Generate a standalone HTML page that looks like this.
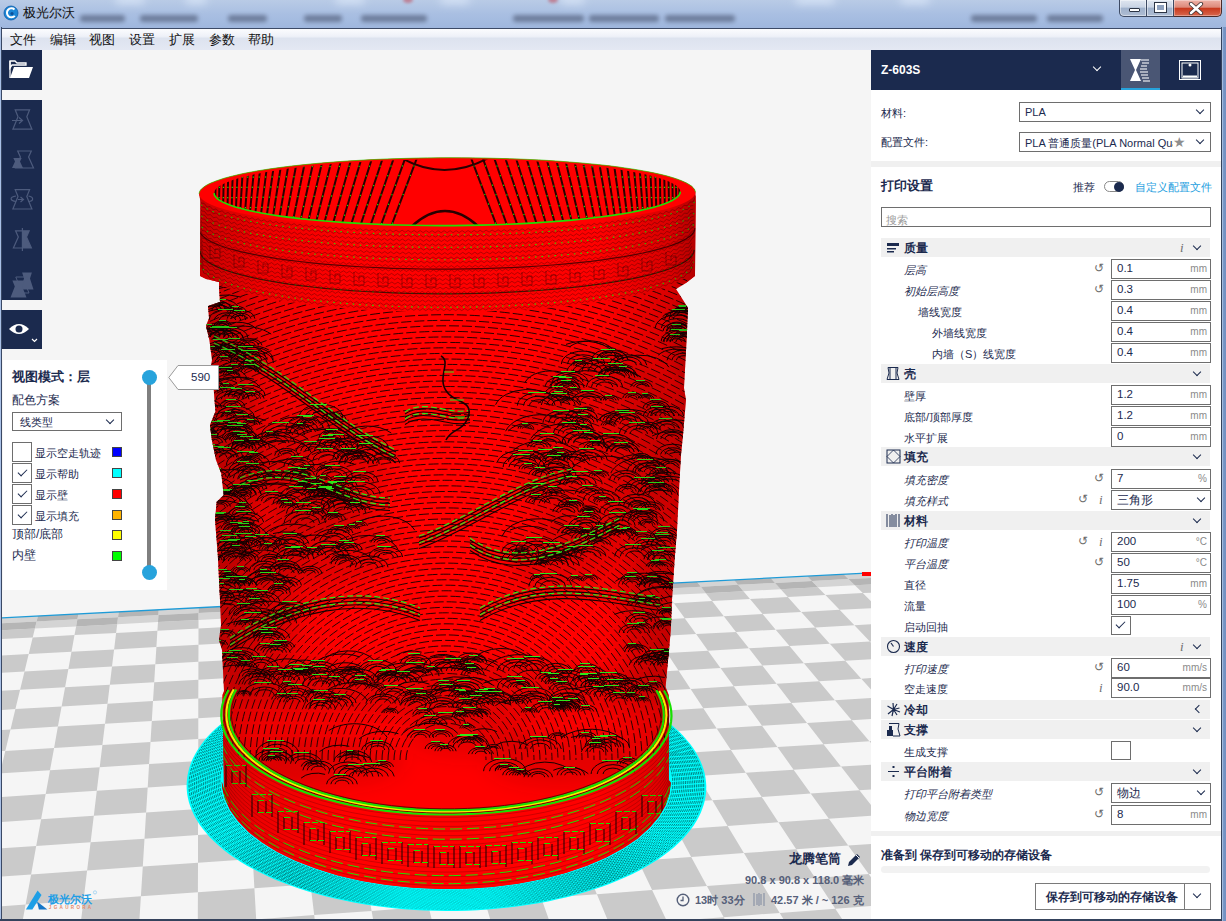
<!DOCTYPE html>
<html><head><meta charset="utf-8">
<style>
*{margin:0;padding:0;box-sizing:border-box}
html,body{width:1226px;height:921px;overflow:hidden;background:#7d9ac6;font-family:"Liberation Sans",sans-serif;color:#1b2a4e}
.abs{position:absolute}
#title{left:0;top:0;width:1226px;height:28px;background:linear-gradient(180deg,#b9cbe6 0%,#a9bfe2 50%,#9fb7de 100%);overflow:hidden}
.blob{position:absolute;background:#404a64;filter:blur(2.2px);opacity:.55;border-radius:3px}
.lblob{position:absolute;background:#e8f2ff;filter:blur(4px);opacity:.6;border-radius:6px}
#ttext{left:23px;top:4px;font-size:13px;color:#111;letter-spacing:0px}
#menubar{left:2px;top:28px;width:1219px;height:22px;background:linear-gradient(180deg,#fbfcfe 0%,#eef1f8 35%,#dde3ef 45%,#e4e8f3 100%);border-top:1px solid #3c4a66}
.mi{position:absolute;top:3px;font-size:12.5px;color:#111}
#view{left:2px;top:50px;width:869px;height:869px;background:#f5f5f5;overflow:hidden}
#svg{position:absolute;left:0;top:0}
.tb{position:absolute;left:2px;width:40px;background:#1b2a4e}
#panel{left:3px;top:360px;width:164px;height:230px;background:#fff}
#side{left:871px;top:50px;width:350px;height:869px;background:#fff}
#frameR{left:1221px;top:27px;width:1px;height:894px;background:#34425c}
#frameR2{left:1222px;top:27px;width:4px;height:894px;background:linear-gradient(90deg,#b9cdea,#7594c4 40%,#7391c2)}
#frameB{left:0;top:919px;width:1222px;height:2px;background:#34425c}
#frameL{left:0;top:27px;width:1px;height:894px;background:#a9c0e6}
#frameL2{left:1px;top:27px;width:1px;height:894px;background:#3a4864}
.hdr{position:absolute;left:10px;width:329px;height:19px;background:#f0f0f0}
.lbl{position:absolute;font-size:11px;color:#1b2a4e;white-space:nowrap}
.it{font-style:italic}
.inp{position:absolute;left:240px;width:100px;height:20px;border:1px solid #6e6e6e;background:#fff;font-size:11.5px;color:#1b2a4e;padding:2px 0 0 5px}
.unit{position:absolute;right:3px;top:3px;font-size:10px;color:#8a8a8a}
.rst{position:absolute;left:222px;font-size:12px;color:#6d6d6d}
.chev{position:absolute;width:7px;height:7px;border-right:1.6px solid #1b2a4e;border-bottom:1.6px solid #1b2a4e;transform:rotate(45deg)}
.cb{position:absolute;width:20px;height:20px;border:1px solid #6e6e6e;background:#fff}
.sw{position:absolute;left:109px;width:10px;height:10px;border:1px solid #444}
</style></head><body>
<div id="title" class="abs">
  <div class="lblob" style="left:115px;top:-5px;width:30px;height:9px"></div>
  <div class="lblob" style="left:185px;top:-5px;width:22px;height:9px"></div>
  <div class="lblob" style="left:335px;top:-5px;width:30px;height:9px"></div>
  <div class="lblob" style="left:440px;top:-5px;width:30px;height:9px"></div>
  <div class="lblob" style="left:560px;top:-5px;width:25px;height:9px"></div>
  <div class="lblob" style="left:795px;top:-5px;width:40px;height:9px"></div>
  <div class="lblob" style="left:900px;top:-5px;width:30px;height:9px"></div>
  <div class="abs" style="left:548px;top:-3px;width:10px;height:6px;border-radius:50%;background:#c05060;filter:blur(1.5px);opacity:.6"></div>
  <div class="abs" style="left:403px;top:-3px;width:10px;height:6px;border-radius:50%;background:#c05060;filter:blur(1.5px);opacity:.6"></div>
  <div class="blob" style="left:80px;top:15px;width:45px;height:7px"></div>
  <div class="blob" style="left:140px;top:15px;width:58px;height:7px"></div>
  <div class="blob" style="left:228px;top:15px;width:39px;height:7px"></div>
  <div class="blob" style="left:304px;top:15px;width:38px;height:7px"></div>
  <div class="blob" style="left:361px;top:15px;width:66px;height:7px"></div>
  <div class="blob" style="left:513px;top:15px;width:71px;height:7px"></div>
  <div class="blob" style="left:589px;top:15px;width:70px;height:7px"></div>
  <div class="blob" style="left:665px;top:15px;width:70px;height:7px"></div>
  <div class="blob" style="left:971px;top:15px;width:66px;height:7px"></div>
  <div class="blob" style="left:1047px;top:15px;width:56px;height:7px"></div>
  <svg class="abs" style="left:3px;top:5px" width="16" height="16"><circle cx="8" cy="8" r="7" fill="#1b86d6"/><circle cx="8" cy="8" r="7" fill="none" stroke="#0c5aa8" stroke-width=".8"/><path d="M11.5,4.5 A4.5,4.5 0 1 0 11.8,10.8" fill="none" stroke="#fff" stroke-width="2"/><circle cx="9" cy="8.5" r="1.6" fill="#0c4f98"/></svg>
  <div id="ttext" class="abs">极光尔沃</div>
  <div class="abs" style="left:1119px;top:0;width:28px;height:17px;border:1px solid #3d4a63;border-top:none;border-radius:0 0 0 5px;background:linear-gradient(180deg,#dfe6f0 0%,#c9d4e4 45%,#9fb1cb 50%,#aebdd3 100%);box-shadow:inset 0 0 0 1px rgba(255,255,255,.45)"><div class="abs" style="left:9px;top:8px;width:11px;height:4px;background:#fff;border:1px solid #2c3444;border-radius:1px"></div></div>
  <div class="abs" style="left:1147px;top:0;width:27px;height:17px;border:1px solid #3d4a63;border-top:none;border-left:none;background:linear-gradient(180deg,#dfe6f0 0%,#c9d4e4 45%,#9fb1cb 50%,#aebdd3 100%);box-shadow:inset 0 0 0 1px rgba(255,255,255,.45)"><div class="abs" style="left:8px;top:3px;width:11px;height:9px;border:2px solid #fff;outline:1px solid #2c3444;background:#8fa2bf"></div></div>
  <div class="abs" style="left:1174px;top:0;width:48px;height:17px;border:1px solid #4a2a28;border-top:none;border-left:none;border-radius:0 0 5px 0;background:linear-gradient(180deg,#eeb3a8 0%,#dd8a7a 45%,#c8391d 52%,#d8684e 100%);box-shadow:inset 0 0 0 1px rgba(255,255,255,.35)">
    <svg class="abs" style="left:14px;top:2px" width="16" height="13"><path d="M3,2 L13,11 M13,2 L3,11" stroke="#3a3030" stroke-width="4.2" stroke-linecap="round"/><path d="M3,2 L13,11 M13,2 L3,11" stroke="#fff" stroke-width="2.6" stroke-linecap="round"/></svg></div>
</div>
<div id="frameL" class="abs"></div><div id="frameL2" class="abs"></div>
<div id="menubar" class="abs">
  <div class="mi" style="left:8px">文件</div>
  <div class="mi" style="left:48px">编辑</div>
  <div class="mi" style="left:87px">视图</div>
  <div class="mi" style="left:127px">设置</div>
  <div class="mi" style="left:167px">扩展</div>
  <div class="mi" style="left:207px">参数</div>
  <div class="mi" style="left:246px">帮助</div>
</div>
<div id="view" class="abs">
<svg id="svg" width="869" height="869" viewBox="2 50 869 869">
<polygon points="-43.8,620.3 915.6,570.5 1336.8,939.2 -204.1,1064.7" fill="#f5f5f5"/>
<path d="M-51.6,641.9 L-9.3,639.6 L-14.4,656.4 L-57.7,658.7ZM-64.1,676.4 L-19.6,673.9 L-25.2,692.4 L-70.8,695.0ZM-77.8,714.5 L-31.0,711.8 L-37.2,732.3 L-85.2,735.1ZM-93.1,756.9 L-43.7,753.8 L-50.6,776.6 L-101.4,779.8ZM-110.1,804.1 L-57.8,800.8 L-65.5,826.3 L-119.4,829.9ZM-129.3,857.2 L-73.7,853.4 L-82.4,882.3 L-139.8,886.3ZM-150.9,917.3 L-91.6,913.0 L-101.5,945.8 L-162.9,950.4ZM-175.7,985.8 L-112.1,980.9 L-123.4,1018.6 L-189.4,1023.8ZM-6.6,630.7 L34.9,628.5 L32.7,637.4 L-9.3,639.6ZM-14.4,656.4 L28.7,654.0 L24.5,671.5 L-19.6,673.9ZM-25.2,692.4 L20.1,689.8 L15.4,709.1 L-31.0,711.8ZM-37.2,732.3 L10.5,729.4 L5.3,750.9 L-43.7,753.8ZM-50.6,776.6 L-0.1,773.5 L-5.9,797.4 L-57.8,800.8ZM-65.5,826.3 L-12.0,822.8 L-18.5,849.7 L-73.7,853.4ZM-82.4,882.3 L-25.4,878.3 L-32.8,908.8 L-91.6,913.0ZM-101.5,945.8 L-40.6,941.3 L-49.0,976.1 L-112.1,980.9ZM-123.4,1018.6 L-58.1,1013.5 L-67.7,1053.6 L-135.6,1059.1ZM32.7,637.4 L74.5,635.1 L71.5,651.7 L28.7,654.0ZM24.5,671.5 L68.4,669.0 L65.1,687.3 L20.1,689.8ZM15.4,709.1 L61.6,706.4 L57.9,726.6 L10.5,729.4ZM5.3,750.9 L54.1,747.9 L50.0,770.3 L-0.1,773.5ZM-5.9,797.4 L45.7,794.1 L41.1,819.3 L-12.0,822.8ZM-18.5,849.7 L36.2,846.0 L31.1,874.4 L-25.4,878.3ZM-32.8,908.8 L25.6,904.6 L19.7,936.9 L-40.6,941.3ZM-49.0,976.1 L13.4,971.4 L6.7,1008.4 L-58.1,1013.5ZM76.1,626.4 L117.2,624.2 L116.1,632.9 L74.5,635.1ZM71.5,651.7 L114.1,649.4 L112.0,666.6 L68.4,669.0ZM65.1,687.3 L109.8,684.7 L107.5,703.8 L61.6,706.4ZM57.9,726.6 L105.0,723.8 L102.4,744.9 L54.1,747.9ZM50.0,770.3 L99.7,767.2 L96.8,790.8 L45.7,794.1ZM41.1,819.3 L93.8,815.8 L90.6,842.3 L36.2,846.0ZM31.1,874.4 L87.1,870.5 L83.5,900.4 L25.6,904.6ZM19.7,936.9 L79.6,932.4 L75.4,966.6 L13.4,971.4ZM6.7,1008.4 L70.9,1003.3 L66.1,1042.7 L-0.5,1048.1ZM116.1,632.9 L157.4,630.7 L156.4,647.1 L114.1,649.4ZM112.0,666.6 L155.3,664.2 L154.2,682.2 L109.8,684.7ZM107.5,703.8 L153.0,701.1 L151.8,721.0 L105.0,723.8ZM102.4,744.9 L150.5,742.0 L149.1,764.1 L99.7,767.2ZM96.8,790.8 L147.7,787.6 L146.1,812.4 L93.8,815.8ZM90.6,842.3 L144.5,838.7 L142.8,866.6 L87.1,870.5ZM83.5,900.4 L140.9,896.3 L138.9,928.1 L79.6,932.4ZM75.4,966.6 L136.8,962.0 L134.6,998.3 L70.9,1003.3ZM158.0,622.0 L198.5,619.9 L198.5,628.5 L157.4,630.7ZM156.4,647.1 L198.5,644.8 L198.4,661.8 L155.3,664.2ZM154.2,682.2 L198.4,679.7 L198.3,698.5 L153.0,701.1ZM151.8,721.0 L198.3,718.2 L198.3,739.1 L150.5,742.0ZM149.1,764.1 L198.2,761.1 L198.1,784.3 L147.7,787.6ZM146.1,812.4 L198.1,808.9 L198.0,835.0 L144.5,838.7ZM142.8,866.6 L198.0,862.7 L197.9,892.2 L140.9,896.3ZM138.9,928.1 L197.8,923.7 L197.8,957.3 L136.8,962.0ZM134.6,998.3 L197.7,993.3 L197.6,1032.0 L132.2,1037.3ZM198.5,628.5 L239.4,626.3 L240.3,642.5 L198.5,644.8ZM198.4,661.8 L241.3,659.4 L242.3,677.2 L198.4,679.7ZM198.3,698.5 L243.4,695.8 L244.5,715.5 L198.3,718.2ZM198.3,739.1 L245.7,736.2 L246.9,758.0 L198.2,761.1ZM198.1,784.3 L248.3,781.1 L249.7,805.5 L198.1,808.9ZM198.0,835.0 L251.2,831.4 L252.8,858.9 L198.0,862.7ZM197.9,892.2 L254.4,888.2 L256.2,919.4 L197.8,923.7ZM197.8,957.3 L258.2,952.7 L260.2,988.4 L197.7,993.3ZM238.9,617.8 L279.0,615.7 L280.0,624.2 L239.4,626.3ZM240.3,642.5 L281.9,640.2 L283.8,657.0 L241.3,659.4ZM242.3,677.2 L285.9,674.7 L288.1,693.2 L243.4,695.8ZM244.5,715.5 L290.4,712.8 L292.8,733.3 L245.7,736.2ZM246.9,758.0 L295.4,755.0 L298.0,777.9 L248.3,781.1ZM249.7,805.5 L300.9,802.2 L303.9,827.9 L251.2,831.4ZM252.8,858.9 L307.1,855.1 L310.5,884.2 L254.4,888.2ZM256.2,919.4 L314.2,915.1 L318.0,948.1 L258.2,952.7ZM260.2,988.4 L322.2,983.5 L326.7,1021.5 L262.4,1026.7ZM280.0,624.2 L320.4,622.0 L323.2,638.0 L281.9,640.2ZM283.8,657.0 L326.2,654.7 L329.3,672.2 L285.9,674.7ZM288.1,693.2 L332.5,690.6 L336.0,710.0 L290.4,712.8ZM292.8,733.3 L339.6,730.5 L343.4,752.0 L295.4,755.0ZM298.0,777.9 L347.5,774.7 L351.7,798.8 L300.9,802.2ZM303.9,827.9 L356.3,824.3 L361.1,851.4 L307.1,855.1ZM310.5,884.2 L366.2,880.2 L371.6,910.9 L314.2,915.1ZM318.0,948.1 L377.4,943.6 L383.7,978.7 L322.2,983.5ZM318.9,613.6 L358.5,611.5 L360.5,619.9 L320.4,622.0ZM323.2,638.0 L364.3,635.7 L368.2,652.3 L326.2,654.7ZM329.3,672.2 L372.4,669.8 L376.7,688.1 L332.5,690.6ZM336.0,710.0 L381.3,707.3 L386.1,727.6 L339.6,730.5ZM343.4,752.0 L391.2,749.0 L396.6,771.6 L347.5,774.7ZM351.7,798.8 L402.2,795.5 L408.2,820.8 L356.3,824.3ZM361.1,851.4 L414.6,847.7 L421.4,876.2 L366.2,880.2ZM371.6,910.9 L428.6,906.6 L436.3,939.1 L377.4,943.6ZM383.7,978.7 L444.6,973.9 L453.4,1011.1 L390.3,1016.3ZM360.5,619.9 L400.5,617.7 L405.2,633.5 L364.3,635.7ZM368.2,652.3 L410.1,650.0 L415.2,667.3 L372.4,669.8ZM376.7,688.1 L420.6,685.5 L426.3,704.7 L381.3,707.3ZM386.1,727.6 L432.3,724.8 L438.6,746.0 L391.2,749.0ZM396.6,771.6 L445.3,768.5 L452.4,792.2 L402.2,795.5ZM408.2,820.8 L459.8,817.3 L467.8,844.0 L414.6,847.7ZM421.4,876.2 L476.2,872.3 L485.2,902.5 L428.6,906.6ZM436.3,939.1 L494.8,934.7 L505.0,969.1 L444.6,973.9ZM398.0,609.4 L437.2,607.3 L440.2,615.6 L400.5,617.7ZM405.2,633.5 L445.8,631.3 L451.7,647.7 L410.1,650.0ZM415.2,667.3 L457.8,664.9 L464.3,683.0 L420.6,685.5ZM426.3,704.7 L471.1,702.0 L478.2,722.0 L432.3,724.8ZM438.6,746.0 L485.8,743.1 L493.7,765.4 L445.3,768.5ZM452.4,792.2 L502.1,788.9 L511.1,813.8 L459.8,817.3ZM467.8,844.0 L520.5,840.3 L530.6,868.4 L476.2,872.3ZM485.2,902.5 L541.3,898.3 L552.7,930.3 L494.8,934.7ZM505.0,969.1 L564.9,964.4 L578.0,1001.0 L516.0,1006.0ZM440.2,615.6 L479.7,613.5 L486.2,629.1 L445.8,631.3ZM451.7,647.7 L493.0,645.4 L500.1,662.5 L457.8,664.9ZM464.3,683.0 L507.6,680.5 L515.5,699.3 L471.1,702.0ZM478.2,722.0 L523.8,719.2 L532.6,740.2 L485.8,743.1ZM493.7,765.4 L541.8,762.3 L551.6,785.6 L502.1,788.9ZM511.1,813.8 L561.9,810.4 L572.9,836.6 L520.5,840.3ZM530.6,868.4 L584.5,864.5 L596.9,894.2 L541.3,898.3ZM552.7,930.3 L610.1,925.9 L624.3,959.7 L564.9,964.4ZM476.2,605.3 L515.0,603.2 L518.9,611.4 L479.7,613.5ZM486.2,629.1 L526.3,626.9 L534.1,643.1 L493.0,645.4ZM500.1,662.5 L542.2,660.1 L550.7,677.9 L507.6,680.5ZM515.5,699.3 L559.7,696.7 L569.1,716.4 L523.8,719.2ZM532.6,740.2 L579.1,737.2 L589.6,759.2 L541.8,762.3ZM551.6,785.6 L600.6,782.4 L612.4,807.0 L561.9,810.4ZM572.9,836.6 L624.8,833.0 L638.1,860.7 L584.5,864.5ZM596.9,894.2 L652.1,890.1 L667.1,921.5 L610.1,925.9ZM624.3,959.7 L683.2,955.1 L700.3,991.0 L639.4,996.0ZM518.9,611.4 L558.0,609.3 L566.3,624.7 L526.3,626.9ZM534.1,643.1 L574.9,640.8 L584.0,657.7 L542.2,660.1ZM550.7,677.9 L593.6,675.5 L603.6,694.1 L559.7,696.7ZM569.1,716.4 L614.1,713.7 L625.3,734.4 L579.1,737.2ZM589.6,759.2 L637.0,756.2 L649.4,779.2 L600.6,782.4ZM612.4,807.0 L662.5,803.6 L676.4,829.4 L624.8,833.0ZM638.1,860.7 L691.2,856.9 L706.9,886.1 L652.1,890.1ZM667.1,921.5 L723.7,917.2 L741.6,950.5 L683.2,955.1ZM553.6,601.2 L592.0,599.2 L596.8,607.3 L558.0,609.3ZM566.3,624.7 L606.0,622.6 L615.6,638.6 L574.9,640.8ZM584.0,657.7 L625.6,655.4 L636.1,673.0 L593.6,675.5ZM603.6,694.1 L647.2,691.5 L658.9,711.0 L614.1,713.7ZM625.3,734.4 L671.1,731.5 L684.1,753.1 L637.0,756.2ZM649.4,779.2 L697.8,776.0 L712.3,800.2 L662.5,803.6ZM676.4,829.4 L727.6,825.9 L743.9,853.1 L691.2,856.9ZM706.9,886.1 L761.2,882.1 L779.7,912.9 L723.7,917.2ZM741.6,950.5 L799.5,945.9 L820.6,981.2 L760.7,986.1ZM596.8,607.3 L635.5,605.2 L645.5,620.4 L606.0,622.6ZM615.6,638.6 L655.9,636.3 L666.9,653.0 L625.6,655.4ZM636.1,673.0 L678.5,670.5 L690.6,688.9 L647.2,691.5ZM658.9,711.0 L703.3,708.3 L716.7,728.6 L671.1,731.5ZM684.1,753.1 L730.9,750.1 L745.8,772.8 L697.8,776.0ZM712.3,800.2 L761.7,796.9 L778.4,822.3 L727.6,825.9ZM743.9,853.1 L796.2,849.3 L815.2,878.1 L761.2,882.1ZM779.7,912.9 L835.3,908.7 L856.9,941.4 L799.5,945.9ZM630.1,597.1 L668.1,595.1 L673.9,603.2 L635.5,605.2ZM645.5,620.4 L684.7,618.3 L696.1,634.1 L655.9,636.3ZM666.9,653.0 L708.0,650.7 L720.5,668.1 L678.5,670.5ZM690.6,688.9 L733.7,686.3 L747.5,705.6 L703.3,708.3ZM716.7,728.6 L762.0,725.8 L777.4,747.1 L730.9,750.1ZM745.8,772.8 L793.6,769.7 L810.7,793.5 L761.7,796.9ZM778.4,822.3 L828.9,818.8 L848.2,845.6 L796.2,849.3ZM815.2,878.1 L868.7,874.1 L890.5,904.5 L835.3,908.7ZM856.9,941.4 L913.8,936.9 L938.7,971.6 L879.9,976.4ZM673.9,603.2 L712.1,601.1 L723.8,616.2 L684.7,618.3ZM696.1,634.1 L736.0,631.9 L748.9,648.3 L708.0,650.7ZM720.5,668.1 L762.3,665.6 L776.5,683.8 L733.7,686.3ZM747.5,705.6 L791.3,702.9 L807.0,723.0 L762.0,725.8ZM777.4,747.1 L823.5,744.2 L841.0,766.6 L793.6,769.7ZM810.7,793.5 L859.4,790.2 L879.0,815.3 L828.9,818.8ZM848.2,845.6 L899.7,841.9 L921.7,870.2 L868.7,874.1ZM890.5,904.5 L945.2,900.3 L970.3,932.5 L913.8,936.9ZM705.8,593.2 L743.4,591.2 L750.0,599.1 L712.1,601.1ZM723.8,616.2 L762.6,614.0 L775.7,629.7 L736.0,631.9ZM748.9,648.3 L789.5,646.0 L803.9,663.2 L762.3,665.6ZM776.5,683.8 L819.0,681.3 L834.9,700.2 L791.3,702.9ZM807.0,723.0 L851.7,720.2 L869.4,741.2 L823.5,744.2ZM841.0,766.6 L888.1,763.5 L907.8,787.0 L859.4,790.2ZM879.0,815.3 L928.7,811.9 L950.9,838.3 L899.7,841.9ZM921.7,870.2 L974.4,866.3 L999.5,896.2 L945.2,900.3ZM970.3,932.5 L1026.3,928.1 L1054.9,962.2 L997.1,966.9ZM750.0,599.1 L787.8,597.1 L801.2,611.9 L762.6,614.0ZM775.7,629.7 L815.2,627.5 L829.8,643.7 L789.5,646.0ZM803.9,663.2 L845.2,660.8 L861.3,678.7 L819.0,681.3ZM834.9,700.2 L878.3,697.6 L896.1,717.4 L851.7,720.2ZM869.4,741.2 L914.9,738.3 L934.8,760.4 L888.1,763.5ZM907.8,787.0 L955.8,783.7 L978.0,808.4 L928.7,811.9ZM950.9,838.3 L1001.6,834.6 L1026.7,862.5 L974.4,866.3ZM999.5,896.2 L1053.4,892.1 L1081.8,923.7 L1026.3,928.1ZM780.7,589.2 L817.9,587.2 L825.4,595.1 L787.8,597.1ZM801.2,611.9 L839.6,609.8 L854.4,625.3 L815.2,627.5ZM829.8,643.7 L869.9,641.5 L886.2,658.4 L845.2,660.8ZM861.3,678.7 L903.3,676.2 L921.3,694.9 L878.3,697.6ZM896.1,717.4 L940.2,714.6 L960.2,735.4 L914.9,738.3ZM934.8,760.4 L981.2,757.3 L1003.5,780.5 L955.8,783.7ZM978.0,808.4 L1027.0,805.0 L1052.0,831.0 L1001.6,834.6ZM1026.7,862.5 L1078.6,858.6 L1106.8,888.0 L1053.4,892.1ZM1081.8,923.7 L1136.9,919.4 L1169.1,952.9 L1112.2,957.5ZM825.4,595.1 L862.8,593.1 L877.7,607.8 L839.6,609.8ZM854.4,625.3 L893.4,623.1 L909.8,639.2 L869.9,641.5ZM886.2,658.4 L927.0,656.0 L945.1,673.7 L903.3,676.2ZM921.3,694.9 L964.1,692.3 L984.1,711.9 L940.2,714.6ZM960.2,735.4 L1005.1,732.5 L1027.4,754.3 L981.2,757.3ZM1003.5,780.5 L1050.8,777.3 L1075.7,801.6 L1027.0,805.0ZM1052.0,831.0 L1102.0,827.4 L1130.0,854.8 L1078.6,858.6ZM1106.8,888.0 L1159.8,884.0 L1191.5,915.1 L1136.9,919.4ZM854.8,585.3 L891.5,583.4 L899.9,591.1 L862.8,593.1ZM877.7,607.8 L915.7,605.7 L932.2,621.0 L893.4,623.1ZM909.8,639.2 L949.5,636.9 L967.6,653.7 L927.0,656.0ZM945.1,673.7 L986.6,671.3 L1006.6,689.7 L964.1,692.3ZM984.1,711.9 L1027.6,709.2 L1049.8,729.7 L1005.1,732.5ZM1027.4,754.3 L1073.2,751.3 L1097.9,774.1 L1050.8,777.3ZM1075.7,801.6 L1124.0,798.2 L1151.7,823.9 L1102.0,827.4ZM1130.0,854.8 L1181.1,851.0 L1212.4,880.0 L1159.8,884.0ZM1191.5,915.1 L1245.7,910.8 L1281.4,943.7 L1225.5,948.3ZM899.9,591.1 L936.9,589.1 L953.4,603.6 L915.7,605.7ZM932.2,621.0 L970.8,618.8 L988.9,634.7 L949.5,636.9ZM967.6,653.7 L1007.9,651.3 L1027.9,668.8 L986.6,671.3ZM1006.6,689.7 L1048.9,687.2 L1070.9,706.5 L1027.6,709.2ZM1049.8,729.7 L1094.2,726.8 L1118.7,748.3 L1073.2,751.3ZM1097.9,774.1 L1144.6,770.9 L1171.9,794.9 L1124.0,798.2ZM1151.7,823.9 L1201.0,820.3 L1231.8,847.3 L1181.1,851.0ZM1212.4,880.0 L1264.6,876.0 L1299.5,906.6 L1245.7,910.8Z" fill="#cacaca"/>
<path d="M-45.8,625.8 L-4.5,623.6 L-6.6,630.7 L-48.4,632.9ZM-2.9,618.2 L37.9,616.1 L36.6,621.5 L-4.5,623.6ZM36.6,621.5 L77.4,619.3 L76.1,626.4 L34.9,628.5ZM78.4,614.0 L118.7,611.9 L118.0,617.2 L77.4,619.3ZM118.0,617.2 L158.4,615.1 L158.0,622.0 L117.2,624.2ZM158.7,609.8 L198.6,607.8 L198.5,613.0 L158.4,615.1ZM198.5,613.0 L238.5,610.9 L238.9,617.8 L198.5,619.9ZM238.2,605.7 L277.6,603.7 L278.2,608.9 L238.5,610.9ZM278.2,608.9 L317.7,606.8 L318.9,613.6 L279.0,615.7ZM316.8,601.6 L355.7,599.6 L356.9,604.7 L317.7,606.8ZM356.9,604.7 L396.0,602.7 L398.0,609.4 L358.5,611.5ZM394.5,597.6 L433.0,595.6 L434.8,600.7 L396.0,602.7ZM434.8,600.7 L473.5,598.7 L476.2,605.3 L437.2,607.3ZM471.4,593.6 L509.5,591.6 L511.9,596.6 L473.5,598.7ZM511.9,596.6 L550.1,594.6 L553.6,601.2 L515.0,603.2ZM547.4,589.7 L585.1,587.7 L588.1,592.7 L550.1,594.6ZM588.1,592.7 L625.9,590.7 L630.1,597.1 L592.0,599.2ZM622.6,585.7 L659.9,583.8 L663.5,588.7 L625.9,590.7ZM663.5,588.7 L700.9,586.8 L705.8,593.2 L668.1,595.1ZM697.1,581.9 L734.0,580.0 L738.0,584.8 L700.9,586.8ZM738.0,584.8 L775.0,582.9 L780.7,589.2 L743.4,591.2ZM770.7,578.1 L807.2,576.2 L811.8,581.0 L775.0,582.9ZM811.8,581.0 L848.4,579.1 L854.8,585.3 L817.9,587.2ZM843.6,574.3 L879.7,572.4 L884.8,577.2 L848.4,579.1ZM884.8,577.2 L921.0,575.3 L928.1,581.4 L891.5,583.4Z" fill="#d4d4d4"/>
<path d="M-43.8,620.3 L-2.9,618.2 L-4.5,623.6 L-45.8,625.8ZM-4.5,623.6 L36.6,621.5 L34.9,628.5 L-6.6,630.7ZM37.9,616.1 L78.4,614.0 L77.4,619.3 L36.6,621.5ZM77.4,619.3 L118.0,617.2 L117.2,624.2 L76.1,626.4ZM118.7,611.9 L158.7,609.8 L158.4,615.1 L118.0,617.2ZM158.4,615.1 L198.5,613.0 L198.5,619.9 L158.0,622.0ZM198.6,607.8 L238.2,605.7 L238.5,610.9 L198.5,613.0ZM238.5,610.9 L278.2,608.9 L279.0,615.7 L238.9,617.8ZM277.6,603.7 L316.8,601.6 L317.7,606.8 L278.2,608.9ZM317.7,606.8 L356.9,604.7 L358.5,611.5 L318.9,613.6ZM355.7,599.6 L394.5,597.6 L396.0,602.7 L356.9,604.7ZM396.0,602.7 L434.8,600.7 L437.2,607.3 L398.0,609.4ZM433.0,595.6 L471.4,593.6 L473.5,598.7 L434.8,600.7ZM473.5,598.7 L511.9,596.6 L515.0,603.2 L476.2,605.3ZM509.5,591.6 L547.4,589.7 L550.1,594.6 L511.9,596.6ZM550.1,594.6 L588.1,592.7 L592.0,599.2 L553.6,601.2ZM585.1,587.7 L622.6,585.7 L625.9,590.7 L588.1,592.7ZM625.9,590.7 L663.5,588.7 L668.1,595.1 L630.1,597.1ZM659.9,583.8 L697.1,581.9 L700.9,586.8 L663.5,588.7ZM700.9,586.8 L738.0,584.8 L743.4,591.2 L705.8,593.2ZM734.0,580.0 L770.7,578.1 L775.0,582.9 L738.0,584.8ZM775.0,582.9 L811.8,581.0 L817.9,587.2 L780.7,589.2ZM807.2,576.2 L843.6,574.3 L848.4,579.1 L811.8,581.0ZM848.4,579.1 L884.8,577.2 L891.5,583.4 L854.8,585.3ZM879.7,572.4 L915.6,570.5 L921.0,575.3 L884.8,577.2Z" fill="#b5b5b5"/>
<line x1="-43.8" y1="620.3" x2="915.6" y2="570.5" stroke="#1e9bd7" stroke-width="1.3"/>
<path d="M695.7,752.1 L698.0,756.2 L700.1,760.3 L701.9,764.5 L703.4,768.7 L704.6,773.0 L705.4,777.3 L706.0,781.7 L706.3,786.1 L706.2,790.5 L705.8,794.9 L705.0,799.4 L704.0,803.8 L702.5,808.3 L700.8,812.7 L698.7,817.1 L696.2,821.5 L693.4,825.9 L690.2,830.3 L686.7,834.6 L682.8,838.9 L678.6,843.1 L674.1,847.2 L669.1,851.3 L663.9,855.3 L658.3,859.2 L652.3,863.1 L646.0,866.8 L639.4,870.4 L632.5,873.9 L625.3,877.3 L617.8,880.6 L610.0,883.7 L601.9,886.7 L593.5,889.6 L584.9,892.3 L576.0,894.8 L566.9,897.2 L557.6,899.3 L548.1,901.4 L538.5,903.2 L528.6,904.8 L518.6,906.3 L508.5,907.6 L498.3,908.6 L487.9,909.5 L477.5,910.2 L467.0,910.7 L456.5,910.9 L446.0,911.0 L435.5,910.8 L425.0,910.5 L414.5,909.9 L404.1,909.2 L393.8,908.2 L383.6,907.1 L373.5,905.7 L363.5,904.2 L353.7,902.5 L344.1,900.6 L334.6,898.5 L325.3,896.3 L316.3,893.8 L307.5,891.2 L298.9,888.5 L290.6,885.6 L282.5,882.6 L274.7,879.4 L267.2,876.1 L260.1,872.6 L253.2,869.1 L246.6,865.4 L240.4,861.7 L234.5,857.8 L228.9,853.9 L223.7,849.9 L218.8,845.8 L214.2,841.6 L210.0,837.4 L206.2,833.1 L202.7,828.8 L199.5,824.4 L196.7,820.1 L194.3,815.7 L192.2,811.2 L190.4,806.8 L189.0,802.4 L187.9,797.9 L187.1,793.5 L186.7,789.1 L186.6,784.7 L186.9,780.4 L187.4,776.0 L188.3,771.7 L189.4,767.5 L190.9,763.3 L192.6,759.1 L194.7,755.0 L197.0,750.9 L199.6,746.9 L202.4,743.0 L205.5,739.1 L208.9,735.3 L212.5,731.6 L216.3,728.0 L220.4,724.4 L224.7,720.9 L229.2,717.5 L233.9,714.2 L238.8,711.0 L243.9,707.9 L249.2,704.8 L254.7,701.9 L260.3,699.0 L266.1,696.3 L272.1,693.6 L278.2,691.1 L284.5,688.6 L290.9,686.3 L297.4,684.0 L304.1,681.9 L310.8,679.9 L317.7,677.9 L324.7,676.1 L331.8,674.4 L339.0,672.8 L346.2,671.3 L353.5,669.9 L361.0,668.6 L368.4,667.5 L376.0,666.4 L383.6,665.5 L391.2,664.6 L398.9,663.9 L406.6,663.3 L414.4,662.8 L422.1,662.4 L429.9,662.2 L437.7,662.0 L445.6,662.0 L453.4,662.0 L461.2,662.2 L469.0,662.5 L476.8,662.9 L484.5,663.4 L492.3,664.1 L500.0,664.8 L507.6,665.7 L515.2,666.6 L522.8,667.7 L530.3,668.9 L537.8,670.2 L545.1,671.6 L552.4,673.1 L559.6,674.8 L566.8,676.5 L573.8,678.3 L580.7,680.3 L587.5,682.4 L594.2,684.5 L600.8,686.8 L607.2,689.2 L613.6,691.6 L619.7,694.2 L625.7,696.9 L631.6,699.7 L637.3,702.6 L642.8,705.5 L648.2,708.6 L653.3,711.8 L658.3,715.0 L663.1,718.4 L667.6,721.8 L672.0,725.3 L676.1,728.9 L680.0,732.6 L683.6,736.3 L687.0,740.2 L690.2,744.1 L693.1,748.0Z" fill="#00ffff"/>
<defs><linearGradient id="bg1" gradientUnits="userSpaceOnUse" x1="186" y1="0" x2="706" y2="0"><stop offset="0" stop-color="#fff"/><stop offset="0.2" stop-color="#fff"/><stop offset="0.42" stop-color="#555"/><stop offset="0.58" stop-color="#555"/><stop offset="0.8" stop-color="#fff"/><stop offset="1" stop-color="#fff"/></linearGradient><mask id="bm"><rect x="150" y="650" width="600" height="300" fill="url(#bg1)"/></mask></defs>
<path d="M664.7,754.1 L667.5,759.4 L669.7,764.9 L671.3,770.5 L672.4,776.2 L672.8,781.9 L672.6,787.6 L671.7,793.4 L670.2,799.1 L668.0,804.9 L665.1,810.6 L661.6,816.3 L657.4,821.9 L652.5,827.5 L647.0,832.9 L640.7,838.2 L633.9,843.3 L626.3,848.3 L618.2,853.1 L609.4,857.7 L600.1,862.0 L590.2,866.1 L579.8,869.9 L568.8,873.5 L557.4,876.7 L545.6,879.6 L533.5,882.2 L520.9,884.5 L508.1,886.4 L495.1,887.9 L481.8,889.1 L468.4,889.9 L455.0,890.3 L441.5,890.3 L428.0,889.9 L414.6,889.2 L401.3,888.0 L388.2,886.5 L375.3,884.7 L362.7,882.4 L350.5,879.9 L338.6,877.0 L327.1,873.8 L316.0,870.2 L305.5,866.4 L295.5,862.4 L286.0,858.1 L277.1,853.5 L268.7,848.8 L261.0,843.8 L254.0,838.7 L247.6,833.4 L241.8,828.0 L236.7,822.5 L232.3,816.9 L228.6,811.3 L225.5,805.6 L223.1,799.8 L221.3,794.1 L220.2,788.3 L219.8,782.6 L220.0,776.9 L220.8,771.3 L222.2,765.7 L224.2,760.2 L226.7,754.8 L229.8,749.5 L233.5,744.4 L237.6,739.3 L242.3,734.4 L247.4,729.6 L253.0,725.0 L259.0,720.6 L265.4,716.3 L272.3,712.2 L279.5,708.3 L287.0,704.6 L294.9,701.1 L303.0,697.8 L311.5,694.7 L320.2,691.7 L329.2,689.0 L338.4,686.5 L347.8,684.3 L357.4,682.2 L367.2,680.4 L377.1,678.8 L387.2,677.4 L397.3,676.2 L407.6,675.3 L417.9,674.6 L428.2,674.1 L438.6,673.8 L449.0,673.8 L459.5,674.0 L469.8,674.5 L480.2,675.1 L490.5,676.0 L500.7,677.1 L510.8,678.5 L520.8,680.1 L530.7,681.9 L540.3,683.9 L549.9,686.1 L559.2,688.6 L568.3,691.2 L577.2,694.1 L585.8,697.2 L594.1,700.5 L602.2,704.0 L609.9,707.7 L617.3,711.6 L624.3,715.6 L630.9,719.9 L637.1,724.3 L642.9,728.9 L648.2,733.7 L653.1,738.6 L657.5,743.6 L661.4,748.8ZM666.4,753.9 L669.2,759.4 L671.5,764.9 L673.1,770.5 L674.2,776.2 L674.6,782.0 L674.4,787.8 L673.5,793.6 L672.0,799.4 L669.8,805.2 L666.9,811.0 L663.4,816.7 L659.2,822.4 L654.3,828.0 L648.7,833.4 L642.4,838.8 L635.5,844.0 L627.9,849.0 L619.7,853.8 L610.9,858.4 L601.4,862.8 L591.5,867.0 L580.9,870.8 L569.9,874.4 L558.4,877.7 L546.5,880.6 L534.2,883.3 L521.6,885.5 L508.7,887.5 L495.5,889.0 L482.2,890.2 L468.7,891.0 L455.1,891.4 L441.4,891.4 L427.8,891.0 L414.3,890.3 L400.9,889.1 L387.7,887.6 L374.7,885.7 L362.0,883.5 L349.6,880.9 L337.6,877.9 L326.0,874.7 L314.9,871.1 L304.3,867.3 L294.1,863.2 L284.6,858.8 L275.6,854.2 L267.2,849.4 L259.5,844.5 L252.3,839.3 L245.9,834.0 L240.1,828.5 L235.0,823.0 L230.5,817.3 L226.8,811.6 L223.7,805.9 L221.3,800.1 L219.5,794.3 L218.4,788.5 L218.0,782.7 L218.2,777.0 L219.0,771.3 L220.4,765.7 L222.4,760.2 L225.0,754.7 L228.2,749.4 L231.9,744.2 L236.1,739.1 L240.8,734.2 L245.9,729.4 L251.6,724.7 L257.6,720.3 L264.1,716.0 L271.0,711.8 L278.2,707.9 L285.8,704.2 L293.8,700.6 L302.0,697.3 L310.5,694.1 L319.3,691.2 L328.4,688.5 L337.7,686.0 L347.1,683.7 L356.8,681.6 L366.7,679.8 L376.6,678.1 L386.7,676.8 L397.0,675.6 L407.3,674.6 L417.7,673.9 L428.1,673.4 L438.6,673.2 L449.1,673.2 L459.6,673.4 L470.0,673.8 L480.4,674.5 L490.8,675.4 L501.1,676.5 L511.3,677.9 L521.3,679.4 L531.2,681.2 L541.0,683.3 L550.6,685.5 L560.0,688.0 L569.2,690.7 L578.1,693.6 L586.8,696.7 L595.2,700.0 L603.3,703.5 L611.1,707.2 L618.5,711.2 L625.6,715.3 L632.3,719.5 L638.5,724.0 L644.4,728.6 L649.8,733.4 L654.7,738.3 L659.1,743.4 L663.0,748.6ZM668.1,753.8 L670.9,759.3 L673.2,764.9 L674.9,770.6 L676.0,776.3 L676.4,782.1 L676.2,787.9 L675.4,793.8 L673.8,799.6 L671.6,805.5 L668.8,811.3 L665.2,817.1 L660.9,822.8 L656.0,828.5 L650.4,834.0 L644.1,839.4 L637.1,844.6 L629.5,849.7 L621.2,854.6 L612.3,859.2 L602.8,863.6 L592.7,867.8 L582.1,871.7 L571.0,875.3 L559.4,878.7 L547.4,881.6 L535.0,884.3 L522.3,886.6 L509.2,888.5 L496.0,890.1 L482.5,891.3 L468.9,892.1 L455.1,892.5 L441.4,892.5 L427.7,892.1 L414.0,891.3 L400.5,890.2 L387.2,888.7 L374.1,886.8 L361.3,884.5 L348.8,881.9 L336.7,878.9 L325.0,875.6 L313.8,872.0 L303.0,868.2 L292.8,864.0 L283.2,859.6 L274.1,855.0 L265.7,850.1 L257.9,845.1 L250.7,839.9 L244.2,834.5 L238.4,829.0 L233.2,823.4 L228.8,817.7 L225.0,812.0 L221.9,806.2 L219.5,800.3 L217.7,794.5 L216.6,788.7 L216.2,782.8 L216.4,777.0 L217.2,771.3 L218.7,765.7 L220.7,760.1 L223.3,754.6 L226.5,749.2 L230.2,744.0 L234.5,738.9 L239.2,733.9 L244.4,729.1 L250.1,724.4 L256.3,719.9 L262.8,715.6 L269.7,711.4 L277.0,707.5 L284.7,703.7 L292.7,700.1 L301.0,696.8 L309.6,693.6 L318.5,690.7 L327.6,687.9 L336.9,685.4 L346.5,683.1 L356.2,681.0 L366.1,679.2 L376.2,677.5 L386.3,676.1 L396.6,674.9 L407.0,674.0 L417.5,673.3 L428.0,672.8 L438.5,672.5 L449.1,672.5 L459.7,672.7 L470.2,673.2 L480.7,673.8 L491.1,674.7 L501.5,675.9 L511.7,677.2 L521.8,678.8 L531.8,680.6 L541.7,682.7 L551.3,684.9 L560.8,687.4 L570.1,690.1 L579.1,693.1 L587.8,696.2 L596.3,699.5 L604.4,703.1 L612.3,706.8 L619.8,710.7 L626.9,714.9 L633.6,719.2 L640.0,723.7 L645.8,728.3 L651.3,733.1 L656.3,738.1 L660.7,743.2 L664.7,748.5ZM669.8,753.7 L672.7,759.2 L675.0,764.9 L676.7,770.6 L677.8,776.4 L678.2,782.2 L678.0,788.1 L677.2,794.0 L675.7,799.9 L673.5,805.8 L670.6,811.7 L667.0,817.5 L662.7,823.3 L657.8,829.0 L652.1,834.5 L645.7,840.0 L638.7,845.3 L631.0,850.4 L622.7,855.3 L613.7,860.0 L604.2,864.5 L594.0,868.7 L583.3,872.6 L572.1,876.3 L560.4,879.6 L548.3,882.6 L535.8,885.3 L523.0,887.6 L509.8,889.6 L496.4,891.2 L482.8,892.4 L469.1,893.2 L455.2,893.6 L441.4,893.6 L427.5,893.2 L413.7,892.4 L400.1,891.3 L386.7,889.7 L373.4,887.8 L360.5,885.5 L347.9,882.9 L335.7,879.9 L323.9,876.6 L312.6,873.0 L301.8,869.0 L291.5,864.9 L281.8,860.4 L272.7,855.7 L264.2,850.8 L256.3,845.8 L249.1,840.5 L242.5,835.1 L236.7,829.5 L231.5,823.9 L227.0,818.2 L223.2,812.3 L220.1,806.5 L217.6,800.6 L215.9,794.7 L214.8,788.8 L214.4,782.9 L214.6,777.1 L215.5,771.3 L216.9,765.6 L219.0,760.0 L221.6,754.5 L224.9,749.1 L228.6,743.8 L232.9,738.7 L237.7,733.6 L243.0,728.8 L248.7,724.1 L254.9,719.6 L261.5,715.2 L268.5,711.0 L275.8,707.0 L283.5,703.2 L291.6,699.7 L300.0,696.3 L308.6,693.1 L317.6,690.1 L326.7,687.4 L336.2,684.8 L345.8,682.5 L355.6,680.4 L365.6,678.5 L375.7,676.9 L385.9,675.5 L396.3,674.3 L406.8,673.4 L417.3,672.6 L427.9,672.1 L438.5,671.9 L449.1,671.9 L459.7,672.1 L470.4,672.5 L480.9,673.2 L491.4,674.1 L501.8,675.2 L512.2,676.6 L522.4,678.2 L532.4,680.0 L542.3,682.1 L552.1,684.4 L561.6,686.9 L570.9,689.6 L580.0,692.5 L588.8,695.7 L597.3,699.0 L605.6,702.6 L613.5,706.4 L621.0,710.3 L628.2,714.5 L635.0,718.8 L641.4,723.3 L647.3,728.0 L652.8,732.9 L657.8,737.9 L662.3,743.0 L666.3,748.3ZM671.5,753.6 L674.4,759.2 L676.7,764.8 L678.5,770.6 L679.6,776.4 L680.0,782.3 L679.9,788.2 L679.0,794.2 L677.5,800.2 L675.3,806.1 L672.4,812.0 L668.8,817.9 L664.5,823.7 L659.5,829.5 L653.8,835.1 L647.4,840.6 L640.3,845.9 L632.6,851.1 L624.2,856.0 L615.2,860.8 L605.5,865.3 L595.3,869.6 L584.5,873.5 L573.2,877.2 L561.4,880.6 L549.2,883.6 L536.6,886.3 L523.6,888.7 L510.4,890.7 L496.9,892.3 L483.1,893.5 L469.3,894.3 L455.3,894.7 L441.3,894.7 L427.4,894.3 L413.5,893.5 L399.7,892.4 L386.1,890.8 L372.8,888.9 L359.8,886.5 L347.1,883.9 L334.8,880.9 L322.9,877.5 L311.4,873.9 L300.5,869.9 L290.2,865.7 L280.4,861.2 L271.2,856.5 L262.6,851.5 L254.7,846.4 L247.4,841.1 L240.8,835.6 L234.9,830.1 L229.7,824.4 L225.2,818.6 L221.4,812.7 L218.3,806.8 L215.8,800.9 L214.1,794.9 L213.0,789.0 L212.6,783.1 L212.8,777.2 L213.7,771.4 L215.2,765.6 L217.3,760.0 L220.0,754.4 L223.2,749.0 L227.0,743.6 L231.3,738.4 L236.2,733.4 L241.5,728.5 L247.3,723.8 L253.5,719.2 L260.1,714.8 L267.2,710.6 L274.6,706.6 L282.4,702.8 L290.5,699.2 L299.0,695.8 L307.7,692.6 L316.7,689.6 L325.9,686.8 L335.4,684.2 L345.1,681.9 L355.0,679.8 L365.0,677.9 L375.2,676.3 L385.5,674.9 L396.0,673.7 L406.5,672.7 L417.1,672.0 L427.7,671.5 L438.4,671.2 L449.1,671.2 L459.8,671.4 L470.5,671.9 L481.2,672.5 L491.7,673.5 L502.2,674.6 L512.6,676.0 L522.9,677.6 L533.0,679.4 L543.0,681.5 L552.8,683.8 L562.4,686.3 L571.8,689.0 L580.9,692.0 L589.8,695.2 L598.4,698.5 L606.7,702.1 L614.7,705.9 L622.3,709.9 L629.5,714.1 L636.4,718.5 L642.8,723.0 L648.8,727.7 L654.3,732.6 L659.4,737.7 L664.0,742.8 L668.0,748.2ZM673.2,753.5 L676.1,759.1 L678.5,764.8 L680.2,770.6 L681.4,776.5 L681.9,782.4 L681.7,788.4 L680.9,794.4 L679.3,800.4 L677.1,806.4 L674.2,812.4 L670.6,818.3 L666.3,824.2 L661.3,830.0 L655.5,835.6 L649.1,841.2 L642.0,846.6 L634.2,851.8 L625.7,856.8 L616.6,861.6 L606.9,866.1 L596.6,870.4 L585.7,874.4 L574.3,878.2 L562.4,881.6 L550.1,884.7 L537.4,887.4 L524.3,889.7 L510.9,891.7 L497.3,893.4 L483.5,894.6 L469.5,895.4 L455.4,895.8 L441.3,895.8 L427.2,895.4 L413.2,894.6 L399.3,893.5 L385.6,891.9 L372.2,889.9 L359.0,887.6 L346.2,884.9 L333.8,881.8 L321.8,878.5 L310.3,874.8 L299.3,870.8 L288.8,866.5 L279.0,862.0 L269.7,857.2 L261.1,852.2 L253.1,847.1 L245.8,841.7 L239.2,836.2 L233.2,830.6 L228.0,824.8 L223.4,819.0 L219.6,813.1 L216.4,807.1 L214.0,801.1 L212.2,795.1 L211.2,789.1 L210.8,783.2 L211.0,777.3 L211.9,771.4 L213.4,765.6 L215.5,759.9 L218.3,754.3 L221.6,748.8 L225.4,743.5 L229.8,738.2 L234.6,733.1 L240.0,728.2 L245.8,723.4 L252.1,718.9 L258.8,714.4 L265.9,710.2 L273.4,706.2 L281.3,702.3 L289.4,698.7 L297.9,695.3 L306.7,692.0 L315.8,689.0 L325.1,686.2 L334.6,683.7 L344.4,681.3 L354.3,679.2 L364.5,677.3 L374.7,675.7 L385.1,674.2 L395.6,673.0 L406.2,672.1 L416.9,671.3 L427.6,670.8 L438.4,670.6 L449.2,670.6 L459.9,670.8 L470.7,671.2 L481.4,671.9 L492.0,672.8 L502.6,674.0 L513.1,675.4 L523.4,677.0 L533.6,678.8 L543.7,680.9 L553.5,683.2 L563.2,685.7 L572.7,688.5 L581.9,691.5 L590.8,694.7 L599.5,698.1 L607.8,701.7 L615.8,705.5 L623.5,709.5 L630.8,713.7 L637.7,718.1 L644.2,722.7 L650.3,727.4 L655.9,732.4 L661.0,737.4 L665.6,742.7 L669.6,748.0ZM674.9,753.4 L677.8,759.0 L680.2,764.8 L682.0,770.6 L683.2,776.6 L683.7,782.5 L683.5,788.6 L682.7,794.6 L681.2,800.7 L679.0,806.7 L676.1,812.7 L672.4,818.7 L668.1,824.6 L663.0,830.5 L657.2,836.2 L650.8,841.8 L643.6,847.2 L635.7,852.5 L627.2,857.5 L618.0,862.4 L608.2,867.0 L597.9,871.3 L586.9,875.4 L575.4,879.1 L563.5,882.6 L551.0,885.7 L538.2,888.4 L525.0,890.8 L511.5,892.8 L497.8,894.4 L483.8,895.7 L469.7,896.5 L455.5,896.9 L441.2,896.9 L427.0,896.5 L412.9,895.7 L398.9,894.5 L385.1,893.0 L371.5,891.0 L358.3,888.6 L345.3,885.9 L332.8,882.8 L320.7,879.4 L309.1,875.7 L298.1,871.7 L287.5,867.3 L277.6,862.8 L268.2,858.0 L259.5,852.9 L251.5,847.7 L244.1,842.3 L237.5,836.8 L231.5,831.1 L226.2,825.3 L221.6,819.4 L217.8,813.4 L214.6,807.4 L212.2,801.4 L210.4,795.3 L209.4,789.3 L209.0,783.3 L209.2,777.3 L210.1,771.4 L211.7,765.6 L213.8,759.8 L216.6,754.2 L219.9,748.7 L223.8,743.3 L228.2,738.0 L233.1,732.9 L238.5,727.9 L244.4,723.1 L250.7,718.5 L257.5,714.1 L264.7,709.8 L272.2,705.7 L280.1,701.9 L288.4,698.2 L296.9,694.8 L305.8,691.5 L314.9,688.5 L324.3,685.7 L333.9,683.1 L343.7,680.7 L353.7,678.6 L363.9,676.7 L374.2,675.0 L384.7,673.6 L395.3,672.4 L406.0,671.4 L416.7,670.7 L427.5,670.2 L438.3,669.9 L449.2,669.9 L460.0,670.1 L470.9,670.6 L481.6,671.3 L492.4,672.2 L503.0,673.3 L513.5,674.7 L523.9,676.4 L534.2,678.2 L544.3,680.3 L554.3,682.6 L564.0,685.2 L573.5,688.0 L582.8,690.9 L591.8,694.2 L600.5,697.6 L608.9,701.2 L617.0,705.1 L624.8,709.1 L632.1,713.3 L639.1,717.8 L645.6,722.4 L651.7,727.1 L657.4,732.1 L662.5,737.2 L667.2,742.5 L671.3,747.9ZM676.5,753.3 L679.6,759.0 L682.0,764.8 L683.8,770.7 L685.0,776.6 L685.5,782.6 L685.4,788.7 L684.5,794.8 L683.0,800.9 L680.8,807.0 L677.9,813.1 L674.2,819.1 L669.9,825.1 L664.8,831.0 L659.0,836.7 L652.4,842.4 L645.2,847.9 L637.3,853.2 L628.7,858.3 L619.5,863.2 L609.6,867.8 L599.1,872.2 L588.1,876.3 L576.5,880.1 L564.5,883.5 L551.9,886.7 L539.0,889.5 L525.7,891.9 L512.1,893.9 L498.2,895.5 L484.1,896.8 L469.9,897.6 L455.6,898.0 L441.2,898.1 L426.9,897.7 L412.6,896.9 L398.5,895.6 L384.6,894.0 L370.9,892.0 L357.5,889.7 L344.5,886.9 L331.9,883.8 L319.7,880.4 L308.0,876.6 L296.8,872.5 L286.2,868.2 L276.2,863.6 L266.8,858.7 L258.0,853.6 L249.9,848.4 L242.5,842.9 L235.8,837.3 L229.8,831.6 L224.4,825.7 L219.9,819.8 L216.0,813.8 L212.8,807.7 L210.4,801.6 L208.6,795.5 L207.5,789.5 L207.1,783.4 L207.4,777.4 L208.4,771.4 L209.9,765.6 L212.1,759.8 L214.9,754.1 L218.2,748.5 L222.2,743.1 L226.6,737.8 L231.6,732.6 L237.0,727.6 L243.0,722.8 L249.4,718.2 L256.2,713.7 L263.4,709.4 L271.0,705.3 L279.0,701.4 L287.3,697.7 L295.9,694.3 L304.8,691.0 L314.0,687.9 L323.5,685.1 L333.1,682.5 L343.0,680.2 L353.1,678.0 L363.4,676.1 L373.8,674.4 L384.3,673.0 L395.0,671.8 L405.7,670.8 L416.5,670.0 L427.4,669.5 L438.3,669.3 L449.2,669.3 L460.1,669.5 L471.0,669.9 L481.9,670.6 L492.7,671.5 L503.4,672.7 L514.0,674.1 L524.5,675.8 L534.8,677.6 L545.0,679.7 L555.0,682.1 L564.8,684.6 L574.4,687.4 L583.7,690.4 L592.8,693.6 L601.6,697.1 L610.1,700.8 L618.2,704.6 L626.0,708.7 L633.4,712.9 L640.5,717.4 L647.1,722.0 L653.2,726.9 L658.9,731.8 L664.1,737.0 L668.8,742.3 L672.9,747.7ZM678.2,753.2 L681.3,758.9 L683.8,764.7 L685.6,770.7 L686.8,776.7 L687.3,782.7 L687.2,788.9 L686.4,795.0 L684.9,801.2 L682.6,807.3 L679.7,813.5 L676.0,819.5 L671.6,825.6 L666.5,831.5 L660.7,837.3 L654.1,843.0 L646.9,848.5 L638.9,853.9 L630.2,859.0 L620.9,863.9 L611.0,868.6 L600.4,873.0 L589.3,877.2 L577.6,881.0 L565.5,884.5 L552.8,887.7 L539.8,890.5 L526.4,892.9 L512.6,895.0 L498.7,896.6 L484.5,897.9 L470.1,898.7 L455.7,899.2 L441.2,899.2 L426.7,898.8 L412.3,898.0 L398.1,896.7 L384.0,895.1 L370.2,893.1 L356.8,890.7 L343.6,887.9 L330.9,884.8 L318.6,881.3 L306.8,877.5 L295.6,873.4 L284.9,869.0 L274.8,864.4 L265.3,859.5 L256.5,854.3 L248.3,849.0 L240.8,843.5 L234.1,837.9 L228.0,832.1 L222.7,826.2 L218.1,820.2 L214.2,814.1 L211.0,808.0 L208.5,801.9 L206.8,795.8 L205.7,789.6 L205.3,783.5 L205.6,777.5 L206.6,771.5 L208.2,765.6 L210.4,759.7 L213.2,754.0 L216.6,748.4 L220.5,742.9 L225.0,737.6 L230.1,732.4 L235.6,727.4 L241.6,722.5 L248.0,717.8 L254.9,713.3 L262.1,709.0 L269.8,704.9 L277.8,701.0 L286.2,697.3 L294.9,693.8 L303.9,690.5 L313.1,687.4 L322.6,684.6 L332.4,682.0 L342.3,679.6 L352.5,677.4 L362.8,675.5 L373.3,673.8 L383.9,672.3 L394.6,671.1 L405.4,670.1 L416.3,669.4 L427.3,668.9 L438.2,668.6 L449.2,668.6 L460.2,668.8 L471.2,669.3 L482.1,670.0 L493.0,670.9 L503.7,672.1 L514.4,673.5 L525.0,675.1 L535.4,677.0 L545.7,679.1 L555.7,681.5 L565.6,684.1 L575.3,686.9 L584.7,689.9 L593.8,693.1 L602.7,696.6 L611.2,700.3 L619.4,704.2 L627.3,708.3 L634.7,712.6 L641.8,717.0 L648.5,721.7 L654.7,726.6 L660.4,731.6 L665.7,736.8 L670.4,742.1 L674.6,747.6ZM679.9,753.1 L683.0,758.8 L685.5,764.7 L687.4,770.7 L688.6,776.7 L689.2,782.9 L689.0,789.0 L688.2,795.2 L686.7,801.4 L684.5,807.6 L681.5,813.8 L677.9,819.9 L673.4,826.0 L668.3,832.0 L662.4,837.9 L655.8,843.6 L648.5,849.2 L640.5,854.6 L631.8,859.8 L622.4,864.7 L612.4,869.5 L601.7,873.9 L590.5,878.1 L578.8,882.0 L566.5,885.5 L553.7,888.7 L540.6,891.5 L527.1,894.0 L513.2,896.1 L499.1,897.7 L484.8,899.0 L470.3,899.9 L455.7,900.3 L441.1,900.3 L426.5,899.9 L412.0,899.1 L397.7,897.8 L383.5,896.2 L369.6,894.2 L356.0,891.7 L342.8,888.9 L329.9,885.8 L317.5,882.3 L305.7,878.4 L294.3,874.3 L283.5,869.9 L273.3,865.2 L263.8,860.2 L254.9,855.0 L246.7,849.7 L239.2,844.1 L232.4,838.4 L226.3,832.6 L220.9,826.6 L216.3,820.6 L212.4,814.5 L209.2,808.3 L206.7,802.2 L205.0,796.0 L203.9,789.8 L203.5,783.6 L203.8,777.5 L204.8,771.5 L206.4,765.5 L208.7,759.7 L211.5,753.9 L214.9,748.2 L218.9,742.7 L223.5,737.4 L228.5,732.1 L234.1,727.1 L240.1,722.2 L246.6,717.5 L253.6,712.9 L260.9,708.6 L268.6,704.4 L276.7,700.5 L285.1,696.8 L293.9,693.3 L302.9,690.0 L312.2,686.9 L321.8,684.0 L331.6,681.4 L341.7,679.0 L351.9,676.8 L362.3,674.9 L372.8,673.2 L383.5,671.7 L394.3,670.5 L405.2,669.5 L416.1,668.8 L427.1,668.3 L438.2,668.0 L449.3,668.0 L460.3,668.2 L471.3,668.6 L482.3,669.3 L493.3,670.3 L504.1,671.5 L514.9,672.9 L525.5,674.5 L536.0,676.4 L546.3,678.6 L556.5,680.9 L566.4,683.5 L576.1,686.3 L585.6,689.4 L594.8,692.6 L603.7,696.1 L612.3,699.8 L620.6,703.7 L628.5,707.9 L636.0,712.2 L643.2,716.7 L649.9,721.4 L656.2,726.3 L661.9,731.3 L667.2,736.5 L672.0,741.9 L676.3,747.4ZM681.6,753.0 L684.7,758.8 L687.3,764.7 L689.2,770.7 L690.4,776.8 L691.0,783.0 L690.9,789.2 L690.1,795.4 L688.6,801.7 L686.3,807.9 L683.4,814.2 L679.7,820.3 L675.2,826.5 L670.1,832.5 L664.1,838.4 L657.5,844.2 L650.1,849.8 L642.0,855.3 L633.3,860.5 L623.8,865.5 L613.7,870.3 L603.0,874.8 L591.7,879.0 L579.9,882.9 L567.5,886.5 L554.7,889.7 L541.4,892.6 L527.8,895.1 L513.8,897.1 L499.6,898.8 L485.1,900.1 L470.5,901.0 L455.8,901.4 L441.1,901.4 L426.4,901.0 L411.8,900.2 L397.3,898.9 L383.0,897.3 L369.0,895.2 L355.2,892.8 L341.9,889.9 L328.9,886.8 L316.5,883.2 L304.5,879.3 L293.0,875.2 L282.2,870.7 L271.9,866.0 L262.3,861.0 L253.4,855.8 L245.1,850.3 L237.5,844.7 L230.7,839.0 L224.6,833.1 L219.2,827.1 L214.5,821.0 L210.6,814.9 L207.4,808.7 L204.9,802.4 L203.1,796.2 L202.1,790.0 L201.7,783.8 L202.1,777.6 L203.0,771.5 L204.7,765.5 L206.9,759.6 L209.8,753.8 L213.3,748.1 L217.3,742.6 L221.9,737.1 L227.0,731.9 L232.6,726.8 L238.7,721.9 L245.3,717.1 L252.2,712.5 L259.6,708.2 L267.4,704.0 L275.6,700.0 L284.0,696.3 L292.9,692.8 L302.0,689.4 L311.4,686.3 L321.0,683.5 L330.9,680.8 L341.0,678.4 L351.3,676.2 L361.7,674.3 L372.3,672.6 L383.1,671.1 L394.0,669.9 L404.9,668.9 L415.9,668.1 L427.0,667.6 L438.1,667.3 L449.3,667.3 L460.4,667.5 L471.5,668.0 L482.6,668.7 L493.6,669.6 L504.5,670.8 L515.3,672.3 L526.0,673.9 L536.6,675.8 L547.0,678.0 L557.2,680.3 L567.2,682.9 L577.0,685.8 L586.5,688.8 L595.8,692.1 L604.8,695.6 L613.4,699.4 L621.8,703.3 L629.8,707.5 L637.4,711.8 L644.5,716.3 L651.3,721.1 L657.6,726.0 L663.5,731.1 L668.8,736.3 L673.6,741.7 L677.9,747.3ZM683.3,752.9 L686.5,758.7 L689.0,764.7 L690.9,770.7 L692.2,776.9 L692.8,783.1 L692.7,789.3 L691.9,795.6 L690.4,801.9 L688.2,808.2 L685.2,814.5 L681.5,820.8 L677.0,826.9 L671.8,833.0 L665.9,839.0 L659.2,844.8 L651.8,850.5 L643.6,856.0 L634.8,861.3 L625.3,866.3 L615.1,871.1 L604.3,875.7 L592.9,879.9 L581.0,883.9 L568.5,887.5 L555.6,890.7 L542.2,893.6 L528.4,896.1 L514.4,898.2 L500.0,899.9 L485.4,901.2 L470.7,902.1 L455.9,902.5 L441.0,902.6 L426.2,902.2 L411.5,901.3 L396.9,900.1 L382.5,898.4 L368.3,896.3 L354.5,893.8 L341.0,891.0 L328.0,887.7 L315.4,884.2 L303.3,880.3 L291.8,876.0 L280.8,871.5 L270.5,866.8 L260.8,861.7 L251.8,856.5 L243.5,851.0 L235.9,845.4 L229.0,839.6 L222.8,833.6 L217.4,827.6 L212.7,821.4 L208.8,815.2 L205.5,809.0 L203.1,802.7 L201.3,796.4 L200.3,790.1 L199.9,783.9 L200.3,777.7 L201.3,771.5 L202.9,765.5 L205.2,759.5 L208.1,753.7 L211.6,748.0 L215.7,742.4 L220.3,736.9 L225.5,731.6 L231.2,726.5 L237.3,721.5 L243.9,716.8 L250.9,712.2 L258.4,707.8 L266.2,703.6 L274.4,699.6 L283.0,695.8 L291.8,692.3 L301.0,688.9 L310.5,685.8 L320.2,682.9 L330.1,680.3 L340.3,677.8 L350.7,675.6 L361.2,673.7 L371.9,672.0 L382.7,670.5 L393.6,669.2 L404.7,668.2 L415.7,667.5 L426.9,667.0 L438.1,666.7 L449.3,666.7 L460.5,666.9 L471.7,667.4 L482.8,668.1 L493.9,669.0 L504.9,670.2 L515.8,671.6 L526.5,673.3 L537.2,675.2 L547.6,677.4 L557.9,679.8 L568.0,682.4 L577.8,685.2 L587.5,688.3 L596.8,691.6 L605.8,695.2 L614.6,698.9 L623.0,702.9 L631.0,707.0 L638.7,711.4 L645.9,716.0 L652.7,720.7 L659.1,725.7 L665.0,730.8 L670.4,736.1 L675.2,741.5 L679.6,747.1ZM685.0,752.7 L688.2,758.6 L690.8,764.6 L692.7,770.7 L694.0,776.9 L694.6,783.2 L694.5,789.5 L693.8,795.8 L692.2,802.2 L690.0,808.5 L687.0,814.9 L683.3,821.2 L678.8,827.4 L673.6,833.5 L667.6,839.5 L660.9,845.4 L653.4,851.1 L645.2,856.7 L636.3,862.0 L626.7,867.1 L616.5,872.0 L605.6,876.6 L594.1,880.9 L582.1,884.8 L569.5,888.5 L556.5,891.8 L543.0,894.7 L529.1,897.2 L514.9,899.3 L500.5,901.1 L485.8,902.4 L470.9,903.2 L456.0,903.7 L441.0,903.7 L426.1,903.3 L411.2,902.4 L396.5,901.2 L381.9,899.5 L367.7,897.4 L353.7,894.9 L340.2,892.0 L327.0,888.7 L314.3,885.1 L302.1,881.2 L290.5,876.9 L279.5,872.4 L269.1,867.6 L259.3,862.5 L250.3,857.2 L241.9,851.7 L234.2,846.0 L227.3,840.1 L221.1,834.1 L215.6,828.0 L210.9,821.8 L206.9,815.6 L203.7,809.3 L201.2,802.9 L199.5,796.6 L198.4,790.3 L198.1,784.0 L198.5,777.7 L199.5,771.6 L201.2,765.5 L203.5,759.5 L206.5,753.6 L210.0,747.8 L214.1,742.2 L218.8,736.7 L224.0,731.4 L229.7,726.2 L235.9,721.2 L242.5,716.4 L249.6,711.8 L257.1,707.4 L265.0,703.2 L273.3,699.1 L281.9,695.3 L290.8,691.8 L300.1,688.4 L309.6,685.3 L319.4,682.4 L329.4,679.7 L339.6,677.2 L350.0,675.0 L360.6,673.1 L371.4,671.3 L382.3,669.9 L393.3,668.6 L404.4,667.6 L415.6,666.8 L426.8,666.3 L438.0,666.1 L449.3,666.0 L460.6,666.3 L471.8,666.7 L483.1,667.4 L494.2,668.4 L505.3,669.6 L516.2,671.0 L527.1,672.7 L537.8,674.6 L548.3,676.8 L558.6,679.2 L568.8,681.8 L578.7,684.7 L588.4,687.8 L597.8,691.1 L606.9,694.7 L615.7,698.5 L624.1,702.4 L632.2,706.6 L640.0,711.0 L647.3,715.6 L654.1,720.4 L660.6,725.4 L666.5,730.6 L671.9,735.9 L676.8,741.4 L681.2,747.0ZM686.7,752.6 L689.9,758.6 L692.5,764.6 L694.5,770.8 L695.8,777.0 L696.4,783.3 L696.4,789.7 L695.6,796.0 L694.1,802.5 L691.9,808.9 L688.9,815.2 L685.1,821.6 L680.6,827.8 L675.4,834.0 L669.3,840.1 L662.6,846.0 L655.1,851.8 L646.8,857.4 L637.8,862.8 L628.2,867.9 L617.9,872.8 L606.9,877.4 L595.4,881.8 L583.2,885.8 L570.6,889.5 L557.4,892.8 L543.8,895.7 L529.8,898.3 L515.5,900.4 L500.9,902.2 L486.1,903.5 L471.1,904.4 L456.1,904.8 L441.0,904.8 L425.9,904.4 L410.9,903.6 L396.0,902.3 L381.4,900.6 L367.0,898.4 L353.0,895.9 L339.3,893.0 L326.0,889.7 L313.2,886.1 L301.0,882.1 L289.3,877.8 L278.2,873.2 L267.7,868.4 L257.8,863.2 L248.7,857.9 L240.3,852.3 L232.6,846.6 L225.6,840.7 L219.3,834.6 L213.8,828.5 L209.1,822.2 L205.1,815.9 L201.9,809.6 L199.4,803.2 L197.6,796.8 L196.6,790.4 L196.3,784.1 L196.7,777.8 L197.7,771.6 L199.4,765.5 L201.8,759.4 L204.8,753.5 L208.3,747.7 L212.5,742.0 L217.2,736.5 L222.5,731.1 L228.2,725.9 L234.5,720.9 L241.2,716.1 L248.3,711.4 L255.9,707.0 L263.8,702.7 L272.2,698.7 L280.8,694.9 L289.8,691.3 L299.1,687.9 L308.7,684.7 L318.6,681.8 L328.6,679.1 L338.9,676.7 L349.4,674.4 L360.1,672.5 L370.9,670.7 L381.9,669.2 L393.0,668.0 L404.1,667.0 L415.4,666.2 L426.7,665.7 L438.0,665.4 L449.3,665.4 L460.7,665.6 L472.0,666.1 L483.3,666.8 L494.5,667.8 L505.6,669.0 L516.7,670.4 L527.6,672.1 L538.3,674.0 L548.9,676.2 L559.4,678.6 L569.6,681.3 L579.6,684.2 L589.3,687.3 L598.8,690.6 L607.9,694.2 L616.8,698.0 L625.3,702.0 L633.5,706.2 L641.3,710.6 L648.6,715.3 L655.5,720.1 L662.0,725.1 L668.0,730.3 L673.5,735.7 L678.5,741.2 L682.9,746.8ZM688.4,752.5 L691.6,758.5 L694.3,764.6 L696.3,770.8 L697.6,777.1 L698.3,783.4 L698.2,789.8 L697.4,796.3 L695.9,802.7 L693.7,809.2 L690.7,815.6 L686.9,822.0 L682.4,828.3 L677.1,834.5 L671.1,840.6 L664.3,846.6 L656.7,852.4 L648.4,858.1 L639.4,863.5 L629.7,868.7 L619.3,873.7 L608.2,878.3 L596.6,882.7 L584.3,886.7 L571.6,890.5 L558.3,893.8 L544.6,896.8 L530.5,899.3 L516.1,901.5 L501.4,903.3 L486.5,904.6 L471.4,905.5 L456.2,906.0 L440.9,906.0 L425.7,905.5 L410.6,904.7 L395.6,903.4 L380.9,901.7 L366.4,899.5 L352.2,897.0 L338.4,894.0 L325.0,890.7 L312.2,887.0 L299.8,883.0 L288.0,878.7 L276.8,874.1 L266.3,869.2 L256.4,864.0 L247.2,858.6 L238.7,853.0 L230.9,847.2 L223.9,841.2 L217.6,835.1 L212.1,828.9 L207.3,822.7 L203.3,816.3 L200.1,809.9 L197.6,803.5 L195.8,797.0 L194.8,790.6 L194.5,784.2 L194.9,777.9 L195.9,771.6 L197.7,765.4 L200.1,759.4 L203.1,753.4 L206.7,747.5 L210.9,741.8 L215.6,736.3 L220.9,730.9 L226.7,725.6 L233.0,720.6 L239.8,715.7 L247.0,711.0 L254.6,706.6 L262.6,702.3 L271.0,698.2 L279.8,694.4 L288.8,690.8 L298.2,687.4 L307.8,684.2 L317.8,681.3 L327.9,678.6 L338.3,676.1 L348.8,673.9 L359.6,671.9 L370.5,670.1 L381.5,668.6 L392.6,667.4 L403.9,666.3 L415.2,665.6 L426.5,665.0 L437.9,664.8 L449.4,664.8 L460.8,665.0 L472.2,665.4 L483.5,666.2 L494.8,667.1 L506.0,668.3 L517.1,669.8 L528.1,671.5 L538.9,673.4 L549.6,675.6 L560.1,678.1 L570.4,680.7 L580.4,683.6 L590.2,686.8 L599.8,690.1 L609.0,693.7 L617.9,697.5 L626.5,701.6 L634.7,705.8 L642.6,710.3 L650.0,714.9 L657.0,719.8 L663.5,724.8 L669.5,730.0 L675.1,735.4 L680.1,741.0 L684.5,746.7ZM690.1,752.4 L693.4,758.4 L696.0,764.6 L698.1,770.8 L699.4,777.1 L700.1,783.5 L700.1,790.0 L699.3,796.5 L697.8,803.0 L695.5,809.5 L692.5,815.9 L688.8,822.4 L684.2,828.8 L678.9,835.0 L672.8,841.2 L666.0,847.2 L658.3,853.1 L650.0,858.8 L640.9,864.3 L631.1,869.5 L620.7,874.5 L609.5,879.2 L597.8,883.6 L585.5,887.7 L572.6,891.5 L559.2,894.8 L545.4,897.8 L531.2,900.4 L516.7,902.6 L501.8,904.4 L486.8,905.7 L471.6,906.6 L456.2,907.1 L440.9,907.1 L425.6,906.7 L410.3,905.8 L395.2,904.5 L380.3,902.8 L365.7,900.6 L351.4,898.0 L337.5,895.1 L324.1,891.7 L311.1,888.0 L298.6,884.0 L286.7,879.6 L275.5,874.9 L264.8,870.0 L254.9,864.7 L245.6,859.3 L237.0,853.6 L229.2,847.8 L222.2,841.8 L215.8,835.7 L210.3,829.4 L205.5,823.1 L201.5,816.7 L198.2,810.2 L195.7,803.7 L194.0,797.2 L193.0,790.8 L192.7,784.3 L193.1,778.0 L194.2,771.6 L195.9,765.4 L198.4,759.3 L201.4,753.3 L205.0,747.4 L209.3,741.7 L214.1,736.1 L219.4,730.6 L225.3,725.4 L231.6,720.3 L238.4,715.4 L245.7,710.7 L253.4,706.2 L261.4,701.9 L269.9,697.8 L278.7,693.9 L287.8,690.3 L297.3,686.9 L307.0,683.7 L316.9,680.7 L327.2,678.0 L337.6,675.5 L348.2,673.3 L359.0,671.3 L370.0,669.5 L381.1,668.0 L392.3,666.7 L403.6,665.7 L415.0,664.9 L426.4,664.4 L437.9,664.1 L449.4,664.1 L460.9,664.3 L472.3,664.8 L483.8,665.5 L495.1,666.5 L506.4,667.7 L517.6,669.2 L528.6,670.9 L539.5,672.9 L550.3,675.1 L560.8,677.5 L571.2,680.2 L581.3,683.1 L591.2,686.2 L600.8,689.6 L610.1,693.2 L619.0,697.1 L627.7,701.1 L636.0,705.4 L643.9,709.9 L651.3,714.6 L658.4,719.5 L664.9,724.5 L671.0,729.8 L676.6,735.2 L681.7,740.8 L686.2,746.5ZM691.8,752.3 L695.1,758.4 L697.8,764.5 L699.9,770.8 L701.2,777.2 L701.9,783.6 L701.9,790.1 L701.1,796.7 L699.6,803.2 L697.4,809.8 L694.4,816.3 L690.6,822.8 L686.0,829.2 L680.7,835.5 L674.6,841.8 L667.7,847.8 L660.0,853.8 L651.6,859.5 L642.4,865.0 L632.6,870.3 L622.0,875.4 L610.8,880.1 L599.0,884.6 L586.6,888.7 L573.6,892.4 L560.2,895.9 L546.2,898.9 L531.9,901.5 L517.3,903.7 L502.3,905.5 L487.1,906.9 L471.8,907.8 L456.3,908.2 L440.8,908.3 L425.4,907.8 L410.0,906.9 L394.8,905.6 L379.8,903.9 L365.1,901.7 L350.7,899.1 L336.6,896.1 L323.1,892.7 L310.0,889.0 L297.4,884.9 L285.5,880.5 L274.1,875.8 L263.4,870.8 L253.4,865.5 L244.0,860.0 L235.4,854.3 L227.6,848.4 L220.4,842.4 L214.1,836.2 L208.5,829.9 L203.7,823.5 L199.7,817.0 L196.4,810.5 L193.9,804.0 L192.2,797.5 L191.1,790.9 L190.9,784.5 L191.3,778.0 L192.4,771.7 L194.2,765.4 L196.6,759.2 L199.7,753.2 L203.4,747.3 L207.7,741.5 L212.5,735.8 L217.9,730.4 L223.8,725.1 L230.2,720.0 L237.1,715.0 L244.4,710.3 L252.1,705.8 L260.3,701.4 L268.8,697.3 L277.6,693.4 L286.8,689.8 L296.3,686.3 L306.1,683.1 L316.1,680.2 L326.4,677.4 L336.9,674.9 L347.6,672.7 L358.5,670.7 L369.5,668.9 L380.7,667.4 L392.0,666.1 L403.3,665.1 L414.8,664.3 L426.3,663.8 L437.9,663.5 L449.4,663.5 L461.0,663.7 L472.5,664.2 L484.0,664.9 L495.4,665.9 L506.8,667.1 L518.0,668.6 L529.1,670.3 L540.1,672.3 L550.9,674.5 L561.5,676.9 L571.9,679.6 L582.1,682.6 L592.1,685.7 L601.7,689.1 L611.1,692.8 L620.2,696.6 L628.9,700.7 L637.2,705.0 L645.1,709.5 L652.7,714.2 L659.8,719.1 L666.4,724.2 L672.6,729.5 L678.2,735.0 L683.3,740.6 L687.8,746.4ZM693.4,752.2 L696.8,758.3 L699.6,764.5 L701.6,770.8 L703.0,777.3 L703.7,783.7 L703.7,790.3 L703.0,796.9 L701.5,803.5 L699.2,810.1 L696.2,816.7 L692.4,823.2 L687.8,829.7 L682.5,836.1 L676.3,842.3 L669.4,848.5 L661.7,854.4 L653.2,860.2 L644.0,865.8 L634.1,871.1 L623.4,876.2 L612.2,881.0 L600.2,885.5 L587.7,889.6 L574.7,893.5 L561.1,896.9 L547.1,899.9 L532.6,902.6 L517.8,904.8 L502.8,906.6 L487.5,908.0 L472.0,908.9 L456.4,909.4 L440.8,909.4 L425.2,909.0 L409.7,908.1 L394.4,906.7 L379.3,905.0 L364.4,902.8 L349.9,900.1 L335.8,897.1 L322.1,893.7 L308.9,889.9 L296.3,885.8 L284.2,881.4 L272.8,876.6 L262.0,871.6 L251.9,866.3 L242.5,860.7 L233.8,855.0 L225.9,849.0 L218.7,842.9 L212.3,836.7 L206.7,830.3 L201.9,823.9 L197.9,817.4 L194.6,810.8 L192.1,804.2 L190.3,797.7 L189.3,791.1 L189.0,784.6 L189.5,778.1 L190.6,771.7 L192.4,765.4 L194.9,759.2 L198.0,753.1 L201.8,747.1 L206.1,741.3 L211.0,735.6 L216.4,730.1 L222.3,724.8 L228.8,719.6 L235.7,714.7 L243.1,709.9 L250.9,705.4 L259.1,701.0 L267.6,696.9 L276.6,693.0 L285.8,689.3 L295.4,685.8 L305.2,682.6 L315.3,679.6 L325.7,676.9 L336.2,674.4 L347.0,672.1 L358.0,670.1 L369.1,668.3 L380.3,666.8 L391.6,665.5 L403.1,664.4 L414.6,663.7 L426.2,663.1 L437.8,662.9 L449.4,662.8 L461.1,663.1 L472.7,663.5 L484.2,664.3 L495.7,665.3 L507.1,666.5 L518.4,668.0 L529.6,669.7 L540.7,671.7 L551.6,673.9 L562.2,676.4 L572.7,679.1 L583.0,682.0 L593.0,685.2 L602.7,688.6 L612.2,692.3 L621.3,696.2 L630.0,700.3 L638.4,704.6 L646.4,709.1 L654.0,713.9 L661.2,718.8 L667.9,723.9 L674.1,729.3 L679.7,734.8 L684.9,740.4 L689.5,746.2Z" fill="none" stroke="#002020" stroke-width="0.7" stroke-opacity="0.8" stroke-dasharray="3 1.2" mask="url(#bm)"/>
<defs><filter id="soft" x="-50%" y="-50%" width="200%" height="200%"><feGaussianBlur stdDeviation="10"/></filter></defs>
<defs><clipPath id="objclip"><path d="M199.1,193.8 L200.5,190.1 L204.5,186.5 L210.9,183.0 L219.7,179.7 L230.6,176.5 L243.4,173.5 L258.0,170.8 L274.1,168.3 L291.7,166.0 L310.4,164.0 L330.2,162.3 L350.8,160.8 L372.2,159.6 L394.1,158.7 L416.3,158.1 L438.8,157.8 L461.3,157.8 L483.8,158.0 L506.0,158.6 L527.8,159.4 L549.0,160.5 L569.5,162.0 L589.1,163.7 L607.6,165.6 L624.8,167.9 L640.6,170.4 L654.8,173.1 L667.2,176.0 L677.5,179.2 L685.7,182.6 L691.5,186.1 L694.7,189.7 L695.4,192.2 L695.7,202.0 L695.0,276.0 L686.0,283.0 L676.0,289.0 L683.0,300.0 L688.0,308.0 L686.6,340.0 L684.0,388.0 L686.0,400.0 L683.0,435.0 L681.0,455.0 L679.4,483.0 L677.0,531.0 L674.6,560.0 L672.0,600.0 L670.8,630.6 L665.6,687.0 L668.8,695.0 L668.8,780.0 L670.8,782.7 L669.4,794.1 L665.5,805.5 L659.0,816.8 L649.7,827.8 L637.8,838.4 L623.3,848.3 L606.3,857.5 L587.1,865.8 L565.8,873.0 L542.7,879.0 L518.1,883.7 L492.4,886.9 L466.0,888.7 L439.3,889.0 L412.7,887.8 L386.6,885.1 L361.5,880.9 L337.7,875.4 L315.5,868.6 L295.3,860.8 L277.3,851.9 L261.6,842.3 L248.4,831.9 L237.9,821.1 L230.0,809.9 L224.8,798.6 L222.1,787.2 L221.8,781.5 L224.0,790.0 L222.4,695.0 L224.0,691.0 L222.0,650.0 L219.0,640.0 L221.0,625.0 L220.0,600.0 L217.8,555.0 L215.0,520.0 L216.6,502.0 L223.7,495.0 L221.3,473.7 L216.0,460.0 L211.8,440.0 L210.0,425.0 L215.4,411.6 L213.0,380.0 L210.0,372.0 L212.0,360.0 L209.4,340.0 L206.0,326.0 L209.0,318.0 L208.0,306.0 L220.0,302.0 L219.0,289.0 L219.0,282.0 L206.0,279.0 L200.0,276.0 L200.4,201.0Z"/></clipPath></defs>
<path d="M199.1,193.8 L200.5,190.1 L204.5,186.5 L210.9,183.0 L219.7,179.7 L230.6,176.5 L243.4,173.5 L258.0,170.8 L274.1,168.3 L291.7,166.0 L310.4,164.0 L330.2,162.3 L350.8,160.8 L372.2,159.6 L394.1,158.7 L416.3,158.1 L438.8,157.8 L461.3,157.8 L483.8,158.0 L506.0,158.6 L527.8,159.4 L549.0,160.5 L569.5,162.0 L589.1,163.7 L607.6,165.6 L624.8,167.9 L640.6,170.4 L654.8,173.1 L667.2,176.0 L677.5,179.2 L685.7,182.6 L691.5,186.1 L694.7,189.7 L695.4,192.2 L695.7,202.0 L695.0,276.0 L686.0,283.0 L676.0,289.0 L683.0,300.0 L688.0,308.0 L686.6,340.0 L684.0,388.0 L686.0,400.0 L683.0,435.0 L681.0,455.0 L679.4,483.0 L677.0,531.0 L674.6,560.0 L672.0,600.0 L670.8,630.6 L665.6,687.0 L668.8,695.0 L668.8,780.0 L670.8,782.7 L669.4,794.1 L665.5,805.5 L659.0,816.8 L649.7,827.8 L637.8,838.4 L623.3,848.3 L606.3,857.5 L587.1,865.8 L565.8,873.0 L542.7,879.0 L518.1,883.7 L492.4,886.9 L466.0,888.7 L439.3,889.0 L412.7,887.8 L386.6,885.1 L361.5,880.9 L337.7,875.4 L315.5,868.6 L295.3,860.8 L277.3,851.9 L261.6,842.3 L248.4,831.9 L237.9,821.1 L230.0,809.9 L224.8,798.6 L222.1,787.2 L221.8,781.5 L224.0,790.0 L222.4,695.0 L224.0,691.0 L222.0,650.0 L219.0,640.0 L221.0,625.0 L220.0,600.0 L217.8,555.0 L215.0,520.0 L216.6,502.0 L223.7,495.0 L221.3,473.7 L216.0,460.0 L211.8,440.0 L210.0,425.0 L215.4,411.6 L213.0,380.0 L210.0,372.0 L212.0,360.0 L209.4,340.0 L206.0,326.0 L209.0,318.0 L208.0,306.0 L220.0,302.0 L219.0,289.0 L219.0,282.0 L206.0,279.0 L200.0,276.0 L200.4,201.0Z" fill="#ff0000"/>
<g clip-path="url(#objclip)"><path d="M406.0,760.0 A40.0,36.8 0 0 1 486.0,760.0M400.0,760.0 A46.0,42.3 0 0 1 492.0,760.0M394.0,760.0 A52.0,47.8 0 0 1 498.0,760.0M388.0,760.0 A58.0,53.4 0 0 1 504.0,760.0M382.0,760.0 A64.0,58.9 0 0 1 510.0,760.0M376.0,760.0 A70.0,64.4 0 0 1 516.0,760.0M370.0,760.0 A76.0,69.9 0 0 1 522.0,760.0M364.0,760.0 A82.0,75.4 0 0 1 528.0,760.0M358.0,760.0 A88.0,81.0 0 0 1 534.0,760.0M352.0,760.0 A94.0,86.5 0 0 1 540.0,760.0M346.0,760.0 A100.0,92.0 0 0 1 546.0,760.0M340.0,760.0 A106.0,97.5 0 0 1 552.0,760.0M334.0,760.0 A112.0,103.0 0 0 1 558.0,760.0M328.0,760.0 A118.0,108.6 0 0 1 564.0,760.0M322.0,760.0 A124.0,114.1 0 0 1 570.0,760.0M316.0,760.0 A130.0,119.6 0 0 1 576.0,760.0M310.0,760.0 A136.0,125.1 0 0 1 582.0,760.0M304.0,760.0 A142.0,130.6 0 0 1 588.0,760.0M298.0,760.0 A148.0,136.2 0 0 1 594.0,760.0M292.0,760.0 A154.0,141.7 0 0 1 600.0,760.0M286.0,760.0 A160.0,147.2 0 0 1 606.0,760.0M280.0,760.0 A166.0,152.7 0 0 1 612.0,760.0M274.0,760.0 A172.0,158.2 0 0 1 618.0,760.0M268.0,760.0 A178.0,163.8 0 0 1 624.0,760.0M262.0,760.0 A184.0,169.3 0 0 1 630.0,760.0M256.0,760.0 A190.0,174.8 0 0 1 636.0,760.0M250.0,760.0 A196.0,180.3 0 0 1 642.0,760.0M244.0,760.0 A202.0,185.8 0 0 1 648.0,760.0M238.0,760.0 A208.0,191.4 0 0 1 654.0,760.0M232.0,760.0 A214.0,196.9 0 0 1 660.0,760.0M226.0,760.0 A220.0,202.4 0 0 1 666.0,760.0M220.0,760.0 A226.0,207.9 0 0 1 672.0,760.0M214.0,760.0 A232.0,213.4 0 0 1 678.0,760.0M208.0,760.0 A238.0,219.0 0 0 1 684.0,760.0M202.0,760.0 A244.0,224.5 0 0 1 690.0,760.0M196.0,760.0 A250.0,230.0 0 0 1 696.0,760.0M190.0,760.0 A256.0,235.5 0 0 1 702.0,760.0M184.0,760.0 A262.0,241.0 0 0 1 708.0,760.0M178.0,760.0 A268.0,246.6 0 0 1 714.0,760.0M172.0,760.0 A274.0,252.1 0 0 1 720.0,760.0M166.0,760.0 A280.0,257.6 0 0 1 726.0,760.0M160.0,760.0 A286.0,263.1 0 0 1 732.0,760.0M154.0,760.0 A292.0,268.6 0 0 1 738.0,760.0M148.0,760.0 A298.0,274.2 0 0 1 744.0,760.0M142.0,760.0 A304.0,279.7 0 0 1 750.0,760.0M136.0,760.0 A310.0,285.2 0 0 1 756.0,760.0M130.0,760.0 A316.0,290.7 0 0 1 762.0,760.0M124.0,760.0 A322.0,296.2 0 0 1 768.0,760.0M118.0,760.0 A328.0,301.8 0 0 1 774.0,760.0M112.0,760.0 A334.0,307.3 0 0 1 780.0,760.0M106.0,760.0 A340.0,312.8 0 0 1 786.0,760.0M100.0,760.0 A346.0,318.3 0 0 1 792.0,760.0M94.0,760.0 A352.0,323.8 0 0 1 798.0,760.0M88.0,760.0 A358.0,329.4 0 0 1 804.0,760.0M82.0,760.0 A364.0,334.9 0 0 1 810.0,760.0M76.0,760.0 A370.0,340.4 0 0 1 816.0,760.0M70.0,760.0 A376.0,345.9 0 0 1 822.0,760.0M64.0,760.0 A382.0,351.4 0 0 1 828.0,760.0M58.0,760.0 A388.0,357.0 0 0 1 834.0,760.0M52.0,760.0 A394.0,362.5 0 0 1 840.0,760.0M46.0,760.0 A400.0,368.0 0 0 1 846.0,760.0M40.0,760.0 A406.0,373.5 0 0 1 852.0,760.0M34.0,760.0 A412.0,379.0 0 0 1 858.0,760.0M28.0,760.0 A418.0,384.6 0 0 1 864.0,760.0M22.0,760.0 A424.0,390.1 0 0 1 870.0,760.0M16.0,760.0 A430.0,395.6 0 0 1 876.0,760.0M10.0,760.0 A436.0,401.1 0 0 1 882.0,760.0M4.0,760.0 A442.0,406.6 0 0 1 888.0,760.0M-2.0,760.0 A448.0,412.2 0 0 1 894.0,760.0M-8.0,760.0 A454.0,417.7 0 0 1 900.0,760.0M-14.0,760.0 A460.0,423.2 0 0 1 906.0,760.0M-20.0,760.0 A466.0,428.7 0 0 1 912.0,760.0M-26.0,760.0 A472.0,434.2 0 0 1 918.0,760.0M-32.0,760.0 A478.0,439.8 0 0 1 924.0,760.0M-38.0,760.0 A484.0,445.3 0 0 1 930.0,760.0M-44.0,760.0 A490.0,450.8 0 0 1 936.0,760.0M-50.0,760.0 A496.0,456.3 0 0 1 942.0,760.0M-56.0,760.0 A502.0,461.8 0 0 1 948.0,760.0M-62.0,760.0 A508.0,467.4 0 0 1 954.0,760.0M-68.0,760.0 A514.0,472.9 0 0 1 960.0,760.0M-74.0,760.0 A520.0,478.4 0 0 1 966.0,760.0M-80.0,760.0 A526.0,483.9 0 0 1 972.0,760.0M-86.0,760.0 A532.0,489.4 0 0 1 978.0,760.0M-92.0,760.0 A538.0,495.0 0 0 1 984.0,760.0M-98.0,760.0 A544.0,500.5 0 0 1 990.0,760.0M-104.0,760.0 A550.0,506.0 0 0 1 996.0,760.0M-110.0,760.0 A556.0,511.5 0 0 1 1002.0,760.0M-116.0,760.0 A562.0,517.0 0 0 1 1008.0,760.0M-122.0,760.0 A568.0,522.6 0 0 1 1014.0,760.0M-128.0,760.0 A574.0,528.1 0 0 1 1020.0,760.0" fill="none" stroke="#200000" stroke-width="1" stroke-opacity="0.95" stroke-dasharray="10 3"/><g fill="#500000" fill-opacity="0.15" filter="url(#soft)"><ellipse cx="232" cy="430" rx="27" ry="131"/><ellipse cx="320" cy="470" rx="68" ry="58"/><ellipse cx="250" cy="610" rx="47" ry="84"/><ellipse cx="600" cy="450" rx="84" ry="100"/><ellipse cx="655" cy="610" rx="29" ry="84"/><ellipse cx="450" cy="690" rx="226" ry="29"/><ellipse cx="330" cy="545" rx="63" ry="42"/><ellipse cx="560" cy="560" rx="52" ry="32"/><ellipse cx="214" cy="330" rx="10" ry="29"/><ellipse cx="682" cy="345" rx="10" ry="37"/><ellipse cx="330" cy="760" rx="74" ry="26"/><ellipse cx="560" cy="760" rx="74" ry="26"/><ellipse cx="470" cy="735" rx="63" ry="21"/></g><path d="M228.7,493.8A16.0,9.6 0 0 1 260.7,493.8M233.2,493.8A11.5,6.9 0 0 1 256.2,493.8M237.5,493.8A7.2,4.3 0 0 1 251.9,493.8M238.9,526.5A8.1,4.8 0 0 1 255.0,526.5M241.2,526.5A5.8,3.5 0 0 1 252.8,526.5M243.4,526.5A3.6,2.2 0 0 1 250.6,526.5M238.9,398.6A12.5,7.5 0 0 1 264.0,398.6M242.4,398.6A9.0,5.4 0 0 1 260.5,398.6M245.8,398.6A5.6,3.4 0 0 1 257.1,398.6M215.8,374.0A9.1,5.4 0 0 1 234.0,374.0M218.4,374.0A6.5,3.9 0 0 1 231.4,374.0M220.8,374.0A4.1,2.4 0 0 1 229.0,374.0M203.8,351.5A19.3,11.6 0 0 1 242.3,351.5M209.2,351.5A13.9,8.3 0 0 1 236.9,351.5M214.4,351.5A8.7,5.2 0 0 1 231.7,351.5M228.4,423.2A15.3,9.2 0 0 1 259.0,423.2M232.7,423.2A11.0,6.6 0 0 1 254.7,423.2M236.8,423.2A6.9,4.1 0 0 1 250.6,423.2M209.4,506.6A10.5,6.3 0 0 1 230.4,506.6M212.3,506.6A7.6,4.5 0 0 1 227.5,506.6M215.2,506.6A4.7,2.8 0 0 1 224.7,506.6M224.3,396.8A14.0,8.4 0 0 1 252.3,396.8M228.2,396.8A10.1,6.1 0 0 1 248.4,396.8M232.0,396.8A6.3,3.8 0 0 1 244.6,396.8M239.9,489.0A13.4,8.1 0 0 1 266.8,489.0M243.6,489.0A9.7,5.8 0 0 1 263.0,489.0M247.3,489.0A6.1,3.6 0 0 1 259.4,489.0M206.1,380.2A20.5,12.3 0 0 1 247.1,380.2M211.8,380.2A14.8,8.9 0 0 1 241.4,380.2M217.4,380.2A9.2,5.5 0 0 1 235.8,380.2M231.2,441.6A12.2,7.3 0 0 1 255.6,441.6M234.6,441.6A8.8,5.3 0 0 1 252.2,441.6M237.9,441.6A5.5,3.3 0 0 1 248.9,441.6M238.0,371.9A12.1,7.3 0 0 1 262.1,371.9M241.3,371.9A8.7,5.2 0 0 1 258.7,371.9M244.6,371.9A5.4,3.3 0 0 1 255.5,371.9M232.0,535.3A13.9,8.3 0 0 1 259.8,535.3M235.9,535.3A10.0,6.0 0 0 1 255.9,535.3M239.7,535.3A6.3,3.8 0 0 1 252.2,535.3M216.8,437.8A19.7,11.8 0 0 1 256.2,437.8M222.3,437.8A14.2,8.5 0 0 1 250.7,437.8M227.7,437.8A8.9,5.3 0 0 1 245.4,437.8M218.4,495.7A8.3,5.0 0 0 1 235.1,495.7M220.7,495.7A6.0,3.6 0 0 1 232.7,495.7M223.0,495.7A3.8,2.3 0 0 1 230.5,495.7M241.5,447.6A14.0,8.4 0 0 1 269.5,447.6M245.5,447.6A10.1,6.0 0 0 1 265.6,447.6M249.2,447.6A6.3,3.8 0 0 1 261.8,447.6M223.3,374.8A7.9,4.8 0 0 1 239.2,374.8M225.5,374.8A5.7,3.4 0 0 1 236.9,374.8M227.7,374.8A3.6,2.1 0 0 1 234.8,374.8M216.3,417.5A19.1,11.4 0 0 1 254.5,417.5M221.6,417.5A13.7,8.2 0 0 1 249.1,417.5M226.8,417.5A8.6,5.2 0 0 1 244.0,417.5M223.5,439.2A11.4,6.8 0 0 1 246.3,439.2M226.7,439.2A8.2,4.9 0 0 1 243.1,439.2M229.8,439.2A5.1,3.1 0 0 1 240.0,439.2M197.8,434.9A10.3,6.2 0 0 1 218.3,434.9M200.6,434.9A7.4,4.4 0 0 1 215.4,434.9M203.4,434.9A4.6,2.8 0 0 1 212.6,434.9M209.6,553.5A21.1,12.7 0 0 1 251.8,553.5M215.5,553.5A15.2,9.1 0 0 1 245.9,553.5M221.2,553.5A9.5,5.7 0 0 1 240.2,553.5M200.4,457.4A18.2,10.9 0 0 1 236.8,457.4M205.5,457.4A13.1,7.9 0 0 1 231.7,457.4M210.4,457.4A8.2,4.9 0 0 1 226.8,457.4M236.4,462.7A10.7,6.4 0 0 1 257.7,462.7M239.4,462.7A7.7,4.6 0 0 1 254.8,462.7M242.3,462.7A4.8,2.9 0 0 1 251.9,462.7M214.1,337.8A16.9,10.2 0 0 1 247.9,337.8M218.8,337.8A12.2,7.3 0 0 1 243.2,337.8M223.4,337.8A7.6,4.6 0 0 1 238.6,337.8M227.6,311.9A9.2,5.5 0 0 1 246.1,311.9M230.2,311.9A6.7,4.0 0 0 1 243.5,311.9M232.7,311.9A4.2,2.5 0 0 1 241.0,311.9M223.9,495.3A18.8,11.3 0 0 1 261.5,495.3M229.2,495.3A13.5,8.1 0 0 1 256.3,495.3M234.3,495.3A8.5,5.1 0 0 1 251.2,495.3M219.9,406.5A12.4,7.4 0 0 1 244.7,406.5M223.4,406.5A8.9,5.4 0 0 1 241.2,406.5M226.7,406.5A5.6,3.3 0 0 1 237.9,406.5M231.2,429.6A10.7,6.4 0 0 1 252.5,429.6M234.2,429.6A7.7,4.6 0 0 1 249.5,429.6M237.1,429.6A4.8,2.9 0 0 1 246.7,429.6M238.0,473.5A16.5,9.9 0 0 1 271.0,473.5M242.6,473.5A11.9,7.1 0 0 1 266.4,473.5M247.1,473.5A7.4,4.5 0 0 1 261.9,473.5M208.5,430.4A16.2,9.7 0 0 1 240.9,430.4M213.1,430.4A11.6,7.0 0 0 1 236.3,430.4M217.4,430.4A7.3,4.4 0 0 1 232.0,430.4M225.2,440.2A15.3,9.2 0 0 1 255.9,440.2M229.5,440.2A11.0,6.6 0 0 1 251.6,440.2M233.7,440.2A6.9,4.1 0 0 1 247.5,440.2M210.3,519.4A12.3,7.4 0 0 1 234.8,519.4M213.7,519.4A8.8,5.3 0 0 1 231.4,519.4M217.0,519.4A5.5,3.3 0 0 1 228.1,519.4M204.8,502.1A20.7,12.4 0 0 1 246.2,502.1M210.6,502.1A14.9,8.9 0 0 1 240.4,502.1M216.2,502.1A9.3,5.6 0 0 1 234.8,502.1M227.2,478.3A21.5,12.9 0 0 1 270.1,478.3M233.3,478.3A15.4,9.3 0 0 1 264.1,478.3M239.0,478.3A9.7,5.8 0 0 1 258.3,478.3M210.8,399.3A19.1,11.5 0 0 1 249.0,399.3M216.2,399.3A13.7,8.2 0 0 1 243.7,399.3M221.3,399.3A8.6,5.2 0 0 1 238.5,399.3M235.2,497.0A7.7,4.6 0 0 1 250.7,497.0M237.4,497.0A5.6,3.3 0 0 1 248.5,497.0M239.5,497.0A3.5,2.1 0 0 1 246.4,497.0M209.0,320.0A18.4,11.0 0 0 1 245.8,320.0M214.2,320.0A13.3,8.0 0 0 1 240.7,320.0M219.2,320.0A8.3,5.0 0 0 1 235.7,320.0M226.1,369.5A9.1,5.4 0 0 1 244.3,369.5M228.7,369.5A6.5,3.9 0 0 1 241.7,369.5M231.1,369.5A4.1,2.4 0 0 1 239.3,369.5M202.0,430.9A16.1,9.7 0 0 1 234.2,430.9M206.5,430.9A11.6,6.9 0 0 1 229.7,430.9M210.9,430.9A7.2,4.3 0 0 1 225.3,430.9M221.0,528.4A12.4,7.4 0 0 1 245.7,528.4M224.4,528.4A8.9,5.3 0 0 1 242.2,528.4M227.8,528.4A5.6,3.3 0 0 1 238.9,528.4M212.9,538.1A13.2,7.9 0 0 1 239.4,538.1M216.6,538.1A9.5,5.7 0 0 1 235.7,538.1M220.2,538.1A6.0,3.6 0 0 1 232.1,538.1M212.5,350.2A10.9,6.5 0 0 1 234.2,350.2M215.5,350.2A7.8,4.7 0 0 1 231.2,350.2M218.4,350.2A4.9,2.9 0 0 1 228.2,350.2M229.0,470.4A15.2,9.1 0 0 1 259.4,470.4M233.2,470.4A11.0,6.6 0 0 1 255.2,470.4M237.3,470.4A6.9,4.1 0 0 1 251.1,470.4M226.3,522.4A18.8,11.3 0 0 1 263.8,522.4M231.6,522.4A13.5,8.1 0 0 1 258.6,522.4M236.6,522.4A8.4,5.1 0 0 1 253.5,522.4M239.0,367.1A11.5,6.9 0 0 1 261.9,367.1M242.2,367.1A8.3,5.0 0 0 1 258.7,367.1M245.3,367.1A5.2,3.1 0 0 1 255.6,367.1M207.2,521.4A12.8,7.7 0 0 1 232.7,521.4M210.7,521.4A9.2,5.5 0 0 1 229.1,521.4M214.2,521.4A5.7,3.4 0 0 1 225.7,521.4M229.2,357.2A18.2,10.9 0 0 1 265.6,357.2M234.3,357.2A13.1,7.8 0 0 1 260.5,357.2M239.2,357.2A8.2,4.9 0 0 1 255.6,357.2M220.1,348.1A15.5,9.3 0 0 1 251.1,348.1M224.4,348.1A11.2,6.7 0 0 1 246.7,348.1M228.6,348.1A7.0,4.2 0 0 1 242.5,348.1M192.3,391.7A17.6,10.5 0 0 1 227.5,391.7M197.3,391.7A12.7,7.6 0 0 1 222.6,391.7M202.0,391.7A7.9,4.7 0 0 1 217.8,391.7M199.0,432.9A8.6,5.2 0 0 1 216.2,432.9M201.4,432.9A6.2,3.7 0 0 1 213.8,432.9M203.7,432.9A3.9,2.3 0 0 1 211.5,432.9M210.3,457.3A16.3,9.8 0 0 1 242.9,457.3M214.9,457.3A11.7,7.0 0 0 1 238.3,457.3M219.3,457.3A7.3,4.4 0 0 1 233.9,457.3M201.3,480.2A9.1,5.4 0 0 1 219.5,480.2M203.9,480.2A6.5,3.9 0 0 1 216.9,480.2M206.3,480.2A4.1,2.4 0 0 1 214.5,480.2M201.3,476.9A14.5,8.7 0 0 1 230.3,476.9M205.4,476.9A10.4,6.3 0 0 1 226.2,476.9M209.3,476.9A6.5,3.9 0 0 1 222.3,476.9M198.4,421.2A9.6,5.7 0 0 1 217.5,421.2M201.0,421.2A6.9,4.1 0 0 1 214.8,421.2M203.6,421.2A4.3,2.6 0 0 1 212.2,421.2M226.4,464.9A21.6,13.0 0 0 1 269.7,464.9M232.5,464.9A15.6,9.3 0 0 1 263.6,464.9M238.3,464.9A9.7,5.8 0 0 1 257.8,464.9M242.2,424.8A8.8,5.3 0 0 1 259.8,424.8M244.7,424.8A6.3,3.8 0 0 1 257.3,424.8M247.0,424.8A4.0,2.4 0 0 1 255.0,424.8M222.7,531.9A15.1,9.1 0 0 1 252.9,531.9M226.9,531.9A10.9,6.5 0 0 1 248.7,531.9M231.0,531.9A6.8,4.1 0 0 1 244.6,531.9M212.7,546.3A18.5,11.1 0 0 1 249.7,546.3M217.9,546.3A13.3,8.0 0 0 1 244.5,546.3M222.9,546.3A8.3,5.0 0 0 1 239.5,546.3M191.9,490.1A21.6,12.9 0 0 1 235.1,490.1M198.0,490.1A15.5,9.3 0 0 1 229.0,490.1M203.8,490.1A9.7,5.8 0 0 1 223.2,490.1M225.8,493.3A14.6,8.8 0 0 1 255.1,493.3M229.9,493.3A10.5,6.3 0 0 1 251.0,493.3M233.9,493.3A6.6,3.9 0 0 1 247.0,493.3M230.7,449.3A12.8,7.7 0 0 1 256.3,449.3M234.3,449.3A9.2,5.5 0 0 1 252.7,449.3M237.7,449.3A5.8,3.5 0 0 1 249.3,449.3M220.9,416.4A7.7,4.6 0 0 1 236.3,416.4M223.0,416.4A5.5,3.3 0 0 1 234.1,416.4M225.1,416.4A3.5,2.1 0 0 1 232.0,416.4M237.1,345.4A12.5,7.5 0 0 1 262.0,345.4M240.6,345.4A9.0,5.4 0 0 1 258.6,345.4M244.0,345.4A5.6,3.4 0 0 1 255.2,345.4M228.8,395.7A18.2,10.9 0 0 1 265.2,395.7M233.9,395.7A13.1,7.9 0 0 1 260.1,395.7M238.8,395.7A8.2,4.9 0 0 1 255.1,395.7M234.9,507.9A8.3,5.0 0 0 1 251.5,507.9M237.3,507.9A6.0,3.6 0 0 1 249.2,507.9M239.5,507.9A3.7,2.2 0 0 1 247.0,507.9M227.3,318.6A13.7,8.2 0 0 1 254.8,318.6M231.2,318.6A9.9,5.9 0 0 1 250.9,318.6M234.9,318.6A6.2,3.7 0 0 1 247.2,318.6M230.3,362.9A21.5,12.9 0 0 1 273.4,362.9M236.4,362.9A15.5,9.3 0 0 1 267.3,362.9M242.2,362.9A9.7,5.8 0 0 1 261.5,362.9M214.9,362.3A9.7,5.8 0 0 1 234.4,362.3M217.6,362.3A7.0,4.2 0 0 1 231.7,362.3M220.3,362.3A4.4,2.6 0 0 1 229.0,362.3M211.9,359.9A17.4,10.4 0 0 1 246.7,359.9M216.8,359.9A12.5,7.5 0 0 1 241.8,359.9M221.5,359.9A7.8,4.7 0 0 1 237.1,359.9M198.2,468.7A9.5,5.7 0 0 1 217.2,468.7M200.9,468.7A6.8,4.1 0 0 1 214.6,468.7M203.5,468.7A4.3,2.6 0 0 1 212.0,468.7M231.2,532.1A14.3,8.6 0 0 1 259.9,532.1M235.2,532.1A10.3,6.2 0 0 1 255.8,532.1M239.1,532.1A6.4,3.9 0 0 1 252.0,532.1M228.9,513.9A13.0,7.8 0 0 1 254.8,513.9M232.5,513.9A9.3,5.6 0 0 1 251.2,513.9M236.0,513.9A5.8,3.5 0 0 1 247.7,513.9M232.2,445.8A15.7,9.4 0 0 1 263.7,445.8M236.6,445.8A11.3,6.8 0 0 1 259.3,445.8M240.8,445.8A7.1,4.3 0 0 1 255.0,445.8M231.0,359.9A21.0,12.6 0 0 1 273.1,359.9M236.9,359.9A15.2,9.1 0 0 1 267.2,359.9M242.6,359.9A9.5,5.7 0 0 1 261.6,359.9M200.4,442.7A13.0,7.8 0 0 1 226.3,442.7M204.0,442.7A9.3,5.6 0 0 1 222.7,442.7M207.5,442.7A5.8,3.5 0 0 1 219.2,442.7M243.8,458.9A10.7,6.4 0 0 1 265.1,458.9M246.8,458.9A7.7,4.6 0 0 1 262.1,458.9M249.6,458.9A4.8,2.9 0 0 1 259.3,458.9M196.9,452.1A13.5,8.1 0 0 1 224.0,452.1M200.7,452.1A9.7,5.8 0 0 1 220.2,452.1M204.4,452.1A6.1,3.7 0 0 1 216.6,452.1M219.1,387.7A7.2,4.3 0 0 1 233.5,387.7M221.1,387.7A5.2,3.1 0 0 1 231.5,387.7M223.1,387.7A3.2,1.9 0 0 1 229.5,387.7M195.0,407.9A13.2,7.9 0 0 1 221.5,407.9M198.7,407.9A9.5,5.7 0 0 1 217.8,407.9M202.3,407.9A6.0,3.6 0 0 1 214.2,407.9M220.3,432.3A16.0,9.6 0 0 1 252.2,432.3M224.8,432.3A11.5,6.9 0 0 1 247.8,432.3M229.1,432.3A7.2,4.3 0 0 1 243.5,432.3M227.9,448.3A12.6,7.6 0 0 1 253.1,448.3M231.4,448.3A9.1,5.5 0 0 1 249.6,448.3M234.8,448.3A5.7,3.4 0 0 1 246.2,448.3M197.0,384.1A12.5,7.5 0 0 1 221.9,384.1M200.5,384.1A9.0,5.4 0 0 1 218.4,384.1M203.8,384.1A5.6,3.4 0 0 1 215.1,384.1M207.9,419.4A26.5,15.9 0 0 1 248.3,415.3M231.9,443.7A31.7,19.0 0 0 1 280.8,453.9M193.7,503.4A27.7,16.6 0 0 1 245.1,504.4M215.6,289.2A36.1,21.6 0 0 1 247.3,289.2M226.4,422.9A27.1,16.2 0 0 1 262.3,423.8M196.9,411.8A19.6,11.7 0 0 1 216.6,410.0M205.0,525.0A33.0,19.8 0 0 1 251.5,520.1M221.6,367.4A18.7,11.2 0 0 1 244.8,361.7M199.3,379.9A39.4,23.7 0 0 1 258.8,370.4M194.4,389.9A26.3,15.8 0 0 1 236.9,382.7M210.5,428.8A38.0,22.8 0 0 1 265.6,420.5M200.9,315.9A24.5,14.7 0 0 1 242.7,316.6M217.0,330.6A21.9,13.2 0 0 1 256.8,329.4M196.8,303.7A35.2,21.1 0 0 1 241.1,297.1M229.2,349.6A30.7,18.4 0 0 1 268.8,349.9M203.5,495.5A28.6,17.2 0 0 1 248.4,503.8M230.0,352.1A26.2,15.7 0 0 1 258.6,354.5M213.4,382.8A27.9,16.8 0 0 1 259.8,386.8M218.0,382.1A31.6,18.9 0 0 1 253.9,379.2M205.4,340.7A39.2,23.5 0 0 1 271.2,334.1M199.0,507.4A31.4,18.8 0 0 1 241.8,504.8M186.5,414.3A37.6,22.6 0 0 1 243.2,412.5M197.3,481.4A39.0,23.4 0 0 1 267.6,484.4M201.7,348.8A21.6,13.0 0 0 1 230.0,354.7M185.1,374.1A33.9,20.3 0 0 1 239.9,374.8M206.8,435.8A32.9,19.7 0 0 1 263.6,441.6M211.9,521.4A39.7,23.8 0 0 1 268.1,536.1M323.9,488.8A10.4,6.3 0 0 1 344.7,488.8M326.8,488.8A7.5,4.5 0 0 1 341.8,488.8M329.6,488.8A4.7,2.8 0 0 1 339.0,488.8M331.6,484.2A7.3,4.4 0 0 1 346.2,484.2M333.6,484.2A5.2,3.1 0 0 1 344.1,484.2M335.6,484.2A3.3,2.0 0 0 1 342.2,484.2M273.1,503.3A13.8,8.3 0 0 1 300.8,503.3M277.0,503.3A9.9,6.0 0 0 1 296.9,503.3M280.7,503.3A6.2,3.7 0 0 1 293.2,503.3M318.9,438.1A15.0,9.0 0 0 1 348.9,438.1M323.1,438.1A10.8,6.5 0 0 1 344.7,438.1M327.1,438.1A6.8,4.1 0 0 1 340.7,438.1M301.6,495.3A11.6,7.0 0 0 1 324.8,495.3M304.8,495.3A8.4,5.0 0 0 1 321.6,495.3M308.0,495.3A5.2,3.1 0 0 1 318.5,495.3M274.7,455.6A11.9,7.1 0 0 1 298.5,455.6M278.0,455.6A8.6,5.1 0 0 1 295.2,455.6M281.2,455.6A5.4,3.2 0 0 1 291.9,455.6M316.8,470.3A7.9,4.7 0 0 1 332.6,470.3M319.0,470.3A5.7,3.4 0 0 1 330.4,470.3M321.2,470.3A3.5,2.1 0 0 1 328.2,470.3M261.6,435.0A21.4,12.8 0 0 1 304.4,435.0M267.6,435.0A15.4,9.2 0 0 1 298.4,435.0M273.4,435.0A9.6,5.8 0 0 1 292.6,435.0M333.3,456.9A14.8,8.9 0 0 1 362.8,456.9M337.4,456.9A10.6,6.4 0 0 1 358.7,456.9M341.4,456.9A6.7,4.0 0 0 1 354.7,456.9M315.3,443.8A14.2,8.5 0 0 1 343.6,443.8M319.3,443.8A10.2,6.1 0 0 1 339.7,443.8M323.1,443.8A6.4,3.8 0 0 1 335.8,443.8M284.2,522.9A20.6,12.3 0 0 1 325.4,522.9M290.0,522.9A14.8,8.9 0 0 1 319.6,522.9M295.6,522.9A9.3,5.6 0 0 1 314.1,522.9M322.1,419.1A12.0,7.2 0 0 1 346.0,419.1M325.4,419.1A8.6,5.2 0 0 1 342.7,419.1M328.6,419.1A5.4,3.2 0 0 1 339.4,419.1M280.5,477.0A15.0,9.0 0 0 1 310.4,477.0M284.7,477.0A10.8,6.5 0 0 1 306.2,477.0M288.7,477.0A6.7,4.0 0 0 1 302.2,477.0M293.7,427.8A7.6,4.6 0 0 1 308.9,427.8M295.8,427.8A5.5,3.3 0 0 1 306.8,427.8M297.9,427.8A3.4,2.1 0 0 1 304.7,427.8M345.3,448.7A21.6,13.0 0 0 1 388.5,448.7M351.3,448.7A15.6,9.3 0 0 1 382.5,448.7M357.2,448.7A9.7,5.8 0 0 1 376.6,448.7M308.6,450.9A20.4,12.3 0 0 1 349.4,450.9M314.3,450.9A14.7,8.8 0 0 1 343.7,450.9M319.8,450.9A9.2,5.5 0 0 1 338.2,450.9M329.9,448.2A16.4,9.8 0 0 1 362.7,448.2M334.5,448.2A11.8,7.1 0 0 1 358.1,448.2M338.9,448.2A7.4,4.4 0 0 1 353.7,448.2M286.1,428.0A21.6,12.9 0 0 1 329.3,428.0M292.2,428.0A15.5,9.3 0 0 1 323.2,428.0M298.0,428.0A9.7,5.8 0 0 1 317.4,428.0M337.4,494.4A21.3,12.8 0 0 1 380.0,494.4M343.3,494.4A15.4,9.2 0 0 1 374.0,494.4M349.1,494.4A9.6,5.8 0 0 1 368.3,494.4M298.5,486.8A13.7,8.2 0 0 1 325.9,486.8M302.3,486.8A9.9,5.9 0 0 1 322.1,486.8M306.0,486.8A6.2,3.7 0 0 1 318.4,486.8M258.8,478.6A11.1,6.7 0 0 1 281.0,478.6M261.9,478.6A8.0,4.8 0 0 1 277.8,478.6M264.9,478.6A5.0,3.0 0 0 1 274.9,478.6M302.7,487.5A12.2,7.3 0 0 1 327.2,487.5M306.1,487.5A8.8,5.3 0 0 1 323.7,487.5M309.4,487.5A5.5,3.3 0 0 1 320.4,487.5M317.6,494.4A20.9,12.5 0 0 1 359.4,494.4M323.4,494.4A15.0,9.0 0 0 1 353.5,494.4M329.1,494.4A9.4,5.6 0 0 1 347.9,494.4M307.3,460.2A20.3,12.2 0 0 1 348.0,460.2M313.0,460.2A14.6,8.8 0 0 1 342.3,460.2M318.5,460.2A9.1,5.5 0 0 1 336.8,460.2M321.8,512.9A21.8,13.1 0 0 1 365.5,512.9M327.9,512.9A15.7,9.4 0 0 1 359.4,512.9M333.8,512.9A9.8,5.9 0 0 1 353.5,512.9M299.1,417.4A21.8,13.1 0 0 1 342.7,417.4M305.2,417.4A15.7,9.4 0 0 1 336.6,417.4M311.1,417.4A9.8,5.9 0 0 1 330.7,417.4M343.9,510.0A12.9,7.8 0 0 1 369.8,510.0M347.5,510.0A9.3,5.6 0 0 1 366.1,510.0M351.0,510.0A5.8,3.5 0 0 1 362.7,510.0M300.6,469.9A7.3,4.4 0 0 1 315.1,469.9M302.6,469.9A5.2,3.1 0 0 1 313.1,469.9M304.6,469.9A3.3,2.0 0 0 1 311.1,469.9M252.3,443.0A21.4,12.8 0 0 1 295.0,443.0M258.3,443.0A15.4,9.2 0 0 1 289.0,443.0M264.0,443.0A9.6,5.8 0 0 1 283.2,443.0M350.3,454.1A18.0,10.8 0 0 1 386.4,454.1M355.4,454.1A13.0,7.8 0 0 1 381.3,454.1M360.2,454.1A8.1,4.9 0 0 1 376.4,454.1M315.7,476.7A18.4,11.0 0 0 1 352.5,476.7M320.9,476.7A13.2,7.9 0 0 1 347.4,476.7M325.8,476.7A8.3,5.0 0 0 1 342.4,476.7M323.9,433.7A7.1,4.3 0 0 1 338.1,433.7M325.8,433.7A5.1,3.1 0 0 1 336.1,433.7M327.8,433.7A3.2,1.9 0 0 1 334.2,433.7M292.5,475.2A10.9,6.5 0 0 1 314.4,475.2M295.6,475.2A7.9,4.7 0 0 1 311.3,475.2M298.5,475.2A4.9,2.9 0 0 1 308.4,475.2M279.6,508.1A9.5,5.7 0 0 1 298.6,508.1M282.2,508.1A6.8,4.1 0 0 1 295.9,508.1M284.8,508.1A4.3,2.6 0 0 1 293.4,508.1M261.8,436.7A8.7,5.2 0 0 1 279.2,436.7M264.2,436.7A6.3,3.8 0 0 1 276.8,436.7M266.6,436.7A3.9,2.4 0 0 1 274.4,436.7M321.5,494.1A9.4,5.7 0 0 1 340.4,494.1M324.1,494.1A6.8,4.1 0 0 1 337.7,494.1M326.7,494.1A4.2,2.5 0 0 1 335.2,494.1M313.5,495.2A14.2,8.5 0 0 1 341.9,495.2M317.5,495.2A10.2,6.1 0 0 1 337.9,495.2M321.3,495.2A6.4,3.8 0 0 1 334.1,495.2M294.1,487.0A8.4,5.1 0 0 1 310.9,487.0M296.5,487.0A6.1,3.6 0 0 1 308.6,487.0M298.7,487.0A3.8,2.3 0 0 1 306.3,487.0M321.4,503.5A20.1,12.0 0 0 1 361.6,503.5M327.1,503.5A14.4,8.7 0 0 1 356.0,503.5M332.5,503.5A9.0,5.4 0 0 1 350.5,503.5M315.5,480.0A8.0,4.8 0 0 1 331.6,480.0M317.8,480.0A5.8,3.5 0 0 1 329.3,480.0M320.0,480.0A3.6,2.2 0 0 1 327.2,480.0M276.6,504.3A8.3,5.0 0 0 1 293.1,504.3M278.9,504.3A5.9,3.6 0 0 1 290.8,504.3M281.1,504.3A3.7,2.2 0 0 1 288.6,504.3M286.0,431.9A14.8,8.9 0 0 1 315.5,431.9M290.1,431.9A10.6,6.4 0 0 1 311.4,431.9M294.1,431.9A6.6,4.0 0 0 1 307.4,431.9M326.3,485.9A15.5,9.3 0 0 1 357.2,485.9M330.6,485.9A11.1,6.7 0 0 1 352.9,485.9M334.8,485.9A7.0,4.2 0 0 1 348.7,485.9M368.0,463.2A15.8,9.5 0 0 1 399.6,463.2M372.4,463.2A11.4,6.8 0 0 1 395.1,463.2M376.6,463.2A7.1,4.3 0 0 1 390.9,463.2M296.3,451.0A16.0,9.6 0 0 1 328.3,451.0M300.8,451.0A11.5,6.9 0 0 1 323.9,451.0M305.1,451.0A7.2,4.3 0 0 1 319.5,451.0M296.6,486.8A7.1,4.3 0 0 1 310.9,486.8M298.6,486.8A5.1,3.1 0 0 1 308.9,486.8M300.5,486.8A3.2,1.9 0 0 1 307.0,486.8M297.1,423.3A11.3,6.8 0 0 1 319.7,423.3M300.3,423.3A8.2,4.9 0 0 1 316.6,423.3M303.3,423.3A5.1,3.1 0 0 1 313.5,423.3M323.0,508.2A19.6,11.8 0 0 1 362.2,508.2M328.5,508.2A14.1,8.5 0 0 1 356.7,508.2M333.8,508.2A8.8,5.3 0 0 1 351.4,508.2M332.8,458.7A17.5,10.5 0 0 1 367.9,458.7M337.7,458.7A12.6,7.6 0 0 1 363.0,458.7M342.5,458.7A7.9,4.7 0 0 1 358.2,458.7M283.9,465.9A15.1,9.1 0 0 1 314.1,465.9M288.1,465.9A10.9,6.5 0 0 1 309.9,465.9M292.2,465.9A6.8,4.1 0 0 1 305.8,465.9M280.3,496.7A17.7,10.6 0 0 1 315.7,496.7M285.3,496.7A12.7,7.6 0 0 1 310.7,496.7M290.1,496.7A8.0,4.8 0 0 1 306.0,496.7M290.5,480.1A11.2,6.7 0 0 1 313.0,480.1M293.7,480.1A8.1,4.9 0 0 1 309.8,480.1M296.7,480.1A5.1,3.0 0 0 1 306.8,480.1M339.0,464.1A20.1,12.0 0 0 1 379.2,464.1M344.6,464.1A14.4,8.7 0 0 1 373.5,464.1M350.1,464.1A9.0,5.4 0 0 1 368.1,464.1M309.3,498.2A17.4,10.5 0 0 1 344.2,498.2M314.2,498.2A12.6,7.5 0 0 1 339.3,498.2M318.9,498.2A7.8,4.7 0 0 1 334.6,498.2M339.8,460.8A18.0,10.8 0 0 1 375.7,460.8M344.8,460.8A12.9,7.8 0 0 1 370.7,460.8M349.7,460.8A8.1,4.8 0 0 1 365.8,460.8M321.8,519.9A11.9,7.2 0 0 1 345.6,519.9M325.1,519.9A8.6,5.2 0 0 1 342.3,519.9M328.3,519.9A5.4,3.2 0 0 1 339.1,519.9M345.0,481.5A16.5,9.9 0 0 1 378.0,481.5M349.7,481.5A11.9,7.1 0 0 1 373.4,481.5M354.1,481.5A7.4,4.5 0 0 1 369.0,481.5M318.6,446.2A19.7,11.8 0 0 1 358.1,446.2M324.2,446.2A14.2,8.5 0 0 1 352.5,446.2M329.5,446.2A8.9,5.3 0 0 1 347.2,446.2M304.2,491.9A13.7,8.2 0 0 1 331.7,491.9M308.1,491.9A9.9,5.9 0 0 1 327.8,491.9M311.8,491.9A6.2,3.7 0 0 1 324.1,491.9M257.0,501.2A15.7,9.4 0 0 1 288.4,501.2M261.4,501.2A11.3,6.8 0 0 1 284.0,501.2M265.6,501.2A7.1,4.2 0 0 1 279.7,501.2M258.0,487.4A29.0,17.4 0 0 1 302.5,495.9M276.8,433.7A23.8,14.3 0 0 1 308.5,440.0M316.4,430.7A27.6,16.6 0 0 1 344.4,431.5M319.5,425.4A22.8,13.7 0 0 1 347.6,420.3M277.9,423.1A18.6,11.2 0 0 1 310.8,423.4M309.0,493.4A35.7,21.4 0 0 1 350.2,489.1M341.1,435.1A30.4,18.3 0 0 1 391.3,433.1M282.5,478.9A20.7,12.4 0 0 1 312.5,471.0M299.8,500.7A30.8,18.5 0 0 1 349.5,506.3M337.4,482.4A19.7,11.8 0 0 1 361.3,478.4M324.0,464.1A26.6,15.9 0 0 1 354.4,464.1M299.3,434.4A24.3,14.6 0 0 1 327.9,430.1M237.9,477.8A36.1,21.7 0 0 1 305.6,474.0M266.2,442.2A19.1,11.5 0 0 1 286.1,442.8M247.9,442.0A38.0,22.8 0 0 1 311.2,452.7M302.7,502.4A30.7,18.4 0 0 1 351.0,503.9M253.3,454.6A32.1,19.3 0 0 1 307.4,446.7M271.6,463.4A30.5,18.3 0 0 1 304.7,461.0M285.4,477.9A31.1,18.7 0 0 1 331.8,467.3M270.9,471.7A18.7,11.2 0 0 1 288.6,472.4M217.7,586.0A15.9,9.6 0 0 1 249.6,586.0M222.2,586.0A11.5,6.9 0 0 1 245.1,586.0M226.5,586.0A7.2,4.3 0 0 1 240.8,586.0M221.3,660.1A15.8,9.5 0 0 1 252.8,660.1M225.7,660.1A11.4,6.8 0 0 1 248.4,660.1M229.9,660.1A7.1,4.3 0 0 1 244.2,660.1M232.8,571.6A8.4,5.0 0 0 1 249.6,571.6M235.2,571.6A6.0,3.6 0 0 1 247.2,571.6M237.4,571.6A3.8,2.3 0 0 1 245.0,571.6M220.5,665.2A13.2,7.9 0 0 1 247.0,665.2M224.2,665.2A9.5,5.7 0 0 1 243.3,665.2M227.8,665.2A5.9,3.6 0 0 1 239.7,665.2M269.7,645.8A8.6,5.2 0 0 1 287.0,645.8M272.1,645.8A6.2,3.7 0 0 1 284.6,645.8M274.4,645.8A3.9,2.3 0 0 1 282.2,645.8M227.2,551.5A9.4,5.6 0 0 1 246.0,551.5M229.8,551.5A6.8,4.1 0 0 1 243.3,551.5M232.4,551.5A4.2,2.5 0 0 1 240.8,551.5M245.5,601.3A17.2,10.3 0 0 1 279.8,601.3M250.3,601.3A12.4,7.4 0 0 1 275.0,601.3M254.9,601.3A7.7,4.6 0 0 1 270.4,601.3M219.8,577.2A8.9,5.3 0 0 1 237.5,577.2M222.3,577.2A6.4,3.8 0 0 1 235.0,577.2M224.7,577.2A4.0,2.4 0 0 1 232.6,577.2M272.8,612.9A19.0,11.4 0 0 1 310.8,612.9M278.1,612.9A13.7,8.2 0 0 1 305.5,612.9M283.3,612.9A8.5,5.1 0 0 1 300.3,612.9M196.5,596.5A21.7,13.0 0 0 1 239.9,596.5M202.6,596.5A15.6,9.4 0 0 1 233.8,596.5M208.4,596.5A9.8,5.9 0 0 1 228.0,596.5M222.7,658.8A18.8,11.3 0 0 1 260.3,658.8M228.0,658.8A13.5,8.1 0 0 1 255.1,658.8M233.1,658.8A8.5,5.1 0 0 1 250.0,658.8M229.0,614.0A16.7,10.0 0 0 1 262.4,614.0M233.6,614.0A12.0,7.2 0 0 1 257.7,614.0M238.2,614.0A7.5,4.5 0 0 1 253.2,614.0M262.9,652.6A13.7,8.2 0 0 1 290.2,652.6M266.7,652.6A9.8,5.9 0 0 1 286.4,652.6M270.4,652.6A6.2,3.7 0 0 1 282.7,652.6M235.4,667.3A10.7,6.4 0 0 1 256.8,667.3M238.4,667.3A7.7,4.6 0 0 1 253.8,667.3M241.3,667.3A4.8,2.9 0 0 1 250.9,667.3M268.3,590.3A10.8,6.5 0 0 1 289.9,590.3M271.3,590.3A7.8,4.7 0 0 1 286.8,590.3M274.2,590.3A4.9,2.9 0 0 1 283.9,590.3M269.2,573.0A17.2,10.3 0 0 1 303.5,573.0M274.0,573.0A12.4,7.4 0 0 1 298.7,573.0M278.6,573.0A7.7,4.6 0 0 1 294.1,573.0M238.1,544.1A13.4,8.1 0 0 1 265.0,544.1M241.9,544.1A9.7,5.8 0 0 1 261.2,544.1M245.5,544.1A6.0,3.6 0 0 1 257.6,544.1M224.4,546.7A21.5,12.9 0 0 1 267.5,546.7M230.5,546.7A15.5,9.3 0 0 1 261.5,546.7M236.3,546.7A9.7,5.8 0 0 1 255.6,546.7M243.8,583.8A21.2,12.7 0 0 1 286.2,583.8M249.8,583.8A15.3,9.2 0 0 1 280.3,583.8M255.5,583.8A9.5,5.7 0 0 1 274.6,583.8M252.5,623.3A22.0,13.2 0 0 1 296.5,623.3M258.7,623.3A15.8,9.5 0 0 1 290.3,623.3M264.6,623.3A9.9,5.9 0 0 1 284.4,623.3M235.0,584.2A7.1,4.3 0 0 1 249.2,584.2M237.0,584.2A5.1,3.1 0 0 1 247.2,584.2M238.9,584.2A3.2,1.9 0 0 1 245.3,584.2M274.5,585.4A13.4,8.1 0 0 1 301.4,585.4M278.3,585.4A9.7,5.8 0 0 1 297.6,585.4M281.9,585.4A6.0,3.6 0 0 1 294.0,585.4M250.0,584.8A20.1,12.1 0 0 1 290.3,584.8M255.7,584.8A14.5,8.7 0 0 1 284.6,584.8M261.1,584.8A9.1,5.4 0 0 1 279.2,584.8M236.1,624.9A9.4,5.6 0 0 1 254.9,624.9M238.7,624.9A6.8,4.1 0 0 1 252.3,624.9M241.3,624.9A4.2,2.5 0 0 1 249.7,624.9M273.3,618.9A9.5,5.7 0 0 1 292.4,618.9M276.0,618.9A6.9,4.1 0 0 1 289.7,618.9M278.6,618.9A4.3,2.6 0 0 1 287.2,618.9M253.2,636.2A11.0,6.6 0 0 1 275.2,636.2M256.3,636.2A7.9,4.8 0 0 1 272.1,636.2M259.2,636.2A5.0,3.0 0 0 1 269.2,636.2M245.9,545.2A18.1,10.9 0 0 1 282.1,545.2M251.0,545.2A13.0,7.8 0 0 1 277.1,545.2M255.9,545.2A8.2,4.9 0 0 1 272.2,545.2M214.9,597.4A9.7,5.8 0 0 1 234.3,597.4M217.6,597.4A7.0,4.2 0 0 1 231.6,597.4M220.3,597.4A4.4,2.6 0 0 1 229.0,597.4M211.4,644.8A8.0,4.8 0 0 1 227.5,644.8M213.7,644.8A5.8,3.5 0 0 1 225.2,644.8M215.9,644.8A3.6,2.2 0 0 1 223.1,644.8M253.6,638.1A18.0,10.8 0 0 1 289.6,638.1M258.7,638.1A13.0,7.8 0 0 1 284.6,638.1M263.5,638.1A8.1,4.9 0 0 1 279.7,638.1M230.7,584.4A12.8,7.7 0 0 1 256.2,584.4M234.3,584.4A9.2,5.5 0 0 1 252.7,584.4M237.7,584.4A5.7,3.4 0 0 1 249.2,584.4M211.0,607.8A17.5,10.5 0 0 1 246.0,607.8M215.9,607.8A12.6,7.6 0 0 1 241.1,607.8M220.7,607.8A7.9,4.7 0 0 1 236.4,607.8M238.7,597.0A14.3,8.6 0 0 1 267.4,597.0M242.7,597.0A10.3,6.2 0 0 1 263.3,597.0M246.6,597.0A6.4,3.9 0 0 1 259.5,597.0M220.4,599.8A17.9,10.8 0 0 1 256.3,599.8M225.4,599.8A12.9,7.8 0 0 1 251.3,599.8M230.3,599.8A8.1,4.8 0 0 1 246.4,599.8M242.6,606.2A13.3,8.0 0 0 1 269.1,606.2M246.3,606.2A9.6,5.7 0 0 1 265.4,606.2M249.9,606.2A6.0,3.6 0 0 1 261.8,606.2M259.4,549.3A9.7,5.8 0 0 1 278.8,549.3M262.1,549.3A7.0,4.2 0 0 1 276.1,549.3M264.7,549.3A4.4,2.6 0 0 1 273.5,549.3M236.5,558.4A10.9,6.6 0 0 1 258.3,558.4M239.5,558.4A7.9,4.7 0 0 1 255.3,558.4M242.5,558.4A4.9,3.0 0 0 1 252.3,558.4M249.6,570.2A15.2,9.1 0 0 1 280.1,570.2M253.8,570.2A11.0,6.6 0 0 1 275.8,570.2M258.0,570.2A6.9,4.1 0 0 1 271.7,570.2M238.7,684.6A20.3,12.2 0 0 1 279.2,684.6M244.4,684.6A14.6,8.8 0 0 1 273.5,684.6M249.8,684.6A9.1,5.5 0 0 1 268.1,684.6M220.3,549.1A15.2,9.1 0 0 1 250.6,549.1M224.5,549.1A10.9,6.6 0 0 1 246.4,549.1M228.6,549.1A6.8,4.1 0 0 1 242.3,549.1M243.9,666.8A17.1,10.3 0 0 1 278.1,666.8M248.7,666.8A12.3,7.4 0 0 1 273.3,666.8M253.3,666.8A7.7,4.6 0 0 1 268.7,666.8M217.9,561.1A19.1,11.4 0 0 1 256.0,561.1M223.2,561.1A13.7,8.2 0 0 1 250.6,561.1M228.3,561.1A8.6,5.1 0 0 1 245.5,561.1M272.2,647.2A11.3,6.8 0 0 1 294.7,647.2M275.3,647.2A8.1,4.9 0 0 1 291.6,647.2M278.4,647.2A5.1,3.0 0 0 1 288.5,647.2M253.7,641.4A14.9,8.9 0 0 1 283.4,641.4M257.8,641.4A10.7,6.4 0 0 1 279.2,641.4M261.8,641.4A6.7,4.0 0 0 1 275.2,641.4M248.8,677.2A12.6,7.6 0 0 1 274.0,677.2M252.3,677.2A9.1,5.4 0 0 1 270.5,677.2M255.7,677.2A5.7,3.4 0 0 1 267.1,677.2M238.9,676.4A12.4,7.4 0 0 1 263.7,676.4M242.4,676.4A8.9,5.3 0 0 1 260.2,676.4M245.7,676.4A5.6,3.3 0 0 1 256.9,676.4M219.1,557.6A8.4,5.0 0 0 1 235.9,557.6M221.5,557.6A6.0,3.6 0 0 1 233.6,557.6M223.8,557.6A3.8,2.3 0 0 1 231.3,557.6M206.7,664.5A19.7,11.8 0 0 1 246.1,664.5M212.2,664.5A14.2,8.5 0 0 1 240.6,664.5M217.5,664.5A8.9,5.3 0 0 1 235.2,664.5M267.5,616.7A21.5,12.9 0 0 1 310.5,616.7M273.5,616.7A15.5,9.3 0 0 1 304.5,616.7M279.3,616.7A9.7,5.8 0 0 1 298.7,616.7M204.9,638.8A7.4,4.4 0 0 1 219.6,638.8M206.9,638.8A5.3,3.2 0 0 1 217.5,638.8M208.9,638.8A3.3,2.0 0 0 1 215.5,638.8M202.1,581.5A19.4,11.6 0 0 1 240.9,581.5M207.6,581.5A13.9,8.4 0 0 1 235.5,581.5M212.8,581.5A8.7,5.2 0 0 1 230.2,581.5M194.9,628.5A11.5,6.9 0 0 1 218.0,628.5M198.2,628.5A8.3,5.0 0 0 1 214.8,628.5M201.3,628.5A5.2,3.1 0 0 1 211.7,628.5M205.2,560.1A9.7,5.8 0 0 1 224.7,560.1M208.0,560.1A7.0,4.2 0 0 1 222.0,560.1M210.6,560.1A4.4,2.6 0 0 1 219.4,560.1M214.7,636.0A10.9,6.5 0 0 1 236.4,636.0M217.7,636.0A7.8,4.7 0 0 1 233.4,636.0M220.7,636.0A4.9,2.9 0 0 1 230.4,636.0M210.3,587.3A14.6,8.8 0 0 1 239.5,587.3M214.4,587.3A10.5,6.3 0 0 1 235.4,587.3M218.3,587.3A6.6,3.9 0 0 1 231.4,587.3M257.4,561.9A12.7,7.6 0 0 1 282.8,561.9M260.9,561.9A9.2,5.5 0 0 1 279.3,561.9M264.4,561.9A5.7,3.4 0 0 1 275.8,561.9M233.9,625.1A20.6,12.4 0 0 1 275.1,625.1M239.6,625.1A14.9,8.9 0 0 1 269.3,625.1M245.2,625.1A9.3,5.6 0 0 1 263.8,625.1M254.1,650.5A12.1,7.3 0 0 1 278.3,650.5M257.5,650.5A8.7,5.2 0 0 1 274.9,650.5M260.7,650.5A5.5,3.3 0 0 1 271.7,650.5M255.4,575.3A9.0,5.4 0 0 1 273.4,575.3M257.9,575.3A6.5,3.9 0 0 1 270.9,575.3M260.3,575.3A4.0,2.4 0 0 1 268.4,575.3M265.6,593.7A12.4,7.4 0 0 1 290.4,593.7M269.1,593.7A8.9,5.4 0 0 1 286.9,593.7M272.4,593.7A5.6,3.4 0 0 1 283.6,593.7M247.4,577.8A35.9,21.6 0 0 1 302.1,570.7M208.3,586.6A24.1,14.4 0 0 1 244.0,580.0M253.9,543.2A20.5,12.3 0 0 1 289.2,543.5M240.6,555.2A34.0,20.4 0 0 1 301.9,554.7M239.8,560.7A23.2,13.9 0 0 1 281.3,555.9M236.6,591.9A29.4,17.7 0 0 1 259.3,591.4M234.0,615.5A27.6,16.6 0 0 1 282.8,618.6M230.7,619.5A38.6,23.2 0 0 1 289.9,605.2M232.3,600.7A24.3,14.6 0 0 1 268.8,602.6M191.2,564.9A31.5,18.9 0 0 1 248.1,558.8M207.2,584.3A27.2,16.3 0 0 1 257.2,585.3M226.4,624.3A35.5,21.3 0 0 1 279.6,633.7M216.5,551.9A28.5,17.1 0 0 1 259.9,553.4M237.7,591.6A34.9,20.9 0 0 1 289.1,577.9M258.4,580.5A29.2,17.5 0 0 1 295.5,586.6M195.9,593.3A39.5,23.7 0 0 1 231.7,594.2M253.3,632.6A21.2,12.7 0 0 1 284.8,638.0M241.8,615.1A25.1,15.1 0 0 1 280.1,619.9M197.1,605.4A38.2,22.9 0 0 1 231.6,605.0M210.0,528.2A38.0,22.8 0 0 1 258.6,521.2M539.1,459.5A12.9,7.7 0 0 1 564.9,459.5M542.7,459.5A9.3,5.6 0 0 1 561.3,459.5M546.2,459.5A5.8,3.5 0 0 1 557.8,459.5M545.1,386.1A16.8,10.1 0 0 1 578.6,386.1M549.8,386.1A12.1,7.3 0 0 1 573.9,386.1M554.3,386.1A7.6,4.5 0 0 1 569.4,386.1M627.2,471.4A19.7,11.8 0 0 1 666.7,471.4M632.7,471.4A14.2,8.5 0 0 1 661.2,471.4M638.1,471.4A8.9,5.3 0 0 1 655.8,471.4M597.5,377.6A18.8,11.3 0 0 1 635.0,377.6M602.7,377.6A13.5,8.1 0 0 1 629.7,377.6M607.8,377.6A8.4,5.1 0 0 1 624.7,377.6M561.4,364.1A21.6,13.0 0 0 1 604.6,364.1M567.5,364.1A15.5,9.3 0 0 1 598.6,364.1M573.3,364.1A9.7,5.8 0 0 1 592.7,364.1M601.1,425.4A7.5,4.5 0 0 1 616.2,425.4M603.2,425.4A5.4,3.3 0 0 1 614.1,425.4M605.2,425.4A3.4,2.0 0 0 1 612.0,425.4M594.4,502.3A9.0,5.4 0 0 1 612.4,502.3M596.9,502.3A6.5,3.9 0 0 1 609.9,502.3M599.3,502.3A4.1,2.4 0 0 1 607.5,502.3M658.8,465.7A11.5,6.9 0 0 1 681.7,465.7M662.0,465.7A8.3,5.0 0 0 1 678.5,465.7M665.1,465.7A5.2,3.1 0 0 1 675.4,465.7M642.9,408.0A13.4,8.0 0 0 1 669.6,408.0M646.7,408.0A9.6,5.8 0 0 1 665.9,408.0M650.3,408.0A6.0,3.6 0 0 1 662.3,408.0M630.7,386.8A10.8,6.5 0 0 1 652.2,386.8M633.7,386.8A7.8,4.7 0 0 1 649.2,386.8M636.6,386.8A4.9,2.9 0 0 1 646.3,386.8M638.0,398.6A8.0,4.8 0 0 1 653.9,398.6M640.3,398.6A5.7,3.4 0 0 1 651.7,398.6M642.4,398.6A3.6,2.1 0 0 1 649.6,398.6M543.0,422.7A20.3,12.2 0 0 1 583.6,422.7M548.7,422.7A14.6,8.8 0 0 1 577.9,422.7M554.1,422.7A9.1,5.5 0 0 1 572.4,422.7M615.4,491.5A12.1,7.2 0 0 1 639.6,491.5M618.8,491.5A8.7,5.2 0 0 1 636.2,491.5M622.1,491.5A5.4,3.3 0 0 1 633.0,491.5M571.7,422.3A12.9,7.7 0 0 1 597.5,422.3M575.3,422.3A9.3,5.6 0 0 1 593.9,422.3M578.8,422.3A5.8,3.5 0 0 1 590.4,422.3M571.3,365.5A8.4,5.0 0 0 1 588.1,365.5M573.6,365.5A6.0,3.6 0 0 1 585.7,365.5M575.9,365.5A3.8,2.3 0 0 1 583.5,365.5M583.2,500.7A18.2,10.9 0 0 1 619.6,500.7M588.3,500.7A13.1,7.9 0 0 1 614.5,500.7M593.3,500.7A8.2,4.9 0 0 1 609.6,500.7M577.7,518.8A11.7,7.0 0 0 1 601.0,518.8M581.0,518.8A8.4,5.0 0 0 1 597.7,518.8M584.1,518.8A5.2,3.1 0 0 1 594.6,518.8M557.5,427.5A17.3,10.4 0 0 1 592.1,427.5M562.3,427.5A12.5,7.5 0 0 1 587.2,427.5M567.0,427.5A7.8,4.7 0 0 1 582.6,427.5M628.5,507.2A10.1,6.1 0 0 1 648.8,507.2M631.4,507.2A7.3,4.4 0 0 1 646.0,507.2M634.1,507.2A4.6,2.7 0 0 1 643.2,507.2M568.4,526.9A16.7,10.0 0 0 1 601.8,526.9M573.1,526.9A12.0,7.2 0 0 1 597.2,526.9M577.6,526.9A7.5,4.5 0 0 1 592.7,526.9M602.4,535.0A12.3,7.4 0 0 1 627.1,535.0M605.9,535.0A8.9,5.3 0 0 1 623.6,535.0M609.2,535.0A5.5,3.3 0 0 1 620.3,535.0M529.4,460.0A17.7,10.6 0 0 1 564.8,460.0M534.4,460.0A12.7,7.6 0 0 1 559.8,460.0M539.2,460.0A8.0,4.8 0 0 1 555.1,460.0M586.4,386.9A18.1,10.9 0 0 1 622.6,386.9M591.5,386.9A13.0,7.8 0 0 1 617.5,386.9M596.4,386.9A8.1,4.9 0 0 1 612.7,386.9M635.9,429.5A12.2,7.3 0 0 1 660.4,429.5M639.3,429.5A8.8,5.3 0 0 1 657.0,429.5M642.6,429.5A5.5,3.3 0 0 1 653.7,429.5M531.0,443.7A17.5,10.5 0 0 1 566.0,443.7M535.9,443.7A12.6,7.6 0 0 1 561.1,443.7M540.6,443.7A7.9,4.7 0 0 1 556.4,443.7M650.3,428.4A16.7,10.0 0 0 1 683.8,428.4M655.0,428.4A12.0,7.2 0 0 1 679.1,428.4M659.5,428.4A7.5,4.5 0 0 1 674.6,428.4M609.1,365.2A18.9,11.3 0 0 1 646.8,365.2M614.3,365.2A13.6,8.2 0 0 1 641.5,365.2M619.4,365.2A8.5,5.1 0 0 1 636.4,365.2M637.6,494.8A20.0,12.0 0 0 1 677.6,494.8M643.2,494.8A14.4,8.6 0 0 1 672.0,494.8M648.6,494.8A9.0,5.4 0 0 1 666.6,494.8M641.0,483.8A10.6,6.4 0 0 1 662.3,483.8M644.0,483.8A7.7,4.6 0 0 1 659.3,483.8M646.8,483.8A4.8,2.9 0 0 1 656.4,483.8M650.6,416.0A16.5,9.9 0 0 1 683.6,416.0M655.2,416.0A11.9,7.1 0 0 1 679.0,416.0M659.7,416.0A7.4,4.5 0 0 1 674.6,416.0M565.4,393.1A8.8,5.3 0 0 1 583.0,393.1M567.9,393.1A6.3,3.8 0 0 1 580.6,393.1M570.2,393.1A4.0,2.4 0 0 1 578.2,393.1M527.5,447.2A11.5,6.9 0 0 1 550.5,447.2M530.7,447.2A8.3,5.0 0 0 1 547.3,447.2M533.8,447.2A5.2,3.1 0 0 1 544.2,447.2M560.1,484.2A21.0,12.6 0 0 1 602.1,484.2M566.0,484.2A15.1,9.1 0 0 1 596.2,484.2M571.7,484.2A9.4,5.7 0 0 1 590.5,484.2M542.9,493.2A10.8,6.5 0 0 1 564.5,493.2M545.9,493.2A7.8,4.7 0 0 1 561.4,493.2M548.8,493.2A4.9,2.9 0 0 1 558.5,493.2M562.0,443.2A21.2,12.7 0 0 1 604.4,443.2M568.0,443.2A15.3,9.2 0 0 1 598.5,443.2M573.7,443.2A9.5,5.7 0 0 1 592.8,443.2M638.7,524.8A9.5,5.7 0 0 1 657.7,524.8M641.3,524.8A6.9,4.1 0 0 1 655.0,524.8M643.9,524.8A4.3,2.6 0 0 1 652.5,524.8M547.0,455.3A12.7,7.6 0 0 1 572.3,455.3M550.5,455.3A9.1,5.5 0 0 1 568.8,455.3M553.9,455.3A5.7,3.4 0 0 1 565.4,455.3M559.4,484.2A13.2,7.9 0 0 1 585.9,484.2M563.1,484.2A9.5,5.7 0 0 1 582.1,484.2M566.7,484.2A6.0,3.6 0 0 1 578.6,484.2M578.8,411.0A7.7,4.6 0 0 1 594.1,411.0M580.9,411.0A5.5,3.3 0 0 1 592.0,411.0M583.0,411.0A3.5,2.1 0 0 1 589.9,411.0M642.4,481.8A15.2,9.1 0 0 1 672.9,481.8M646.7,481.8A11.0,6.6 0 0 1 668.6,481.8M650.8,481.8A6.9,4.1 0 0 1 664.5,481.8M618.8,533.2A9.0,5.4 0 0 1 636.7,533.2M621.3,533.2A6.4,3.9 0 0 1 634.2,533.2M623.7,533.2A4.0,2.4 0 0 1 631.8,533.2M565.7,418.2A15.8,9.5 0 0 1 597.3,418.2M570.1,418.2A11.4,6.8 0 0 1 592.9,418.2M574.4,418.2A7.1,4.3 0 0 1 588.6,418.2M636.8,509.9A13.3,8.0 0 0 1 663.5,509.9M640.5,509.9A9.6,5.8 0 0 1 659.8,509.9M644.1,509.9A6.0,3.6 0 0 1 656.2,509.9M606.1,451.9A16.3,9.8 0 0 1 638.7,451.9M610.6,451.9A11.7,7.0 0 0 1 634.1,451.9M615.0,451.9A7.3,4.4 0 0 1 629.7,451.9M525.4,502.0A12.2,7.3 0 0 1 549.7,502.0M528.8,502.0A8.8,5.3 0 0 1 546.3,502.0M532.1,502.0A5.5,3.3 0 0 1 543.0,502.0M618.5,505.4A18.6,11.2 0 0 1 655.7,505.4M623.7,505.4A13.4,8.0 0 0 1 650.5,505.4M628.7,505.4A8.4,5.0 0 0 1 645.5,505.4M552.5,458.3A8.9,5.4 0 0 1 570.4,458.3M555.0,458.3A6.4,3.9 0 0 1 567.9,458.3M557.4,458.3A4.0,2.4 0 0 1 565.5,458.3M610.3,536.1A13.1,7.9 0 0 1 636.5,536.1M613.9,536.1A9.4,5.7 0 0 1 632.8,536.1M617.5,536.1A5.9,3.5 0 0 1 629.3,536.1M557.6,401.0A7.4,4.5 0 0 1 572.5,401.0M559.7,401.0A5.4,3.2 0 0 1 570.4,401.0M561.7,401.0A3.3,2.0 0 0 1 568.4,401.0M619.2,433.9A19.5,11.7 0 0 1 658.2,433.9M624.6,433.9A14.0,8.4 0 0 1 652.7,433.9M629.9,433.9A8.8,5.3 0 0 1 647.5,433.9M552.2,381.9A18.0,10.8 0 0 1 588.1,381.9M557.2,381.9A12.9,7.8 0 0 1 583.1,381.9M562.1,381.9A8.1,4.9 0 0 1 578.3,381.9M629.8,517.8A13.6,8.2 0 0 1 657.0,517.8M633.6,517.8A9.8,5.9 0 0 1 653.2,517.8M637.3,517.8A6.1,3.7 0 0 1 649.5,517.8M582.0,371.5A21.8,13.1 0 0 1 625.7,371.5M588.1,371.5A15.7,9.4 0 0 1 619.6,371.5M594.0,371.5A9.8,5.9 0 0 1 613.7,371.5M576.0,429.4A8.7,5.2 0 0 1 593.4,429.4M578.4,429.4A6.3,3.8 0 0 1 590.9,429.4M580.8,429.4A3.9,2.3 0 0 1 588.6,429.4M579.6,512.3A10.4,6.3 0 0 1 600.4,512.3M582.5,512.3A7.5,4.5 0 0 1 597.5,512.3M585.3,512.3A4.7,2.8 0 0 1 594.7,512.3M535.0,475.7A20.5,12.3 0 0 1 576.0,475.7M540.7,475.7A14.8,8.9 0 0 1 570.3,475.7M546.3,475.7A9.2,5.5 0 0 1 564.7,475.7M591.6,359.9A18.0,10.8 0 0 1 627.7,359.9M596.7,359.9A13.0,7.8 0 0 1 622.7,359.9M601.5,359.9A8.1,4.9 0 0 1 617.8,359.9M592.3,446.2A20.5,12.3 0 0 1 633.3,446.2M598.1,446.2A14.7,8.8 0 0 1 627.5,446.2M603.6,446.2A9.2,5.5 0 0 1 622.0,446.2M558.2,505.8A13.0,7.8 0 0 1 584.2,505.8M561.8,505.8A9.4,5.6 0 0 1 580.5,505.8M565.3,505.8A5.8,3.5 0 0 1 577.0,505.8M613.4,373.0A10.5,6.3 0 0 1 634.4,373.0M616.3,373.0A7.6,4.5 0 0 1 631.4,373.0M619.1,373.0A4.7,2.8 0 0 1 628.6,373.0M653.8,487.2A7.6,4.6 0 0 1 669.0,487.2M655.9,487.2A5.5,3.3 0 0 1 666.9,487.2M658.0,487.2A3.4,2.1 0 0 1 664.8,487.2M622.2,521.3A20.8,12.5 0 0 1 663.8,521.3M628.0,521.3A15.0,9.0 0 0 1 657.9,521.3M633.6,521.3A9.4,5.6 0 0 1 652.3,521.3M605.8,421.2A17.7,10.6 0 0 1 641.1,421.2M610.8,421.2A12.7,7.6 0 0 1 636.2,421.2M615.5,421.2A8.0,4.8 0 0 1 631.4,421.2M528.8,474.9A12.3,7.4 0 0 1 553.4,474.9M532.3,474.9A8.8,5.3 0 0 1 549.9,474.9M535.6,474.9A5.5,3.3 0 0 1 546.6,474.9M517.4,405.6A21.9,13.2 0 0 1 561.2,405.6M523.5,405.6A15.8,9.5 0 0 1 555.1,405.6M529.4,405.6A9.9,5.9 0 0 1 549.2,405.6M588.9,476.2A10.1,6.0 0 0 1 609.0,476.2M591.7,476.2A7.3,4.4 0 0 1 606.2,476.2M594.4,476.2A4.5,2.7 0 0 1 603.5,476.2M591.4,530.9A8.7,5.2 0 0 1 608.9,530.9M593.9,530.9A6.3,3.8 0 0 1 606.4,530.9M596.2,530.9A3.9,2.4 0 0 1 604.1,530.9M575.1,493.7A14.3,8.6 0 0 1 603.6,493.7M579.1,493.7A10.3,6.2 0 0 1 599.6,493.7M582.9,493.7A6.4,3.8 0 0 1 595.8,493.7M558.6,460.7A15.5,9.3 0 0 1 589.6,460.7M562.9,460.7A11.1,6.7 0 0 1 585.2,460.7M567.1,460.7A7.0,4.2 0 0 1 581.0,460.7M606.9,451.6A15.8,9.5 0 0 1 638.5,451.6M611.4,451.6A11.4,6.8 0 0 1 634.1,451.6M615.6,451.6A7.1,4.3 0 0 1 629.8,451.6M587.4,544.4A11.6,7.0 0 0 1 610.7,544.4M590.7,544.4A8.4,5.0 0 0 1 607.4,544.4M593.8,544.4A5.2,3.1 0 0 1 604.3,544.4M578.7,438.9A11.0,6.6 0 0 1 600.7,438.9M581.8,438.9A7.9,4.7 0 0 1 597.6,438.9M584.7,438.9A4.9,3.0 0 0 1 594.6,438.9M518.1,428.6A7.8,4.7 0 0 1 533.7,428.6M520.3,428.6A5.6,3.4 0 0 1 531.5,428.6M522.4,428.6A3.5,2.1 0 0 1 529.4,428.6M631.6,459.1A9.5,5.7 0 0 1 650.6,459.1M634.3,459.1A6.8,4.1 0 0 1 647.9,459.1M636.8,459.1A4.3,2.6 0 0 1 645.4,459.1M596.5,359.1A15.7,9.4 0 0 1 627.8,359.1M600.8,359.1A11.3,6.8 0 0 1 623.5,359.1M605.1,359.1A7.1,4.2 0 0 1 619.2,359.1M572.2,400.4A16.8,10.1 0 0 1 605.7,400.4M576.9,400.4A12.1,7.3 0 0 1 601.0,400.4M581.4,400.4A7.6,4.5 0 0 1 596.5,400.4M519.0,469.2A10.3,6.2 0 0 1 539.6,469.2M521.8,469.2A7.4,4.5 0 0 1 536.7,469.2M524.6,469.2A4.6,2.8 0 0 1 533.9,469.2M622.8,398.1A9.6,5.8 0 0 1 642.0,398.1M625.5,398.1A6.9,4.2 0 0 1 639.4,398.1M628.1,398.1A4.3,2.6 0 0 1 636.8,398.1M571.5,538.3A14.1,8.5 0 0 1 599.6,538.3M575.4,538.3A10.1,6.1 0 0 1 595.7,538.3M579.2,538.3A6.3,3.8 0 0 1 591.9,538.3M503.1,467.1A20.7,12.4 0 0 1 544.6,467.1M508.9,467.1A14.9,9.0 0 0 1 538.7,467.1M514.5,467.1A9.3,5.6 0 0 1 533.1,467.1M601.0,400.4A8.7,5.2 0 0 1 618.4,400.4M603.4,400.4A6.3,3.8 0 0 1 616.0,400.4M605.8,400.4A3.9,2.4 0 0 1 613.6,400.4M635.1,472.1A16.3,9.8 0 0 1 667.7,472.1M639.7,472.1A11.7,7.0 0 0 1 663.2,472.1M644.1,472.1A7.3,4.4 0 0 1 658.8,472.1M608.8,424.1A20.0,12.0 0 0 1 648.8,424.1M614.4,424.1A14.4,8.6 0 0 1 643.2,424.1M619.8,424.1A9.0,5.4 0 0 1 637.8,424.1M541.3,405.0A19.7,11.8 0 0 1 580.7,405.0M546.8,405.0A14.2,8.5 0 0 1 575.2,405.0M552.1,405.0A8.9,5.3 0 0 1 569.9,405.0M655.8,454.4A16.9,10.2 0 0 1 689.7,454.4M660.6,454.4A12.2,7.3 0 0 1 684.9,454.4M665.1,454.4A7.6,4.6 0 0 1 680.4,454.4M609.4,480.3A16.4,9.8 0 0 1 642.2,480.3M614.0,480.3A11.8,7.1 0 0 1 637.6,480.3M618.4,480.3A7.4,4.4 0 0 1 633.2,480.3M550.5,387.8A16.8,10.1 0 0 1 584.1,387.8M555.2,387.8A12.1,7.3 0 0 1 579.4,387.8M559.7,387.8A7.6,4.5 0 0 1 574.9,387.8M538.2,466.6A18.0,10.8 0 0 1 574.3,466.6M543.3,466.6A13.0,7.8 0 0 1 569.3,466.6M548.1,466.6A8.1,4.9 0 0 1 564.4,466.6M566.9,372.2A20.6,12.3 0 0 1 608.1,372.2M572.7,372.2A14.8,8.9 0 0 1 602.3,372.2M578.3,372.2A9.3,5.6 0 0 1 596.8,372.2M649.4,474.7A12.6,7.6 0 0 1 674.6,474.7M652.9,474.7A9.1,5.4 0 0 1 671.0,474.7M656.3,474.7A5.7,3.4 0 0 1 667.6,474.7M508.3,461.8A18.9,11.4 0 0 1 546.2,461.8M513.6,461.8A13.6,8.2 0 0 1 540.9,461.8M518.7,461.8A8.5,5.1 0 0 1 535.7,461.8M598.2,525.7A21.5,12.9 0 0 1 641.2,525.7M604.2,525.7A15.5,9.3 0 0 1 635.2,525.7M610.0,525.7A9.7,5.8 0 0 1 629.4,525.7M640.4,491.9A16.2,9.7 0 0 1 672.9,491.9M644.9,491.9A11.7,7.0 0 0 1 668.3,491.9M649.3,491.9A7.3,4.4 0 0 1 663.9,491.9M598.9,513.3A19.0,11.4 0 0 1 637.0,513.3M604.3,513.3A13.7,8.2 0 0 1 631.7,513.3M609.4,513.3A8.6,5.1 0 0 1 626.5,513.3M569.3,460.2A19.0,11.4 0 0 1 607.3,460.2M574.6,460.2A13.7,8.2 0 0 1 602.0,460.2M579.8,460.2A8.5,5.1 0 0 1 596.8,460.2M533.6,503.3A19.8,11.9 0 0 1 573.1,503.3M539.1,503.3A14.3,8.6 0 0 1 567.6,503.3M544.4,503.3A8.9,5.3 0 0 1 562.3,503.3M552.9,511.9A12.8,7.7 0 0 1 578.6,511.9M556.5,511.9A9.2,5.5 0 0 1 575.0,511.9M560.0,511.9A5.8,3.5 0 0 1 571.5,511.9M598.2,375.6A19.4,11.6 0 0 1 636.9,375.6M603.7,375.6A13.9,8.4 0 0 1 631.5,375.6M608.9,375.6A8.7,5.2 0 0 1 626.3,375.6M553.3,433.5A17.6,10.6 0 0 1 588.5,433.5M558.2,433.5A12.7,7.6 0 0 1 583.6,433.5M563.0,433.5A7.9,4.8 0 0 1 578.8,433.5M583.7,448.4A13.0,7.8 0 0 1 609.6,448.4M587.3,448.4A9.3,5.6 0 0 1 606.0,448.4M590.8,448.4A5.8,3.5 0 0 1 602.5,448.4M548.3,397.8A10.8,6.5 0 0 1 569.9,397.8M551.3,397.8A7.8,4.7 0 0 1 566.8,397.8M554.2,397.8A4.9,2.9 0 0 1 563.9,397.8M554.8,388.1A12.7,7.6 0 0 1 580.1,388.1M558.4,388.1A9.1,5.5 0 0 1 576.6,388.1M561.8,388.1A5.7,3.4 0 0 1 573.2,388.1M562.2,442.5A20.7,12.4 0 0 1 603.7,442.5M568.0,442.5A14.9,9.0 0 0 1 597.9,442.5M573.6,442.5A9.3,5.6 0 0 1 592.2,442.5M580.4,512.4A8.6,5.1 0 0 1 597.5,512.4M582.8,512.4A6.2,3.7 0 0 1 595.1,512.4M585.1,512.4A3.9,2.3 0 0 1 592.8,512.4M656.4,439.0A15.6,9.4 0 0 1 687.6,439.0M660.8,439.0A11.2,6.7 0 0 1 683.2,439.0M665.0,439.0A7.0,4.2 0 0 1 679.0,439.0M564.0,506.7A9.6,5.7 0 0 1 583.2,506.7M566.7,506.7A6.9,4.1 0 0 1 580.5,506.7M569.3,506.7A4.3,2.6 0 0 1 577.9,506.7M643.3,416.0A15.2,9.1 0 0 1 673.7,416.0M647.6,416.0A10.9,6.6 0 0 1 669.5,416.0M651.7,416.0A6.8,4.1 0 0 1 665.4,416.0M544.9,394.3A13.8,8.3 0 0 1 572.5,394.3M548.8,394.3A9.9,6.0 0 0 1 568.6,394.3M552.5,394.3A6.2,3.7 0 0 1 564.9,394.3M625.7,487.6A17.1,10.3 0 0 1 660.0,487.6M630.5,487.6A12.3,7.4 0 0 1 655.2,487.6M635.1,487.6A7.7,4.6 0 0 1 650.5,487.6M578.9,534.0A9.0,5.4 0 0 1 597.0,534.0M581.4,534.0A6.5,3.9 0 0 1 594.4,534.0M583.9,534.0A4.1,2.4 0 0 1 592.0,534.0M600.1,420.0A11.5,6.9 0 0 1 623.1,420.0M603.3,420.0A8.3,5.0 0 0 1 619.9,420.0M606.4,420.0A5.2,3.1 0 0 1 616.8,420.0M519.8,494.7A18.5,11.1 0 0 1 556.7,494.7M524.9,494.7A13.3,8.0 0 0 1 551.5,494.7M529.9,494.7A8.3,5.0 0 0 1 546.5,494.7M593.9,530.5A25.1,15.0 0 0 1 638.4,534.5M639.1,495.3A32.2,19.3 0 0 1 671.3,491.3M524.9,382.6A26.7,16.0 0 0 1 562.5,372.6M610.8,473.1A36.0,21.6 0 0 1 669.7,462.7M537.1,473.1A29.6,17.8 0 0 1 574.1,469.7M605.7,370.1A25.7,15.4 0 0 1 638.0,376.5M614.6,520.4A30.7,18.4 0 0 1 657.4,514.4M615.1,461.8A24.4,14.6 0 0 1 659.6,465.7M549.6,417.9A26.2,15.7 0 0 1 581.2,412.8M513.4,449.9A38.0,22.8 0 0 1 576.4,451.4M561.4,403.0A30.5,18.3 0 0 1 600.1,398.0M669.6,453.6A20.0,12.0 0 0 1 691.7,455.0M641.7,484.7A32.5,19.5 0 0 1 698.4,488.2M566.5,374.6A33.8,20.3 0 0 1 602.7,373.1M566.0,344.4A33.1,19.9 0 0 1 616.0,356.1M598.5,372.6A30.4,18.2 0 0 1 640.7,377.2M605.1,447.8A24.0,14.4 0 0 1 630.3,447.8M551.0,522.4A20.8,12.5 0 0 1 581.0,517.8M645.3,465.4A25.1,15.0 0 0 1 681.3,462.2M648.8,479.2A21.0,12.6 0 0 1 685.5,478.8M548.7,494.7A25.3,15.2 0 0 1 582.2,493.0M578.8,445.3A18.3,11.0 0 0 1 609.4,447.9M652.1,436.0A29.5,17.7 0 0 1 696.6,439.7M569.4,346.9A25.6,15.3 0 0 1 612.7,349.3M568.4,473.9A37.8,22.7 0 0 1 640.8,471.0M597.4,420.5A34.6,20.8 0 0 1 647.6,413.1M646.9,428.4A34.8,20.9 0 0 1 708.6,435.5M495.6,404.7A33.9,20.3 0 0 1 559.0,401.0M608.6,369.6A31.7,19.0 0 0 1 668.9,367.2M547.9,464.5A22.6,13.6 0 0 1 589.3,464.2M657.7,481.4A18.4,11.0 0 0 1 678.6,480.8M531.0,438.4A37.8,22.7 0 0 1 593.5,430.4M538.1,403.3A22.8,13.7 0 0 1 579.9,405.5M589.8,438.7A38.0,22.8 0 0 1 639.7,446.9M496.7,462.8A27.1,16.3 0 0 1 541.9,454.5M505.6,431.2A37.5,22.5 0 0 1 576.5,428.7M508.4,430.9A27.1,16.3 0 0 1 548.9,425.9M636.1,663.2A16.0,9.6 0 0 1 668.1,663.2M640.6,663.2A11.5,6.9 0 0 1 663.6,663.2M644.9,663.2A7.2,4.3 0 0 1 659.3,663.2M648.6,657.7A15.0,9.0 0 0 1 678.6,657.7M652.8,657.7A10.8,6.5 0 0 1 674.4,657.7M656.8,657.7A6.7,4.0 0 0 1 670.3,657.7M632.4,548.8A17.1,10.3 0 0 1 666.6,548.8M637.2,548.8A12.3,7.4 0 0 1 661.9,548.8M641.8,548.8A7.7,4.6 0 0 1 657.2,548.8M648.4,541.4A15.5,9.3 0 0 1 679.4,541.4M652.8,541.4A11.2,6.7 0 0 1 675.1,541.4M656.9,541.4A7.0,4.2 0 0 1 670.9,541.4M632.2,628.4A9.9,5.9 0 0 1 652.0,628.4M635.0,628.4A7.1,4.3 0 0 1 649.2,628.4M637.7,628.4A4.4,2.7 0 0 1 646.6,628.4M648.5,567.2A13.4,8.1 0 0 1 675.4,567.2M652.3,567.2A9.7,5.8 0 0 1 671.6,567.2M655.9,567.2A6.1,3.6 0 0 1 668.0,567.2M650.2,665.4A13.3,8.0 0 0 1 676.7,665.4M653.9,665.4A9.5,5.7 0 0 1 673.0,665.4M657.5,665.4A6.0,3.6 0 0 1 669.4,665.4M614.7,556.4A19.9,11.9 0 0 1 654.5,556.4M620.3,556.4A14.3,8.6 0 0 1 648.9,556.4M625.7,556.4A8.9,5.4 0 0 1 643.6,556.4M659.1,613.8A8.8,5.3 0 0 1 676.6,613.8M661.5,613.8A6.3,3.8 0 0 1 674.2,613.8M663.9,613.8A4.0,2.4 0 0 1 671.8,613.8M657.7,658.9A11.8,7.1 0 0 1 681.4,658.9M661.1,658.9A8.5,5.1 0 0 1 678.1,658.9M664.3,658.9A5.3,3.2 0 0 1 674.9,658.9M646.1,566.3A9.6,5.7 0 0 1 665.2,566.3M648.7,566.3A6.9,4.1 0 0 1 662.5,566.3M651.3,566.3A4.3,2.6 0 0 1 660.0,566.3M663.2,589.4A11.3,6.8 0 0 1 685.8,589.4M666.4,589.4A8.1,4.9 0 0 1 682.7,589.4M669.4,589.4A5.1,3.1 0 0 1 679.6,589.4M653.5,629.2A16.2,9.7 0 0 1 685.9,629.2M658.0,629.2A11.7,7.0 0 0 1 681.4,629.2M662.4,629.2A7.3,4.4 0 0 1 677.0,629.2M650.1,536.2A15.6,9.3 0 0 1 681.2,536.2M654.4,536.2A11.2,6.7 0 0 1 676.8,536.2M658.6,536.2A7.0,4.2 0 0 1 672.6,536.2M638.9,587.1A18.4,11.0 0 0 1 675.7,587.1M644.1,587.1A13.2,7.9 0 0 1 670.6,587.1M649.0,587.1A8.3,5.0 0 0 1 665.6,587.1M640.7,585.2A15.7,9.4 0 0 1 672.2,585.2M645.1,585.2A11.3,6.8 0 0 1 667.8,585.2M649.4,585.2A7.1,4.2 0 0 1 663.5,585.2M623.7,648.8A9.5,5.7 0 0 1 642.6,648.8M626.3,648.8A6.8,4.1 0 0 1 640.0,648.8M628.9,648.8A4.3,2.6 0 0 1 637.4,648.8M618.6,584.6A13.2,7.9 0 0 1 645.0,584.6M622.3,584.6A9.5,5.7 0 0 1 641.3,584.6M625.9,584.6A5.9,3.6 0 0 1 637.7,584.6M640.3,583.7A12.5,7.5 0 0 1 665.3,583.7M643.8,583.7A9.0,5.4 0 0 1 661.8,583.7M647.1,583.7A5.6,3.4 0 0 1 658.4,583.7M643.9,559.3A15.4,9.3 0 0 1 674.7,559.3M648.2,559.3A11.1,6.7 0 0 1 670.4,559.3M652.3,559.3A6.9,4.2 0 0 1 666.2,559.3M628.7,539.9A13.9,8.4 0 0 1 656.6,539.9M632.6,539.9A10.0,6.0 0 0 1 652.7,539.9M636.3,539.9A6.3,3.8 0 0 1 648.9,539.9M656.4,614.3A10.7,6.4 0 0 1 677.9,614.3M659.4,614.3A7.7,4.6 0 0 1 674.9,614.3M662.3,614.3A4.8,2.9 0 0 1 672.0,614.3M627.0,605.7A15.6,9.3 0 0 1 658.1,605.7M631.4,605.7A11.2,6.7 0 0 1 653.8,605.7M635.6,605.7A7.0,4.2 0 0 1 649.6,605.7M652.9,627.4A14.5,8.7 0 0 1 681.8,627.4M657.0,627.4A10.4,6.2 0 0 1 677.8,627.4M660.9,627.4A6.5,3.9 0 0 1 673.9,627.4M655.2,657.5A13.0,7.8 0 0 1 681.2,657.5M658.8,657.5A9.4,5.6 0 0 1 677.6,657.5M662.3,657.5A5.8,3.5 0 0 1 674.0,657.5M620.8,580.2A12.2,7.3 0 0 1 645.2,580.2M624.2,580.2A8.8,5.3 0 0 1 641.8,580.2M627.5,580.2A5.5,3.3 0 0 1 638.5,580.2M647.6,560.0A20.7,12.4 0 0 1 689.0,560.0M653.4,560.0A14.9,8.9 0 0 1 683.2,560.0M659.0,560.0A9.3,5.6 0 0 1 677.6,560.0M663.4,653.4A8.9,5.3 0 0 1 681.2,653.4M665.9,653.4A6.4,3.8 0 0 1 678.7,653.4M668.3,653.4A4.0,2.4 0 0 1 676.3,653.4M624.7,652.1A12.4,7.4 0 0 1 649.5,652.1M628.2,652.1A8.9,5.4 0 0 1 646.0,652.1M631.5,652.1A5.6,3.3 0 0 1 642.7,652.1M625.6,621.8A15.0,9.0 0 0 1 655.7,621.8M629.8,621.8A10.8,6.5 0 0 1 651.5,621.8M633.9,621.8A6.8,4.1 0 0 1 647.4,621.8M658.1,659.8A9.5,5.7 0 0 1 677.2,659.8M660.8,659.8A6.9,4.1 0 0 1 674.5,659.8M663.4,659.8A4.3,2.6 0 0 1 672.0,659.8M634.9,602.9A7.6,4.6 0 0 1 650.2,602.9M637.1,602.9A5.5,3.3 0 0 1 648.1,602.9M639.1,602.9A3.4,2.1 0 0 1 646.0,602.9M629.2,665.1A17.0,10.2 0 0 1 663.1,665.1M634.0,665.1A12.2,7.3 0 0 1 658.4,665.1M638.5,665.1A7.6,4.6 0 0 1 653.8,665.1M619.0,633.0A15.3,9.2 0 0 1 649.6,633.0M623.3,633.0A11.0,6.6 0 0 1 645.3,633.0M627.4,633.0A6.9,4.1 0 0 1 641.2,633.0M641.1,659.6A17.3,10.4 0 0 1 675.8,659.6M645.9,659.6A12.5,7.5 0 0 1 670.9,659.6M650.6,659.6A7.8,4.7 0 0 1 666.2,659.6M642.6,601.3A9.8,5.9 0 0 1 662.1,601.3M645.3,601.3A7.0,4.2 0 0 1 659.4,601.3M648.0,601.3A4.4,2.6 0 0 1 656.7,601.3M646.5,544.5A17.3,10.4 0 0 1 681.0,544.5M651.3,544.5A12.4,7.5 0 0 1 676.2,544.5M656.0,544.5A7.8,4.7 0 0 1 671.5,544.5M660.6,584.6A38.0,22.8 0 0 1 697.1,586.0M634.1,597.2A32.0,19.2 0 0 1 676.0,588.2M615.4,581.4A35.3,21.2 0 0 1 663.2,576.9M661.1,598.7A32.0,19.2 0 0 1 699.1,600.4M636.9,584.9A38.2,22.9 0 0 1 674.7,582.9M632.2,599.2A34.5,20.7 0 0 1 692.8,597.2M648.5,573.1A25.1,15.1 0 0 1 678.2,576.1M640.0,625.6A20.7,12.4 0 0 1 672.8,619.7M641.0,550.6A20.2,12.1 0 0 1 672.8,548.6M614.5,614.4A33.0,19.8 0 0 1 658.9,617.7M658.1,606.2A35.2,21.1 0 0 1 703.6,607.9M637.6,579.1A34.3,20.6 0 0 1 691.0,583.2M635.5,701.3A7.5,4.5 0 0 1 650.4,701.3M637.6,701.3A5.4,3.2 0 0 1 648.3,701.3M639.6,701.3A3.4,2.0 0 0 1 646.3,701.3M278.5,687.8A9.7,5.8 0 0 1 297.8,687.8M281.2,687.8A7.0,4.2 0 0 1 295.1,687.8M283.8,687.8A4.4,2.6 0 0 1 292.5,687.8M541.3,681.9A13.7,8.2 0 0 1 568.6,681.9M545.1,681.9A9.8,5.9 0 0 1 564.8,681.9M548.8,681.9A6.2,3.7 0 0 1 561.1,681.9M268.5,680.2A18.1,10.9 0 0 1 304.7,680.2M273.6,680.2A13.0,7.8 0 0 1 299.7,680.2M278.5,680.2A8.2,4.9 0 0 1 294.8,680.2M309.9,706.6A21.6,13.0 0 0 1 353.1,706.6M316.0,706.6A15.5,9.3 0 0 1 347.1,706.6M321.8,706.6A9.7,5.8 0 0 1 341.3,706.6M448.6,697.0A11.9,7.2 0 0 1 472.5,697.0M452.0,697.0A8.6,5.2 0 0 1 469.2,697.0M455.2,697.0A5.4,3.2 0 0 1 465.9,697.0M412.8,714.6A10.8,6.5 0 0 1 434.5,714.6M415.8,714.6A7.8,4.7 0 0 1 431.5,714.6M418.8,714.6A4.9,2.9 0 0 1 428.5,714.6M290.0,675.3A10.1,6.0 0 0 1 310.1,675.3M292.8,675.3A7.3,4.4 0 0 1 307.3,675.3M295.5,675.3A4.5,2.7 0 0 1 304.6,675.3M430.5,694.7A17.2,10.3 0 0 1 465.0,694.7M435.3,694.7A12.4,7.4 0 0 1 460.2,694.7M440.0,694.7A7.8,4.7 0 0 1 455.5,694.7M305.2,675.7A15.0,9.0 0 0 1 335.1,675.7M309.4,675.7A10.8,6.5 0 0 1 330.9,675.7M313.4,675.7A6.7,4.0 0 0 1 326.9,675.7M585.7,694.7A14.4,8.6 0 0 1 614.4,694.7M589.7,694.7A10.3,6.2 0 0 1 610.4,694.7M593.6,694.7A6.5,3.9 0 0 1 606.5,694.7M626.8,691.7A11.9,7.1 0 0 1 650.5,691.7M630.1,691.7A8.5,5.1 0 0 1 647.2,691.7M633.3,691.7A5.3,3.2 0 0 1 644.0,691.7M464.7,703.7A20.5,12.3 0 0 1 505.6,703.7M470.4,703.7A14.7,8.8 0 0 1 499.9,703.7M476.0,703.7A9.2,5.5 0 0 1 494.4,703.7M305.0,700.8A17.7,10.6 0 0 1 340.4,700.8M310.0,700.8A12.7,7.6 0 0 1 335.4,700.8M314.7,700.8A8.0,4.8 0 0 1 330.7,700.8M372.8,679.4A17.2,10.3 0 0 1 407.3,679.4M377.7,679.4A12.4,7.4 0 0 1 402.5,679.4M382.3,679.4A7.7,4.6 0 0 1 397.8,679.4M462.0,696.4A8.5,5.1 0 0 1 479.1,696.4M464.4,696.4A6.1,3.7 0 0 1 476.7,696.4M466.7,696.4A3.8,2.3 0 0 1 474.4,696.4M242.9,695.5A21.6,13.0 0 0 1 286.2,695.5M249.0,695.5A15.6,9.3 0 0 1 280.1,695.5M254.8,695.5A9.7,5.8 0 0 1 274.3,695.5M463.5,662.6A11.6,7.0 0 0 1 486.8,662.6M466.8,662.6A8.4,5.0 0 0 1 483.6,662.6M469.9,662.6A5.2,3.1 0 0 1 480.4,662.6M278.9,694.9A17.3,10.4 0 0 1 313.5,694.9M283.7,694.9A12.5,7.5 0 0 1 308.6,694.9M288.4,694.9A7.8,4.7 0 0 1 304.0,694.9M410.2,700.7A12.1,7.3 0 0 1 434.4,700.7M413.6,700.7A8.7,5.2 0 0 1 431.0,700.7M416.9,700.7A5.4,3.3 0 0 1 427.8,700.7M476.0,704.1A20.3,12.2 0 0 1 516.5,704.1M481.7,704.1A14.6,8.8 0 0 1 510.9,704.1M487.2,704.1A9.1,5.5 0 0 1 505.4,704.1M561.5,706.2A12.3,7.4 0 0 1 586.1,706.2M564.9,706.2A8.9,5.3 0 0 1 582.7,706.2M568.2,706.2A5.5,3.3 0 0 1 579.3,706.2M375.0,695.9A18.1,10.8 0 0 1 411.2,695.9M380.1,695.9A13.0,7.8 0 0 1 406.1,695.9M385.0,695.9A8.1,4.9 0 0 1 401.2,695.9M449.1,689.9A15.7,9.4 0 0 1 480.4,689.9M453.5,689.9A11.3,6.8 0 0 1 476.0,689.9M457.7,689.9A7.0,4.2 0 0 1 471.8,689.9M271.7,699.5A10.6,6.4 0 0 1 293.0,699.5M274.7,699.5A7.7,4.6 0 0 1 290.0,699.5M277.6,699.5A4.8,2.9 0 0 1 287.2,699.5M544.8,705.7A13.6,8.1 0 0 1 571.9,705.7M548.5,705.7A9.8,5.9 0 0 1 568.1,705.7M552.2,705.7A6.1,3.7 0 0 1 564.4,705.7M451.7,707.5A15.0,9.0 0 0 1 481.6,707.5M455.9,707.5A10.8,6.5 0 0 1 477.4,707.5M459.9,707.5A6.7,4.0 0 0 1 473.4,707.5M295.7,672.7A12.0,7.2 0 0 1 319.7,672.7M299.1,672.7A8.6,5.2 0 0 1 316.4,672.7M302.3,672.7A5.4,3.2 0 0 1 313.1,672.7M548.6,709.5A15.0,9.0 0 0 1 578.6,709.5M552.8,709.5A10.8,6.5 0 0 1 574.4,709.5M556.8,709.5A6.7,4.0 0 0 1 570.3,709.5M529.6,712.2A17.2,10.3 0 0 1 564.0,712.2M534.4,712.2A12.4,7.4 0 0 1 559.2,712.2M539.1,712.2A7.7,4.6 0 0 1 554.5,712.2M575.2,711.5A10.8,6.5 0 0 1 596.8,711.5M578.2,711.5A7.8,4.7 0 0 1 593.7,711.5M581.1,711.5A4.9,2.9 0 0 1 590.8,711.5M454.5,717.0A16.5,9.9 0 0 1 487.5,717.0M459.2,717.0A11.9,7.1 0 0 1 482.9,717.0M463.6,717.0A7.4,4.4 0 0 1 478.4,717.0M279.7,702.2A14.0,8.4 0 0 1 307.8,702.2M283.6,702.2A10.1,6.1 0 0 1 303.8,702.2M287.4,702.2A6.3,3.8 0 0 1 300.1,702.2M554.9,710.7A8.0,4.8 0 0 1 570.8,710.7M557.1,710.7A5.8,3.5 0 0 1 568.6,710.7M559.3,710.7A3.6,2.2 0 0 1 566.4,710.7M575.1,679.8A9.5,5.7 0 0 1 594.0,679.8M577.8,679.8A6.8,4.1 0 0 1 591.4,679.8M580.3,679.8A4.3,2.6 0 0 1 588.8,679.8M552.6,708.0A12.4,7.5 0 0 1 577.4,708.0M556.0,708.0A9.0,5.4 0 0 1 574.0,708.0M559.4,708.0A5.6,3.4 0 0 1 570.6,708.0M365.8,703.5A17.2,10.3 0 0 1 400.1,703.5M370.6,703.5A12.3,7.4 0 0 1 395.3,703.5M375.3,703.5A7.7,4.6 0 0 1 390.7,703.5M366.3,688.4A9.6,5.7 0 0 1 385.5,688.4M369.0,688.4A6.9,4.1 0 0 1 382.8,688.4M371.6,688.4A4.3,2.6 0 0 1 380.2,688.4M455.6,662.3A15.6,9.4 0 0 1 486.8,662.3M459.9,662.3A11.2,6.7 0 0 1 482.4,662.3M464.1,662.3A7.0,4.2 0 0 1 478.2,662.3M358.4,671.5A19.1,11.5 0 0 1 396.6,671.5M363.7,671.5A13.8,8.3 0 0 1 391.2,671.5M368.9,671.5A8.6,5.2 0 0 1 386.1,671.5M505.6,702.8A12.8,7.7 0 0 1 531.2,702.8M509.2,702.8A9.2,5.5 0 0 1 527.6,702.8M512.7,702.8A5.7,3.4 0 0 1 524.2,702.8M513.8,668.5A20.4,12.2 0 0 1 554.5,668.5M519.5,668.5A14.7,8.8 0 0 1 548.8,668.5M525.0,668.5A9.2,5.5 0 0 1 543.3,668.5M644.1,687.4A9.8,5.9 0 0 1 663.7,687.4M646.9,687.4A7.0,4.2 0 0 1 660.9,687.4M649.5,687.4A4.4,2.6 0 0 1 658.3,687.4M395.3,701.5A21.1,12.6 0 0 1 437.4,701.5M401.2,701.5A15.2,9.1 0 0 1 431.5,701.5M406.9,701.5A9.5,5.7 0 0 1 425.8,701.5M555.0,674.1A7.9,4.7 0 0 1 570.8,674.1M557.2,674.1A5.7,3.4 0 0 1 568.6,674.1M559.4,674.1A3.6,2.1 0 0 1 566.5,674.1M461.4,674.5A11.4,6.8 0 0 1 484.2,674.5M464.6,674.5A8.2,4.9 0 0 1 481.0,674.5M467.7,674.5A5.1,3.1 0 0 1 477.9,674.5M236.8,694.4A7.3,4.4 0 0 1 251.3,694.4M238.8,694.4A5.2,3.1 0 0 1 249.3,694.4M240.8,694.4A3.3,2.0 0 0 1 247.3,694.4M337.3,681.3A20.5,12.3 0 0 1 378.3,681.3M343.0,681.3A14.7,8.8 0 0 1 372.5,681.3M348.6,681.3A9.2,5.5 0 0 1 367.0,681.3M581.0,686.8A13.2,7.9 0 0 1 607.4,686.8M584.7,686.8A9.5,5.7 0 0 1 603.7,686.8M588.2,686.8A5.9,3.6 0 0 1 600.1,686.8M535.4,679.3A12.0,7.2 0 0 1 559.4,679.3M538.8,679.3A8.6,5.2 0 0 1 556.0,679.3M542.0,679.3A5.4,3.2 0 0 1 552.8,679.3M631.5,693.4A13.9,8.3 0 0 1 659.2,693.4M635.4,693.4A10.0,6.0 0 0 1 655.3,693.4M639.1,693.4A6.2,3.7 0 0 1 651.6,693.4M302.6,671.3A17.6,10.5 0 0 1 337.7,671.3M307.5,671.3A12.7,7.6 0 0 1 332.8,671.3M312.2,671.3A7.9,4.7 0 0 1 328.1,671.3M400.6,705.5A15.0,9.0 0 0 1 430.6,705.5M404.8,705.5A10.8,6.5 0 0 1 426.4,705.5M408.9,705.5A6.7,4.0 0 0 1 422.4,705.5M597.4,691.1A19.7,11.8 0 0 1 636.7,691.1M602.9,691.1A14.2,8.5 0 0 1 631.2,691.1M608.2,691.1A8.8,5.3 0 0 1 625.9,691.1M326.7,703.1A14.7,8.8 0 0 1 356.1,703.1M330.8,703.1A10.6,6.4 0 0 1 352.0,703.1M334.8,703.1A6.6,4.0 0 0 1 348.0,703.1M605.2,701.3A15.3,9.2 0 0 1 635.7,701.3M609.5,701.3A11.0,6.6 0 0 1 631.5,701.3M613.6,701.3A6.9,4.1 0 0 1 627.3,701.3M548.4,681.1A18.6,11.2 0 0 1 585.7,681.1M553.7,681.1A13.4,8.0 0 0 1 580.5,681.1M558.7,681.1A8.4,5.0 0 0 1 575.4,681.1M349.5,686.4A11.1,6.7 0 0 1 371.7,686.4M352.6,686.4A8.0,4.8 0 0 1 368.6,686.4M355.6,686.4A5.0,3.0 0 0 1 365.6,686.4M552.4,709.2A13.8,8.3 0 0 1 580.0,709.2M556.3,709.2A9.9,5.9 0 0 1 576.1,709.2M560.0,709.2A6.2,3.7 0 0 1 572.4,709.2M347.7,683.2A13.6,8.1 0 0 1 374.9,683.2M351.5,683.2A9.8,5.9 0 0 1 371.1,683.2M355.2,683.2A6.1,3.7 0 0 1 367.4,683.2M327.6,677.9A18.1,10.9 0 0 1 363.9,677.9M332.7,677.9A13.1,7.8 0 0 1 358.8,677.9M337.6,677.9A8.2,4.9 0 0 1 353.9,677.9M585.2,685.2A21.5,12.9 0 0 1 628.2,685.2M591.2,685.2A15.5,9.3 0 0 1 622.1,685.2M597.0,685.2A9.7,5.8 0 0 1 616.3,685.2M389.2,681.5A16.6,10.0 0 0 1 422.4,681.5M393.8,681.5A12.0,7.2 0 0 1 417.7,681.5M398.3,681.5A7.5,4.5 0 0 1 413.3,681.5M395.2,676.1A21.9,13.1 0 0 1 439.0,676.1M401.4,676.1A15.8,9.5 0 0 1 432.9,676.1M407.3,676.1A9.9,5.9 0 0 1 427.0,676.1M548.9,690.0A14.2,8.5 0 0 1 577.2,690.0M552.8,690.0A10.2,6.1 0 0 1 573.2,690.0M556.7,690.0A6.4,3.8 0 0 1 569.4,690.0M424.7,707.8A16.9,10.2 0 0 1 458.5,707.8M429.4,707.8A12.2,7.3 0 0 1 453.8,707.8M434.0,707.8A7.6,4.6 0 0 1 449.2,707.8M567.0,679.6A21.4,12.9 0 0 1 609.8,679.6M573.0,679.6A15.4,9.3 0 0 1 603.8,679.6M578.7,679.6A9.6,5.8 0 0 1 598.0,679.6M296.9,674.6A8.2,4.9 0 0 1 313.4,674.6M299.2,674.6A5.9,3.6 0 0 1 311.1,674.6M301.4,674.6A3.7,2.2 0 0 1 308.9,674.6M497.0,670.9A20.9,12.5 0 0 1 538.7,670.9M502.9,670.9A15.0,9.0 0 0 1 532.9,670.9M508.5,670.9A9.4,5.6 0 0 1 527.3,670.9M305.7,708.7A14.8,8.9 0 0 1 335.3,708.7M309.9,708.7A10.6,6.4 0 0 1 331.2,708.7M313.9,708.7A6.7,4.0 0 0 1 327.2,708.7M610.3,688.3A18.7,11.2 0 0 1 647.6,688.3M615.5,688.3A13.4,8.1 0 0 1 642.4,688.3M620.5,688.3A8.4,5.0 0 0 1 637.3,688.3M454.6,695.2A8.1,4.9 0 0 1 470.9,695.2M456.9,695.2A5.9,3.5 0 0 1 468.6,695.2M459.1,695.2A3.7,2.2 0 0 1 466.4,695.2M569.4,686.0A20.9,12.5 0 0 1 611.1,686.0M575.3,686.0A15.0,9.0 0 0 1 605.3,686.0M580.9,686.0A9.4,5.6 0 0 1 599.7,686.0M516.4,703.9A19.7,11.8 0 0 1 555.7,703.9M521.9,703.9A14.2,8.5 0 0 1 550.2,703.9M527.2,703.9A8.8,5.3 0 0 1 544.9,703.9M302.5,685.9A18.8,11.3 0 0 1 340.1,685.9M307.7,685.9A13.5,8.1 0 0 1 334.8,685.9M312.8,685.9A8.5,5.1 0 0 1 329.8,685.9M381.7,713.1A8.2,4.9 0 0 1 398.2,713.1M384.0,713.1A5.9,3.6 0 0 1 395.9,713.1M386.2,713.1A3.7,2.2 0 0 1 393.7,713.1M497.4,687.4A18.7,11.2 0 0 1 534.8,687.4M502.6,687.4A13.5,8.1 0 0 1 529.6,687.4M507.7,687.4A8.4,5.1 0 0 1 524.5,687.4M510.3,700.7A22.0,13.2 0 0 1 554.3,700.7M516.4,700.7A15.8,9.5 0 0 1 548.1,700.7M522.4,700.7A9.9,5.9 0 0 1 542.2,700.7M302.7,695.0A9.7,5.8 0 0 1 322.0,695.0M305.4,695.0A7.0,4.2 0 0 1 319.3,695.0M308.0,695.0A4.3,2.6 0 0 1 316.7,695.0M452.2,716.5A15.1,9.1 0 0 1 482.5,716.5M456.5,716.5A10.9,6.5 0 0 1 478.3,716.5M460.5,716.5A6.8,4.1 0 0 1 474.2,716.5M423.6,667.0A19.1,11.5 0 0 1 461.9,667.0M429.0,667.0A13.8,8.3 0 0 1 456.5,667.0M434.2,667.0A8.6,5.2 0 0 1 451.4,667.0M476.6,696.5A13.8,8.3 0 0 1 504.2,696.5M480.5,696.5A9.9,6.0 0 0 1 500.4,696.5M484.2,696.5A6.2,3.7 0 0 1 496.6,696.5M259.8,675.3A14.7,8.8 0 0 1 289.2,675.3M263.9,675.3A10.6,6.4 0 0 1 285.1,675.3M267.9,675.3A6.6,4.0 0 0 1 281.1,675.3M548.3,703.7A18.1,10.9 0 0 1 584.6,703.7M553.4,703.7A13.1,7.8 0 0 1 579.5,703.7M558.3,703.7A8.2,4.9 0 0 1 574.6,703.7M435.3,670.9A20.1,12.1 0 0 1 475.5,670.9M440.9,670.9A14.5,8.7 0 0 1 469.9,670.9M446.3,670.9A9.1,5.4 0 0 1 464.5,670.9M431.3,688.7A14.4,8.6 0 0 1 460.0,688.7M435.3,688.7A10.3,6.2 0 0 1 456.0,688.7M439.2,688.7A6.5,3.9 0 0 1 452.1,688.7M461.9,704.9A15.6,9.4 0 0 1 493.1,704.9M466.3,704.9A11.2,6.7 0 0 1 488.7,704.9M470.5,704.9A7.0,4.2 0 0 1 484.5,704.9M407.9,672.9A10.3,6.2 0 0 1 428.5,672.9M410.8,672.9A7.4,4.4 0 0 1 425.6,672.9M413.6,672.9A4.6,2.8 0 0 1 422.8,672.9M375.0,676.2A8.8,5.3 0 0 1 392.7,676.2M377.5,676.2A6.4,3.8 0 0 1 390.2,676.2M379.9,676.2A4.0,2.4 0 0 1 387.8,676.2M459.2,670.1A11.6,7.0 0 0 1 482.5,670.1M462.5,670.1A8.4,5.0 0 0 1 479.2,670.1M465.6,670.1A5.2,3.1 0 0 1 476.1,670.1M471.9,714.6A9.4,5.6 0 0 1 490.7,714.6M474.6,714.6A6.8,4.1 0 0 1 488.1,714.6M477.1,714.6A4.2,2.5 0 0 1 485.5,714.6M422.5,672.4A9.8,5.9 0 0 1 442.2,672.4M425.3,672.4A7.1,4.2 0 0 1 439.4,672.4M427.9,672.4A4.4,2.7 0 0 1 436.8,672.4M510.2,687.2A10.7,6.4 0 0 1 531.5,687.2M513.2,687.2A7.7,4.6 0 0 1 528.5,687.2M516.1,687.2A4.8,2.9 0 0 1 525.7,687.2M400.3,663.1A15.4,9.2 0 0 1 431.0,663.1M404.6,663.1A11.1,6.6 0 0 1 426.7,663.1M408.8,663.1A6.9,4.1 0 0 1 422.6,663.1M589.1,685.2A21.4,12.8 0 0 1 631.9,685.2M595.1,685.2A15.4,9.2 0 0 1 625.9,685.2M600.9,685.2A9.6,5.8 0 0 1 620.1,685.2M473.7,695.9A11.0,6.6 0 0 1 495.7,695.9M476.8,695.9A7.9,4.8 0 0 1 492.6,695.9M479.7,695.9A5.0,3.0 0 0 1 489.6,695.9M451.4,670.9A11.0,6.6 0 0 1 473.5,670.9M454.5,670.9A7.9,4.8 0 0 1 470.4,670.9M457.5,670.9A5.0,3.0 0 0 1 467.4,670.9M282.9,679.9A19.3,11.6 0 0 1 321.5,679.9M288.3,679.9A13.9,8.3 0 0 1 316.1,679.9M293.5,679.9A8.7,5.2 0 0 1 310.9,679.9M451.7,717.3A9.4,5.7 0 0 1 470.5,717.3M454.3,717.3A6.8,4.1 0 0 1 467.9,717.3M456.9,717.3A4.2,2.5 0 0 1 465.3,717.3M342.2,672.8A10.4,6.3 0 0 1 363.1,672.8M345.1,672.8A7.5,4.5 0 0 1 360.1,672.8M347.9,672.8A4.7,2.8 0 0 1 357.3,672.8M549.0,701.3A21.2,12.7 0 0 1 591.4,701.3M555.0,701.3A15.3,9.2 0 0 1 585.5,701.3M560.7,701.3A9.5,5.7 0 0 1 579.8,701.3M280.9,674.9A16.9,10.2 0 0 1 314.8,674.9M285.6,674.9A12.2,7.3 0 0 1 310.0,674.9M290.2,674.9A7.6,4.6 0 0 1 305.4,674.9M539.9,673.0A15.9,9.6 0 0 1 571.8,673.0M544.4,673.0A11.5,6.9 0 0 1 567.4,673.0M548.7,673.0A7.2,4.3 0 0 1 563.1,673.0M322.3,684.2A13.3,8.0 0 0 1 349.0,684.2M326.1,684.2A9.6,5.8 0 0 1 345.3,684.2M329.7,684.2A6.0,3.6 0 0 1 341.7,684.2M573.9,671.5A13.0,7.8 0 0 1 599.9,671.5M577.6,671.5A9.3,5.6 0 0 1 596.2,671.5M581.1,671.5A5.8,3.5 0 0 1 592.7,671.5M594.4,696.9A19.0,11.4 0 0 1 632.5,696.9M599.8,696.9A13.7,8.2 0 0 1 627.2,696.9M604.9,696.9A8.6,5.1 0 0 1 622.0,696.9M377.5,682.1A19.6,11.8 0 0 1 416.6,682.1M382.9,682.1A14.1,8.5 0 0 1 411.1,682.1M388.2,682.1A8.8,5.3 0 0 1 405.9,682.1M545.4,684.0A9.6,5.7 0 0 1 564.5,684.0M548.1,684.0A6.9,4.1 0 0 1 561.9,684.0M550.7,684.0A4.3,2.6 0 0 1 559.3,684.0M622.0,699.0A10.1,6.0 0 0 1 642.1,699.0M624.8,699.0A7.2,4.3 0 0 1 639.3,699.0M627.5,699.0A4.5,2.7 0 0 1 636.6,699.0M550.0,708.8A7.7,4.6 0 0 1 565.5,708.8M552.2,708.8A5.6,3.3 0 0 1 563.4,708.8M554.3,708.8A3.5,2.1 0 0 1 561.3,708.8M521.4,712.5A7.8,4.7 0 0 1 537.0,712.5M523.6,712.5A5.6,3.4 0 0 1 534.8,712.5M525.7,712.5A3.5,2.1 0 0 1 532.7,712.5M462.3,670.1A8.7,5.2 0 0 1 479.8,670.1M464.8,670.1A6.3,3.8 0 0 1 477.3,670.1M467.1,670.1A3.9,2.4 0 0 1 475.0,670.1M327.6,690.0A34.3,20.6 0 0 1 385.4,694.9M331.0,671.5A29.8,17.9 0 0 1 363.2,672.3M314.1,663.4A33.2,19.9 0 0 1 359.8,657.0M321.9,662.2A28.4,17.0 0 0 1 374.4,660.6M264.0,675.8A20.2,12.1 0 0 1 288.2,676.7M516.7,675.7A18.1,10.9 0 0 1 548.2,675.7M396.8,655.0A22.6,13.6 0 0 1 421.6,652.2M442.8,678.9A31.8,19.1 0 0 1 482.8,684.5M268.4,663.6A25.3,15.2 0 0 1 309.7,667.6M495.3,705.7A19.7,11.8 0 0 1 521.6,701.8M346.0,688.2A19.3,11.6 0 0 1 374.2,686.5M416.4,682.1A32.0,19.2 0 0 1 470.7,673.5M631.2,682.6A28.7,17.2 0 0 1 664.7,677.5M458.2,662.4A28.3,17.0 0 0 1 500.9,668.5M374.4,684.1A39.7,23.8 0 0 1 424.4,672.3M284.1,669.2A19.9,12.0 0 0 1 320.3,665.7M338.2,672.0A23.8,14.3 0 0 1 359.9,670.3M427.1,696.5A35.0,21.0 0 0 1 470.7,687.3M430.1,656.8A20.8,12.5 0 0 1 459.5,659.6M323.8,691.1A29.1,17.4 0 0 1 367.5,700.7M396.9,685.9A26.0,15.6 0 0 1 429.4,684.1M483.4,683.2A36.7,22.0 0 0 1 521.9,680.9M405.4,693.3A20.5,12.3 0 0 1 427.6,693.9M309.0,680.4A19.5,11.7 0 0 1 344.6,677.0M326.6,669.1A21.9,13.1 0 0 1 361.6,667.0M450.9,702.7A36.5,21.9 0 0 1 519.5,704.1M199.7,682.5A39.3,23.6 0 0 1 271.0,676.1M427.4,698.3A37.6,22.5 0 0 1 488.4,699.5M379.9,671.7A27.4,16.4 0 0 1 423.9,668.2M433.5,667.7A30.2,18.1 0 0 1 476.2,665.7M485.0,670.4A35.6,21.4 0 0 1 544.1,660.7M573.4,698.4A32.6,19.6 0 0 1 624.3,691.3M573.7,688.8A37.6,22.6 0 0 1 621.3,695.5M410.4,697.4A32.6,19.6 0 0 1 449.2,690.7M375.0,676.9A23.2,13.9 0 0 1 405.9,680.5M472.3,659.5A32.5,19.5 0 0 1 529.5,658.0M446.5,687.4A25.5,15.3 0 0 1 492.1,684.8M308.9,552.3A18.6,11.2 0 0 1 346.2,552.3M314.1,552.3A13.4,8.0 0 0 1 340.9,552.3M319.1,552.3A8.4,5.0 0 0 1 335.9,552.3M297.0,507.1A18.7,11.2 0 0 1 334.5,507.1M302.3,507.1A13.5,8.1 0 0 1 329.3,507.1M307.3,507.1A8.4,5.1 0 0 1 324.2,507.1M286.3,513.6A18.9,11.4 0 0 1 324.2,513.6M291.6,513.6A13.6,8.2 0 0 1 318.9,513.6M296.8,513.6A8.5,5.1 0 0 1 313.8,513.6M298.1,573.4A11.8,7.1 0 0 1 321.8,573.4M301.4,573.4A8.5,5.1 0 0 1 318.5,573.4M304.6,573.4A5.3,3.2 0 0 1 315.3,573.4M338.3,549.8A11.9,7.1 0 0 1 362.1,549.8M341.7,549.8A8.6,5.1 0 0 1 358.8,549.8M344.9,549.8A5.4,3.2 0 0 1 355.6,549.8M314.2,540.8A19.4,11.6 0 0 1 353.1,540.8M319.7,540.8A14.0,8.4 0 0 1 347.6,540.8M324.9,540.8A8.7,5.2 0 0 1 342.4,540.8M368.8,557.0A16.9,10.1 0 0 1 402.6,557.0M373.6,557.0A12.2,7.3 0 0 1 397.9,557.0M378.1,557.0A7.6,4.6 0 0 1 393.3,557.0M327.4,533.0A12.8,7.7 0 0 1 352.9,533.0M330.9,533.0A9.2,5.5 0 0 1 349.3,533.0M334.4,533.0A5.7,3.4 0 0 1 345.9,533.0M300.2,555.1A12.7,7.6 0 0 1 325.6,555.1M303.7,555.1A9.1,5.5 0 0 1 322.0,555.1M307.2,555.1A5.7,3.4 0 0 1 318.6,555.1M267.4,551.4A20.4,12.2 0 0 1 308.2,551.4M273.1,551.4A14.7,8.8 0 0 1 302.4,551.4M278.6,551.4A9.2,5.5 0 0 1 296.9,551.4M350.1,567.3A18.9,11.4 0 0 1 388.0,567.3M355.4,567.3A13.6,8.2 0 0 1 382.7,567.3M360.5,567.3A8.5,5.1 0 0 1 377.6,567.3M269.6,569.0A15.4,9.2 0 0 1 300.3,569.0M273.9,569.0A11.1,6.6 0 0 1 296.0,569.0M278.0,569.0A6.9,4.1 0 0 1 291.8,569.0M274.2,543.7A17.4,10.4 0 0 1 308.9,543.7M279.0,543.7A12.5,7.5 0 0 1 304.0,543.7M283.7,543.7A7.8,4.7 0 0 1 299.3,543.7M351.8,526.0A7.8,4.7 0 0 1 367.4,526.0M354.0,526.0A5.6,3.4 0 0 1 365.2,526.0M356.1,526.0A3.5,2.1 0 0 1 363.1,526.0M275.6,559.3A19.2,11.5 0 0 1 314.0,559.3M281.0,559.3A13.8,8.3 0 0 1 308.7,559.3M286.2,559.3A8.6,5.2 0 0 1 303.5,559.3M331.0,564.2A15.0,9.0 0 0 1 361.0,564.2M335.2,564.2A10.8,6.5 0 0 1 356.8,564.2M339.2,564.2A6.8,4.1 0 0 1 352.8,564.2M306.9,514.1A10.8,6.5 0 0 1 328.6,514.1M309.9,514.1A7.8,4.7 0 0 1 325.5,514.1M312.8,514.1A4.9,2.9 0 0 1 322.6,514.1M312.1,555.2A18.4,11.0 0 0 1 348.8,555.2M317.2,555.2A13.2,7.9 0 0 1 343.7,555.2M322.2,555.2A8.3,5.0 0 0 1 338.7,555.2M370.9,542.5A10.8,6.5 0 0 1 392.5,542.5M374.0,542.5A7.8,4.7 0 0 1 389.5,542.5M376.9,542.5A4.9,2.9 0 0 1 386.6,542.5M283.6,554.9A14.7,8.8 0 0 1 313.1,554.9M287.7,554.9A10.6,6.4 0 0 1 308.9,554.9M291.7,554.9A6.6,4.0 0 0 1 304.9,554.9M332.6,548.1A12.4,7.4 0 0 1 357.4,548.1M336.1,548.1A8.9,5.3 0 0 1 353.9,548.1M339.4,548.1A5.6,3.3 0 0 1 350.6,548.1M331.0,560.1A10.5,6.3 0 0 1 351.9,560.1M333.9,560.1A7.5,4.5 0 0 1 349.0,560.1M336.8,560.1A4.7,2.8 0 0 1 346.2,560.1M325.9,517.2A7.8,4.7 0 0 1 341.6,517.2M328.1,517.2A5.6,3.4 0 0 1 339.4,517.2M330.2,517.2A3.5,2.1 0 0 1 337.3,517.2M345.2,528.9A7.1,4.3 0 0 1 359.5,528.9M347.2,528.9A5.1,3.1 0 0 1 357.5,528.9M349.2,528.9A3.2,1.9 0 0 1 355.6,528.9M324.8,558.6A26.8,16.1 0 0 1 373.6,561.3M300.3,537.3A30.6,18.4 0 0 1 330.9,538.0M264.5,534.2A32.9,19.7 0 0 1 311.3,527.4M360.9,521.0A33.5,20.1 0 0 1 414.7,530.1M337.3,548.2A31.7,19.0 0 0 1 398.0,549.7M281.7,496.4A39.3,23.6 0 0 1 346.8,505.3M273.4,558.0A29.2,17.5 0 0 1 306.3,558.1M273.0,533.6A29.3,17.6 0 0 1 306.5,537.0M561.7,553.0A10.2,6.1 0 0 1 582.0,553.0M564.5,553.0A7.3,4.4 0 0 1 579.2,553.0M567.3,553.0A4.6,2.7 0 0 1 576.4,553.0M567.1,580.9A8.5,5.1 0 0 1 584.2,580.9M569.5,580.9A6.1,3.7 0 0 1 581.8,580.9M571.8,580.9A3.8,2.3 0 0 1 579.5,580.9M585.4,539.2A7.8,4.7 0 0 1 601.1,539.2M587.6,539.2A5.6,3.4 0 0 1 598.9,539.2M589.7,539.2A3.5,2.1 0 0 1 596.8,539.2M537.3,561.3A17.1,10.3 0 0 1 571.5,561.3M542.1,561.3A12.3,7.4 0 0 1 566.7,561.3M546.7,561.3A7.7,4.6 0 0 1 562.1,561.3M534.3,565.2A8.0,4.8 0 0 1 550.4,565.2M536.5,565.2A5.8,3.5 0 0 1 548.1,565.2M538.7,565.2A3.6,2.2 0 0 1 545.9,565.2M515.8,549.8A20.2,12.1 0 0 1 556.2,549.8M521.5,549.8A14.5,8.7 0 0 1 550.6,549.8M526.9,549.8A9.1,5.5 0 0 1 545.1,549.8M530.3,564.9A18.9,11.3 0 0 1 568.1,564.9M535.5,564.9A13.6,8.2 0 0 1 562.8,564.9M540.7,564.9A8.5,5.1 0 0 1 557.7,564.9M528.9,586.5A21.3,12.8 0 0 1 571.5,586.5M534.9,586.5A15.3,9.2 0 0 1 565.5,586.5M540.6,586.5A9.6,5.7 0 0 1 559.8,586.5M570.7,556.3A17.6,10.6 0 0 1 605.9,556.3M575.6,556.3A12.7,7.6 0 0 1 601.0,556.3M580.4,556.3A7.9,4.8 0 0 1 596.2,556.3M530.3,578.9A7.0,4.2 0 0 1 544.3,578.9M532.3,578.9A5.0,3.0 0 0 1 542.4,578.9M534.2,578.9A3.2,1.9 0 0 1 540.5,578.9M501.7,560.1A18.5,11.1 0 0 1 538.7,560.1M506.9,560.1A13.3,8.0 0 0 1 533.5,560.1M511.9,560.1A8.3,5.0 0 0 1 528.5,560.1M562.3,533.5A12.6,7.6 0 0 1 587.6,533.5M565.9,533.5A9.1,5.5 0 0 1 584.0,533.5M569.3,533.5A5.7,3.4 0 0 1 580.6,533.5M532.5,554.8A21.3,12.8 0 0 1 575.1,554.8M538.4,554.8A15.3,9.2 0 0 1 569.1,554.8M544.2,554.8A9.6,5.8 0 0 1 563.4,554.8M540.0,565.3A19.6,11.8 0 0 1 579.3,565.3M545.5,565.3A14.1,8.5 0 0 1 573.8,565.3M550.8,565.3A8.8,5.3 0 0 1 568.5,565.3M581.0,579.7A8.3,5.0 0 0 1 597.6,579.7M583.3,579.7A6.0,3.6 0 0 1 595.2,579.7M585.5,579.7A3.7,2.2 0 0 1 593.0,579.7M511.8,555.1A9.1,5.4 0 0 1 529.9,555.1M514.3,555.1A6.5,3.9 0 0 1 527.3,555.1M516.7,555.1A4.1,2.4 0 0 1 524.9,555.1M557.5,533.2A13.0,7.8 0 0 1 583.6,533.2M561.2,533.2A9.4,5.6 0 0 1 579.9,533.2M564.7,533.2A5.9,3.5 0 0 1 576.4,533.2M501.8,552.3A18.4,11.0 0 0 1 538.6,552.3M507.0,552.3A13.3,8.0 0 0 1 533.5,552.3M512.0,552.3A8.3,5.0 0 0 1 528.5,552.3M510.0,530.0A31.0,18.6 0 0 1 547.3,529.8M548.7,556.5A35.4,21.3 0 0 1 583.9,559.1M501.9,536.4A37.4,22.4 0 0 1 568.9,528.1M572.5,528.2A27.2,16.3 0 0 1 618.6,532.1M546.6,547.1A37.5,22.5 0 0 1 596.2,533.3M555.2,556.6A20.1,12.1 0 0 1 585.1,551.8M214.2,325.2A8.6,5.1 0 0 1 231.3,325.2M216.6,325.2A6.2,3.7 0 0 1 229.0,325.2M218.9,325.2A3.8,2.3 0 0 1 226.6,325.2M197.6,309.7A13.7,8.2 0 0 1 225.0,309.7M201.4,309.7A9.9,5.9 0 0 1 221.2,309.7M205.1,309.7A6.2,3.7 0 0 1 217.5,309.7M196.0,310.4A17.8,10.7 0 0 1 231.6,310.4M201.0,310.4A12.8,7.7 0 0 1 226.6,310.4M205.8,310.4A8.0,4.8 0 0 1 221.8,310.4M201.6,337.1A15.9,9.5 0 0 1 233.4,337.1M206.0,337.1A11.4,6.9 0 0 1 228.9,337.1M210.3,337.1A7.1,4.3 0 0 1 224.6,337.1M201.3,310.6A19.1,11.5 0 0 1 239.5,310.6M206.6,310.6A13.8,8.3 0 0 1 234.2,310.6M211.8,310.6A8.6,5.2 0 0 1 229.0,310.6M201.8,339.5A21.0,12.6 0 0 1 243.7,339.5M207.7,339.5A15.1,9.1 0 0 1 237.9,339.5M213.3,339.5A9.4,5.7 0 0 1 232.2,339.5M205.8,330.3A12.4,7.4 0 0 1 230.6,330.3M209.3,330.3A8.9,5.4 0 0 1 227.2,330.3M212.6,330.3A5.6,3.4 0 0 1 223.8,330.3M187.0,336.2A19.2,11.5 0 0 1 225.4,336.2M192.3,336.2A13.8,8.3 0 0 1 220.0,336.2M197.5,336.2A8.6,5.2 0 0 1 214.8,336.2M195.3,355.7A15.1,9.1 0 0 1 225.5,355.7M199.5,355.7A10.9,6.5 0 0 1 221.3,355.7M203.6,355.7A6.8,4.1 0 0 1 217.2,355.7M190.7,305.6A33.9,20.4 0 0 1 234.7,311.7M195.6,302.9A23.3,14.0 0 0 1 220.5,302.3M198.2,331.2A29.5,17.7 0 0 1 232.4,332.6M663.0,331.1A13.7,8.2 0 0 1 690.4,331.1M666.9,331.1A9.9,5.9 0 0 1 686.6,331.1M670.6,331.1A6.2,3.7 0 0 1 682.9,331.1M661.2,341.3A20.0,12.0 0 0 1 701.2,341.3M666.8,341.3A14.4,8.6 0 0 1 695.6,341.3M672.2,341.3A9.0,5.4 0 0 1 690.2,341.3M664.0,342.2A21.4,12.8 0 0 1 706.8,342.2M670.0,342.2A15.4,9.2 0 0 1 700.8,342.2M675.8,342.2A9.6,5.8 0 0 1 695.1,342.2M655.4,327.9A21.5,12.9 0 0 1 698.4,327.9M661.4,327.9A15.5,9.3 0 0 1 692.4,327.9M667.2,327.9A9.7,5.8 0 0 1 686.6,327.9M663.1,341.8A12.8,7.7 0 0 1 688.8,341.8M666.7,341.8A9.2,5.5 0 0 1 685.2,341.8M670.2,341.8A5.8,3.5 0 0 1 681.7,341.8M667.1,360.3A16.9,10.2 0 0 1 701.0,360.3M671.9,360.3A12.2,7.3 0 0 1 696.3,360.3M676.4,360.3A7.6,4.6 0 0 1 691.7,360.3M673.7,337.3A11.6,7.0 0 0 1 696.9,337.3M676.9,337.3A8.4,5.0 0 0 1 693.7,337.3M680.1,337.3A5.2,3.1 0 0 1 690.5,337.3M666.3,331.3A11.8,7.1 0 0 1 689.9,331.3M669.6,331.3A8.5,5.1 0 0 1 686.6,331.3M672.8,331.3A5.3,3.2 0 0 1 683.5,331.3M674.4,311.6A9.0,5.4 0 0 1 692.4,311.6M676.9,311.6A6.5,3.9 0 0 1 689.9,311.6M679.3,311.6A4.1,2.4 0 0 1 687.5,311.6M671.8,313.2A12.3,7.4 0 0 1 696.3,313.2M675.2,313.2A8.8,5.3 0 0 1 692.9,313.2M678.5,313.2A5.5,3.3 0 0 1 689.6,313.2M669.9,315.7A12.9,7.8 0 0 1 695.8,315.7M673.5,315.7A9.3,5.6 0 0 1 692.2,315.7M677.0,315.7A5.8,3.5 0 0 1 688.7,315.7M664.6,319.2A15.9,9.5 0 0 1 696.3,319.2M669.0,319.2A11.4,6.8 0 0 1 691.8,319.2M673.3,319.2A7.1,4.3 0 0 1 687.5,319.2M679.4,325.6A21.6,13.0 0 0 1 708.7,328.3M658.3,355.1A20.7,12.4 0 0 1 688.7,351.8M662.6,316.7A18.6,11.1 0 0 1 691.1,313.5M661.5,348.7A36.2,21.7 0 0 1 710.8,362.1M261.8,761.3A16.0,9.6 0 0 1 293.9,761.3M266.3,761.3A11.6,6.9 0 0 1 289.4,761.3M270.6,761.3A7.2,4.3 0 0 1 285.0,761.3M333.7,762.0A18.9,11.4 0 0 1 371.6,762.0M339.0,762.0A13.6,8.2 0 0 1 366.2,762.0M344.1,762.0A8.5,5.1 0 0 1 361.1,762.0M302.9,770.3A15.5,9.3 0 0 1 334.0,770.3M307.2,770.3A11.2,6.7 0 0 1 329.6,770.3M311.4,770.3A7.0,4.2 0 0 1 325.4,770.3M372.8,766.8A10.4,6.2 0 0 1 393.5,766.8M375.7,766.8A7.5,4.5 0 0 1 390.6,766.8M378.5,766.8A4.7,2.8 0 0 1 387.8,766.8M285.4,763.7A18.2,10.9 0 0 1 321.8,763.7M290.5,763.7A13.1,7.9 0 0 1 316.7,763.7M295.4,763.7A8.2,4.9 0 0 1 311.8,763.7M253.4,760.6A19.5,11.7 0 0 1 292.3,760.6M258.8,760.6A14.0,8.4 0 0 1 286.8,760.6M264.0,760.6A8.8,5.3 0 0 1 281.6,760.6M352.1,776.4A21.1,12.6 0 0 1 394.2,776.4M358.0,776.4A15.2,9.1 0 0 1 388.3,776.4M363.7,776.4A9.5,5.7 0 0 1 382.6,776.4M361.6,750.0A16.0,9.6 0 0 1 393.5,750.0M366.0,750.0A11.5,6.9 0 0 1 389.0,750.0M370.3,750.0A7.2,4.3 0 0 1 384.7,750.0M338.0,776.5A20.3,12.2 0 0 1 378.6,776.5M343.7,776.5A14.6,8.8 0 0 1 372.9,776.5M349.2,776.5A9.1,5.5 0 0 1 367.4,776.5M256.6,753.2A20.8,12.5 0 0 1 298.2,753.2M262.4,753.2A15.0,9.0 0 0 1 292.4,753.2M268.1,753.2A9.4,5.6 0 0 1 286.8,753.2M301.3,766.5A11.7,7.0 0 0 1 324.6,766.5M304.6,766.5A8.4,5.0 0 0 1 321.4,766.5M307.7,766.5A5.2,3.1 0 0 1 318.2,766.5M328.5,773.6A19.3,11.6 0 0 1 367.2,773.6M333.9,773.6A13.9,8.3 0 0 1 361.7,773.6M339.1,773.6A8.7,5.2 0 0 1 356.5,773.6M343.3,755.6A8.1,4.8 0 0 1 359.4,755.6M345.5,755.6A5.8,3.5 0 0 1 357.2,755.6M347.7,755.6A3.6,2.2 0 0 1 355.0,755.6M263.6,760.7A8.8,5.3 0 0 1 281.1,760.7M266.0,760.7A6.3,3.8 0 0 1 278.6,760.7M268.4,760.7A3.9,2.4 0 0 1 276.3,760.7M326.6,784.2A15.3,9.2 0 0 1 357.3,784.2M330.9,784.2A11.0,6.6 0 0 1 353.0,784.2M335.1,784.2A6.9,4.1 0 0 1 348.9,784.2M328.7,730.6A34.9,21.0 0 0 1 387.2,737.4M301.1,778.1A18.4,11.0 0 0 1 325.1,774.4M319.5,751.6A24.3,14.6 0 0 1 349.3,746.3M359.0,739.0A29.8,17.9 0 0 1 398.4,733.7M337.2,757.3A31.5,18.9 0 0 1 369.8,757.8M587.7,744.6A9.4,5.6 0 0 1 606.4,744.6M590.3,744.6A6.8,4.1 0 0 1 603.8,744.6M592.8,744.6A4.2,2.5 0 0 1 601.3,744.6M617.2,763.8A10.7,6.4 0 0 1 638.6,763.8M620.2,763.8A7.7,4.6 0 0 1 635.6,763.8M623.1,763.8A4.8,2.9 0 0 1 632.7,763.8M519.0,749.0A21.2,12.7 0 0 1 561.3,749.0M524.9,749.0A15.2,9.1 0 0 1 555.4,749.0M530.6,749.0A9.5,5.7 0 0 1 549.6,749.0M584.8,746.8A18.0,10.8 0 0 1 620.8,746.8M589.8,746.8A12.9,7.8 0 0 1 615.7,746.8M594.7,746.8A8.1,4.9 0 0 1 610.9,746.8M495.2,770.1A9.7,5.8 0 0 1 514.7,770.1M497.9,770.1A7.0,4.2 0 0 1 511.9,770.1M500.5,770.1A4.4,2.6 0 0 1 509.3,770.1M581.4,751.8A15.4,9.2 0 0 1 612.1,751.8M585.7,751.8A11.1,6.6 0 0 1 607.8,751.8M589.8,751.8A6.9,4.2 0 0 1 603.7,751.8M548.0,738.0A9.8,5.9 0 0 1 567.5,738.0M550.7,738.0A7.0,4.2 0 0 1 564.8,738.0M553.4,738.0A4.4,2.6 0 0 1 562.2,738.0M524.0,777.2A14.2,8.5 0 0 1 552.5,777.2M528.0,777.2A10.3,6.2 0 0 1 548.5,777.2M531.8,777.2A6.4,3.8 0 0 1 544.7,777.2M483.6,771.2A21.1,12.7 0 0 1 525.8,771.2M489.5,771.2A15.2,9.1 0 0 1 519.9,771.2M495.2,771.2A9.5,5.7 0 0 1 514.2,771.2M576.1,738.4A10.4,6.3 0 0 1 596.9,738.4M579.0,738.4A7.5,4.5 0 0 1 594.0,738.4M581.8,738.4A4.7,2.8 0 0 1 591.2,738.4M590.0,747.3A19.7,11.8 0 0 1 629.4,747.3M595.5,747.3A14.2,8.5 0 0 1 623.9,747.3M600.8,747.3A8.9,5.3 0 0 1 618.6,747.3M502.7,775.2A12.2,7.3 0 0 1 527.1,775.2M506.1,775.2A8.8,5.3 0 0 1 523.7,775.2M509.4,775.2A5.5,3.3 0 0 1 520.4,775.2M557.1,775.3A13.7,8.2 0 0 1 584.6,775.3M560.9,775.3A9.9,5.9 0 0 1 580.7,775.3M564.7,775.3A6.2,3.7 0 0 1 577.0,775.3M591.1,774.0A21.8,13.1 0 0 1 634.7,774.0M597.2,774.0A15.7,9.4 0 0 1 628.6,774.0M603.1,774.0A9.8,5.9 0 0 1 622.7,774.0M512.6,775.3A9.1,5.5 0 0 1 530.9,775.3M515.1,775.3A6.6,4.0 0 0 1 528.3,775.3M517.6,775.3A4.1,2.5 0 0 1 525.8,775.3M561.6,737.2A39.0,23.4 0 0 1 621.9,738.4M495.5,745.0A23.9,14.3 0 0 1 528.3,745.3M571.0,737.4A22.2,13.3 0 0 1 598.8,740.4M553.3,770.3A24.3,14.6 0 0 1 588.3,773.8M517.3,775.4A28.8,17.3 0 0 1 573.1,774.8M447.3,747.4A20.2,12.1 0 0 1 487.7,747.4M452.9,747.4A14.5,8.7 0 0 1 482.0,747.4M458.4,747.4A9.1,5.5 0 0 1 476.6,747.4M485.8,749.0A7.3,4.4 0 0 1 500.5,749.0M487.9,749.0A5.3,3.2 0 0 1 498.4,749.0M489.9,749.0A3.3,2.0 0 0 1 496.5,749.0M415.8,725.0A15.5,9.3 0 0 1 446.9,725.0M420.2,725.0A11.2,6.7 0 0 1 442.5,725.0M424.4,725.0A7.0,4.2 0 0 1 438.3,725.0M429.0,723.7A18.2,10.9 0 0 1 465.5,723.7M434.2,723.7A13.1,7.9 0 0 1 460.4,723.7M439.1,723.7A8.2,4.9 0 0 1 455.5,723.7M453.1,742.9A14.7,8.8 0 0 1 482.4,742.9M457.2,742.9A10.6,6.3 0 0 1 478.3,742.9M461.1,742.9A6.6,4.0 0 0 1 474.3,742.9M468.4,754.1A12.6,7.5 0 0 1 493.5,754.1M471.9,754.1A9.0,5.4 0 0 1 490.0,754.1M475.3,754.1A5.7,3.4 0 0 1 486.6,754.1M459.8,728.4A7.2,4.3 0 0 1 474.2,728.4M461.8,728.4A5.2,3.1 0 0 1 472.2,728.4M463.8,728.4A3.2,1.9 0 0 1 470.3,728.4M429.2,736.9A12.0,7.2 0 0 1 453.1,736.9M432.5,736.9A8.6,5.2 0 0 1 449.7,736.9M435.7,736.9A5.4,3.2 0 0 1 446.5,736.9M425.0,749.0A11.7,7.0 0 0 1 448.4,749.0M428.3,749.0A8.4,5.0 0 0 1 445.1,749.0M431.4,749.0A5.2,3.1 0 0 1 441.9,749.0M463.5,741.8A11.8,7.1 0 0 1 487.0,741.8M466.8,741.8A8.5,5.1 0 0 1 483.7,741.8M469.9,741.8A5.3,3.2 0 0 1 480.5,741.8M407.0,737.8A13.3,8.0 0 0 1 433.6,737.8M410.7,737.8A9.6,5.8 0 0 1 429.9,737.8M414.3,737.8A6.0,3.6 0 0 1 426.3,737.8M434.9,751.2A10.6,6.4 0 0 1 456.1,751.2M437.8,751.2A7.6,4.6 0 0 1 453.1,751.2M440.7,751.2A4.8,2.9 0 0 1 450.3,751.2M422.6,717.4A38.5,23.1 0 0 1 471.8,704.1M404.0,732.4A30.5,18.3 0 0 1 457.8,733.4M474.2,705.2A36.0,21.6 0 0 1 511.0,704.5M472.7,730.7A19.9,11.9 0 0 1 496.8,731.6" fill="none" stroke="#140000" stroke-width="1"/><path d="M214,338C290,372 330,420 396,452M214,341.5C290,375.5 330,423.5 396,455.5M214,345C290,379 330,427 396,459M214,348.5C290,382.5 330,430.5 396,462.5M419,538C470,520 520,480 572,471M419,541.5C470,523.5 520,483.5 572,474.5M419,545C470,527 520,487 572,478M419,548.5C470,530.5 520,490.5 572,481.5M405,414C425,400 450,418 470,412M405,417.5C425,403.5 450,421.5 470,415.5M405,421C425,407 450,425 470,419M405,424.5C425,410.5 450,428.5 470,422.5M240,480C300,455 340,500 390,500M240,483.5C300,458.5 340,503.5 390,503.5M240,487C300,462 340,507 390,507M240,490.5C300,465.5 340,510.5 390,510.5M470,540C520,575 580,540 620,520M470,543.5C520,578.5 580,543.5 620,523.5M470,547C520,582 580,547 620,527M470,550.5C520,585.5 580,550.5 620,530.5M230,640C290,600 360,585 420,610M230,643.5C290,603.5 360,588.5 420,613.5M230,647C290,607 360,592 420,617M230,650.5C290,610.5 360,595.5 420,620.5M480,610C540,575 600,590 660,600M480,613.5C540,578.5 600,593.5 660,603.5M480,617C540,582 600,597 660,607M480,620.5C540,585.5 600,600.5 660,610.5" fill="none" stroke="#140000" stroke-width="1.1"/><path d="M214,336C290,370 330,418 396,450M214,343C290,377 330,425 396,457M419,536C470,518 520,478 572,469M419,543C470,525 520,485 572,476M405,412C425,398 450,416 470,410M405,419C425,405 450,423 470,417M240,478C300,453 340,498 390,498M240,485C300,460 340,505 390,505M470,538C520,573 580,538 620,518M470,545C520,580 580,545 620,525M230,638C290,598 360,583 420,608M230,645C290,605 360,590 420,615M480,608C540,573 600,588 660,598M480,615C540,580 600,595 660,605" fill="none" stroke="#2ee81a" stroke-width="1.2" stroke-dasharray="6 3"/><path d="M237,484.5h13M243,521.5h6M245,391.5h10M213,339.5h15M236,414.5h12M231,388.5h11M247,480.5h11M216,367.5h16M237,434.5h10M244,364.5h10M239,526.5h11M227,425.5h16M223,490.5h7M249,439.5h11M227,370.5h6M226,406.5h15M203,428.5h8M220,540.5h17M209,446.5h15M223,327.5h14M232,306.5h7M226,399.5h10M237,423.5h9M246,463.5h13M217,420.5h13M233,431.5h12M216,512.5h10M215,489.5h17M220,387.5h15M218,309.5h15M231,364.5h7M210,421.5h13M220,530.5h11M237,461.5h12M236,511.5h15M245,360.5h9M214,513.5h10M238,346.5h15M228,338.5h12M218,447.5h13M206,474.5h7M209,468.5h12M203,415.5h8M237,451.5h17M247,419.5h7M230,522.5h12M222,535.5h15M203,477.5h17M233,484.5h12M225,411.5h6M238,384.5h15M239,502.5h7M234,310.5h11M241,350.5h17M220,356.5h8M221,349.5h14M203,463.5h8M238,523.5h11M235,506.5h10M240,436.5h13M207,434.5h10M249,452.5h9M204,444.5h11M223,383.5h6M228,422.5h13M234,440.5h10M203,376.5h10M329,482.5h8M326,429.5h12M307,488.5h9M272,422.5h17M341,448.5h12M322,435.5h11M295,510.5h16M288,467.5h12M297,423.5h6M356,435.5h17M319,438.5h16M297,415.5h17M348,481.5h17M305,478.5h11M328,481.5h17M317,448.5h16M310,404.5h17M350,502.5h10M304,465.5h6M359,443.5h14M325,465.5h15M327,429.5h6M298,468.5h9M284,502.5h8M266,431.5h7M326,488.5h8M321,486.5h11M298,481.5h7M320,475.5h6M281,499.5h7M334,476.5h12M304,441.5h13M303,416.5h9M342,448.5h14M291,456.5h12M289,486.5h14M318,487.5h14M328,512.5h10M353,471.5h13M328,434.5h16M311,483.5h11M265,491.5h13M226,576.5h13M229,650.5h13M237,566.5h7M227,657.5h11M274,640.5h7M232,545.5h8M254,590.5h14M224,571.5h7M282,601.5h15M207,583.5h17M237,603.5h13M270,644.5h11M241,660.5h9M274,583.5h9M245,536.5h11M235,533.5h17M239,579.5h6M260,572.5h16M241,619.5h8M259,629.5h9M255,534.5h14M215,640.5h6M263,627.5h14M237,576.5h10M246,588.5h11M229,589.5h14M249,598.5h11M264,543.5h8M228,539.5h12M252,656.5h14M278,640.5h9M261,632.5h12M217,652.5h16M209,634.5h6M212,569.5h15M201,621.5h9M210,554.5h8M220,629.5h9M218,578.5h12M244,612.5h17M260,643.5h10M260,569.5h7M553,376.5h13M637,459.5h16M599,496.5h7M650,399.5h11M636,380.5h9M642,393.5h6M553,410.5h16M578,414.5h10M575,360.5h7M584,511.5h9M577,516.5h13M538,449.5h14M595,375.5h14M540,433.5h14M659,418.5h13M648,482.5h16M646,477.5h9M570,387.5h7M533,440.5h9M571,471.5h17M548,486.5h9M573,430.5h17M553,447.5h10M566,476.5h11M623,527.5h7M574,408.5h13M614,442.5h13M531,494.5h10M557,452.5h7M617,528.5h10M629,422.5h16M561,371.5h14M637,509.5h11M593,358.5h17M580,424.5h7M601,349.5h14M603,433.5h16M619,366.5h8M658,482.5h6M633,508.5h17M615,410.5h14M535,467.5h10M528,392.5h18M594,470.5h8M596,525.5h7M582,485.5h11M615,442.5h13M584,432.5h9M522,423.5h6M581,390.5h13M524,463.5h8M628,392.5h8M513,454.5h17M605,395.5h7M619,412.5h16M551,393.5h16M559,377.5h13M547,455.5h14M656,467.5h10M518,450.5h15M609,512.5h17M608,501.5h15M579,448.5h15M608,363.5h15M562,422.5h14M590,440.5h10M554,391.5h9M561,380.5h10M573,430.5h17M569,500.5h8M651,406.5h12M552,386.5h11M634,477.5h14M583,528.5h7M529,483.5h15M641,538.5h14M656,532.5h12M637,622.5h8M655,559.5h11M625,544.5h16M664,651.5h9M651,560.5h8M669,582.5h9M662,619.5h13M658,526.5h12M628,643.5h8M625,576.5h11M647,576.5h10M652,550.5h12M636,531.5h11M662,607.5h9M660,618.5h12M627,572.5h10M658,547.5h17M668,648.5h7M633,612.5h12M639,598.5h6M627,623.5h12M650,649.5h14M647,595.5h8M655,534.5h14M639,696.5h6M283,681.5h8M548,673.5h11M278,669.5h14M455,689.5h10M418,708.5h9M295,669.5h8M439,684.5h14M313,666.5h12M593,686.5h11M475,691.5h16M314,690.5h14M381,669.5h14M254,682.5h17M469,655.5h9M288,684.5h14M416,693.5h10M486,691.5h16M568,698.5h10M384,685.5h14M457,680.5h13M277,693.5h9M552,697.5h11M459,698.5h12M302,665.5h10M556,700.5h12M538,701.5h14M581,705.5h9M463,707.5h13M287,693.5h11M580,674.5h8M368,660.5h15M524,656.5h16M649,681.5h8M406,688.5h17M559,669.5h6M467,667.5h9M588,678.5h11M541,672.5h10M638,685.5h11M311,660.5h14M607,679.5h16M334,694.5h12M613,692.5h12M558,669.5h15M355,679.5h9M559,700.5h11M355,675.5h11M397,671.5h13M406,662.5h18M556,681.5h11M578,666.5h17M507,658.5h17M313,699.5h12M459,690.5h7M580,673.5h17M312,674.5h15M507,676.5h15M521,687.5h18M484,688.5h11M267,666.5h12M445,658.5h16M438,680.5h11M470,695.5h12M379,670.5h7M465,663.5h9M427,666.5h8M516,680.5h9M408,653.5h12M600,672.5h17M479,689.5h9M293,668.5h15M456,711.5h8M289,664.5h14M329,676.5h11M580,663.5h10M604,685.5h15M550,678.5h8M627,692.5h8M554,704.5h6M525,707.5h6M296,502.5h15M344,542.5h10M377,546.5h14M334,525.5h10M307,547.5h10M277,559.5h12M283,533.5h14M356,521.5h6M285,547.5h15M312,507.5h9M321,544.5h15M376,535.5h9M291,546.5h12M339,540.5h10M349,524.5h6M567,546.5h8M571,575.5h7M589,534.5h6M546,551.5h14M526,537.5h16M540,573.5h17M579,545.5h14M534,574.5h6M569,525.5h10M543,542.5h17M585,574.5h7M564,525.5h10M511,541.5h15M219,320.5h7M204,301.5h11M205,299.5h14M210,327.5h13M211,299.5h15M212,326.5h17M197,324.5h15M203,346.5h12M671,329.5h16M675,329.5h17M670,334.5h10M679,330.5h9M672,324.5h9M679,306.5h7M678,305.5h10M672,309.5h13M270,751.5h13M378,760.5h8M294,752.5h15M263,748.5h16M363,763.5h17M370,740.5h13M348,764.5h16M267,740.5h17M347,750.5h6M268,755.5h7M334,774.5h12M592,738.5h8M623,757.5h9M530,736.5h17M594,736.5h14M500,764.5h8M589,742.5h12M494,758.5h17M581,732.5h8M600,735.5h16M509,767.5h10M564,767.5h11M602,760.5h17M517,769.5h7M457,735.5h16M424,715.5h12M438,712.5h15M460,734.5h12M475,746.5h10M463,724.5h6M435,729.5h10M431,741.5h9M469,734.5h9M414,729.5h11M440,744.5h8" fill="none" stroke="#2ee81a" stroke-width="1"/><path d="M441,356 C452,362 436,378 447,392 C456,404 474,400 468,418 C462,432 452,428 446,440" fill="none" stroke="#140000" stroke-width="1.6"/><path d="M444,372 h10 M450,400 h14 M455,417 h10" stroke="#2ee81a" stroke-width="1.2"/><path d="M198.0,193.8 L198.1,195.1 L198.9,196.9 L200.5,198.8 L202.7,200.7 L205.7,202.6 L209.4,204.4 L213.9,206.3 L219.1,208.1 L225.1,209.9 L231.8,211.6 L239.3,213.3 L247.5,214.9 L256.4,216.5 L265.9,218.0 L276.2,219.4 L287.0,220.8 L298.5,222.0 L310.6,223.2 L323.1,224.2 L336.2,225.2 L349.7,226.0 L363.6,226.8 L377.8,227.4 L392.3,227.9 L407.0,228.2 L421.9,228.5 L436.9,228.6 L452.0,228.5 L467.0,228.4 L482.0,228.1 L496.8,227.7 L511.4,227.2 L525.7,226.5 L539.8,225.8 L553.5,224.9 L566.7,223.9 L579.5,222.8 L591.8,221.6 L603.5,220.3 L614.6,218.9 L625.1,217.4 L634.9,215.9 L644.1,214.3 L652.5,212.6 L660.3,210.9 L667.3,209.1 L673.5,207.3 L679.0,205.5 L683.7,203.6 L687.7,201.7 L690.9,199.8 L693.4,197.9 L695.2,196.0 L696.2,194.1 L696.5,192.2 L696.0,202.0 L695.0,276.0 L686.0,283.0 L693.4,266.1 L693.1,268.5 L692.0,271.0 L690.3,273.4 L687.8,275.8 L684.6,278.3 L680.7,280.7 L676.0,283.0 L670.5,285.4 L664.3,287.7 L657.4,289.9 L649.8,292.1 L641.4,294.2 L632.4,296.3 L622.6,298.2 L612.3,300.1 L601.3,301.8 L589.7,303.5 L577.6,305.0 L565.0,306.4 L551.9,307.6 L538.4,308.7 L524.6,309.7 L510.4,310.5 L496.0,311.1 L481.4,311.6 L466.6,312.0 L451.8,312.1 L437.0,312.1 L422.2,312.0 L407.5,311.7 L392.9,311.2 L378.6,310.5 L364.6,309.7 L350.9,308.8 L337.6,307.7 L324.7,306.4 L312.3,305.0 L300.4,303.5 L289.0,301.9 L278.3,300.2 L268.2,298.4 L258.7,296.4 L249.9,294.4 L241.8,292.3 L234.5,290.1 L227.8,287.9 L221.9,285.6 L216.7,283.3 L212.3,281.0 L208.6,278.6 L205.6,276.2 L203.3,273.8 L201.8,271.4 L201.0,269.0 L200.8,267.4 L206.0,279.0 L200.0,276.0 L200.4,201.0Z" fill="#ff0000"/><path d="M200.8,264.2 L203.8,273.1 L206.8,274.0 L209.8,278.2 L212.8,278.0 L215.8,281.6 L218.8,281.0 L221.8,284.3 L224.8,283.5 L227.8,286.6 L230.8,285.6 L233.8,288.6 L236.8,287.5 L239.8,290.4 L242.8,289.3 L245.8,292.0 L248.8,290.8 L251.8,293.5 L254.8,292.2 L257.8,294.9 L260.8,293.5 L263.8,296.1 L266.8,294.7 L269.8,297.3 L272.8,295.8 L275.8,298.4 L278.8,296.9 L281.8,299.4 L284.8,297.9 L287.8,300.4 L290.8,298.8 L293.8,301.2 L296.8,299.7 L299.8,302.1 L302.8,300.5 L305.8,302.8 L308.8,301.2 L311.8,303.6 L314.8,301.9 L317.8,304.3 L320.8,302.6 L323.8,304.9 L326.8,303.2 L329.8,305.5 L332.8,303.8 L335.8,306.1 L338.8,304.4 L341.8,306.6 L344.8,304.8 L347.8,307.1 L350.8,305.3 L353.8,307.5 L356.8,305.8 L359.8,308.0 L362.8,306.2 L365.8,308.4 L368.8,306.5 L371.8,308.7 L374.8,306.9 L377.8,309.0 L380.8,307.2 L383.8,309.3 L386.8,307.5 L389.8,309.6 L392.8,307.7 L395.8,309.8 L398.8,307.9 L401.8,310.0 L404.8,308.1 L407.8,310.2 L410.8,308.3 L413.8,310.4 L416.8,308.4 L419.8,310.5 L422.8,308.5 L425.8,310.6 L428.8,308.6 L431.8,310.6 L434.8,308.7 L437.8,310.7 L440.8,308.7 L443.8,310.7 L446.8,308.7 L449.8,310.7 L452.8,308.7 L455.8,310.6 L458.8,308.6 L461.8,310.6 L464.8,308.5 L467.8,310.5 L470.8,308.4 L473.8,310.4 L476.8,308.3 L479.8,310.2 L482.8,308.2 L485.8,310.0 L488.8,307.9 L491.8,309.8 L494.8,307.7 L497.8,309.6 L500.8,307.5 L503.8,309.4 L506.8,307.2 L509.8,309.1 L512.8,306.9 L515.8,308.8 L518.8,306.6 L521.8,308.4 L524.8,306.2 L527.8,308.0 L530.8,305.8 L533.8,307.6 L536.8,305.4 L539.8,307.2 L542.8,304.9 L545.8,306.7 L548.8,304.5 L551.8,306.2 L554.8,303.9 L557.8,305.6 L560.8,303.4 L563.8,305.1 L566.8,302.8 L569.8,304.4 L572.8,302.1 L575.8,303.8 L578.8,301.4 L581.8,303.1 L584.8,300.7 L587.8,302.3 L590.8,299.9 L593.8,301.5 L596.8,299.1 L599.8,300.7 L602.8,298.2 L605.8,299.7 L608.8,297.3 L611.8,298.8 L614.8,296.3 L617.8,297.7 L620.8,295.2 L623.8,296.6 L626.8,294.0 L629.8,295.5 L632.8,292.8 L635.8,294.2 L638.8,291.5 L641.8,292.8 L644.8,290.1 L647.8,291.3 L650.8,288.5 L653.8,289.7 L656.8,286.8 L659.8,287.9 L662.8,284.9 L665.8,285.9 L668.8,282.8 L671.8,283.6 L674.8,280.3 L677.8,280.9 L680.8,277.4 L683.8,277.6 L686.8,273.5 L689.8,272.8 L692.8,266.3M200.6,260.4 L203.6,269.3 L206.6,270.1 L209.6,274.3 L212.6,274.1 L215.6,277.7 L218.6,277.0 L221.6,280.4 L224.6,279.5 L227.6,282.6 L230.6,281.6 L233.6,284.6 L236.6,283.5 L239.6,286.4 L242.6,285.2 L245.6,288.0 L248.6,286.7 L251.6,289.4 L254.6,288.1 L257.6,290.8 L260.6,289.4 L263.6,292.0 L266.6,290.6 L269.6,293.2 L272.6,291.7 L275.6,294.2 L278.6,292.8 L281.6,295.2 L284.6,293.7 L287.6,296.2 L290.6,294.6 L293.6,297.1 L296.6,295.5 L299.6,297.9 L302.6,296.3 L305.6,298.7 L308.6,297.0 L311.6,299.4 L314.6,297.7 L317.6,300.1 L320.6,298.4 L323.6,300.7 L326.6,299.0 L329.6,301.3 L332.6,299.6 L335.6,301.9 L338.6,300.1 L341.6,302.4 L344.6,300.6 L347.6,302.8 L350.6,301.1 L353.6,303.3 L356.6,301.5 L359.6,303.7 L362.6,301.9 L365.6,304.1 L368.6,302.3 L371.6,304.4 L374.6,302.6 L377.6,304.8 L380.6,302.9 L383.6,305.1 L386.6,303.2 L389.6,305.3 L392.6,303.4 L395.6,305.6 L398.6,303.6 L401.6,305.7 L404.6,303.8 L407.6,305.9 L410.6,304.0 L413.6,306.1 L416.6,304.1 L419.6,306.2 L422.6,304.3 L425.6,306.3 L428.6,304.3 L431.6,306.4 L434.6,304.4 L437.6,306.4 L440.6,304.4 L443.6,306.4 L446.6,304.4 L449.6,306.4 L452.6,304.4 L455.6,306.4 L458.6,304.3 L461.6,306.3 L464.6,304.3 L467.6,306.2 L470.6,304.2 L473.6,306.1 L476.6,304.0 L479.6,306.0 L482.6,303.9 L485.6,305.8 L488.6,303.7 L491.6,305.6 L494.6,303.5 L497.6,305.4 L500.6,303.2 L503.6,305.1 L506.6,303.0 L509.6,304.8 L512.6,302.7 L515.6,304.5 L518.6,302.3 L521.6,304.2 L524.6,302.0 L527.6,303.8 L530.6,301.6 L533.6,303.4 L536.6,301.2 L539.6,303.0 L542.6,300.7 L545.6,302.5 L548.6,300.2 L551.6,302.0 L554.6,299.7 L557.6,301.4 L560.6,299.1 L563.6,300.9 L566.6,298.6 L569.6,300.2 L572.6,297.9 L575.6,299.6 L578.6,297.3 L581.6,298.9 L584.6,296.5 L587.6,298.1 L590.6,295.8 L593.6,297.3 L596.6,294.9 L599.6,296.5 L602.6,294.1 L605.6,295.6 L608.6,293.1 L611.6,294.7 L614.6,292.2 L617.6,293.6 L620.6,291.1 L623.6,292.6 L626.6,290.0 L629.6,291.4 L632.6,288.8 L635.6,290.1 L638.6,287.5 L641.6,288.8 L644.6,286.0 L647.6,287.3 L650.6,284.5 L653.6,285.7 L656.6,282.9 L659.6,283.9 L662.6,281.0 L665.6,282.0 L668.6,278.9 L671.6,279.7 L674.6,276.5 L677.6,277.1 L680.6,273.6 L683.6,273.8 L686.6,269.8 L689.6,269.2 L692.6,263.2M200.5,256.6 L203.5,265.4 L206.5,266.2 L209.5,270.4 L212.5,270.2 L215.5,273.7 L218.5,273.1 L221.5,276.4 L224.5,275.5 L227.5,278.6 L230.5,277.6 L233.5,280.6 L236.5,279.5 L239.5,282.3 L242.5,281.1 L245.5,283.9 L248.5,282.6 L251.5,285.3 L254.5,284.0 L257.5,286.7 L260.5,285.3 L263.5,287.9 L266.5,286.5 L269.5,289.0 L272.5,287.6 L275.5,290.1 L278.5,288.6 L281.5,291.1 L284.5,289.6 L287.5,292.0 L290.5,290.5 L293.5,292.9 L296.5,291.3 L299.5,293.7 L302.5,292.1 L305.5,294.5 L308.5,292.8 L311.5,295.2 L314.5,293.5 L317.5,295.8 L320.5,294.2 L323.5,296.5 L326.5,294.8 L329.5,297.1 L332.5,295.3 L335.5,297.6 L338.5,295.9 L341.5,298.1 L344.5,296.4 L347.5,298.6 L350.5,296.8 L353.5,299.0 L356.5,297.2 L359.5,299.4 L362.5,297.7 L365.5,299.8 L368.5,298.0 L371.5,300.2 L374.5,298.3 L377.5,300.5 L380.5,298.6 L383.5,300.8 L386.5,298.9 L389.5,301.0 L392.5,299.2 L395.5,301.3 L398.5,299.4 L401.5,301.5 L404.5,299.6 L407.5,301.7 L410.5,299.7 L413.5,301.8 L416.5,299.9 L419.5,301.9 L422.5,300.0 L425.5,302.0 L428.5,300.0 L431.5,302.1 L434.5,300.1 L437.5,302.1 L440.5,300.1 L443.5,302.1 L446.5,300.1 L449.5,302.1 L452.5,300.1 L455.5,302.1 L458.5,300.0 L461.5,302.0 L464.5,300.0 L467.5,301.9 L470.5,299.9 L473.5,301.8 L476.5,299.7 L479.5,301.7 L482.5,299.6 L485.5,301.5 L488.5,299.4 L491.5,301.3 L494.5,299.2 L497.5,301.1 L500.5,299.0 L503.5,300.8 L506.5,298.7 L509.5,300.6 L512.5,298.4 L515.5,300.2 L518.5,298.1 L521.5,299.9 L524.5,297.7 L527.5,299.5 L530.5,297.3 L533.5,299.1 L536.5,296.9 L539.5,298.7 L542.5,296.5 L545.5,298.2 L548.5,296.0 L551.5,297.8 L554.5,295.5 L557.5,297.2 L560.5,294.9 L563.5,296.7 L566.5,294.4 L569.5,296.0 L572.5,293.7 L575.5,295.4 L578.5,293.1 L581.5,294.7 L584.5,292.3 L587.5,294.0 L590.5,291.6 L593.5,293.2 L596.5,290.8 L599.5,292.4 L602.5,289.9 L605.5,291.5 L608.5,289.0 L611.5,290.5 L614.5,288.0 L617.5,289.5 L620.5,287.0 L623.5,288.5 L626.5,285.9 L629.5,287.3 L632.5,284.7 L635.5,286.1 L638.5,283.4 L641.5,284.8 L644.5,282.0 L647.5,283.3 L650.5,280.5 L653.5,281.7 L656.5,278.9 L659.5,280.0 L662.5,277.0 L665.5,278.0 L668.5,275.0 L671.5,275.9 L674.5,272.6 L677.5,273.3 L680.5,269.8 L683.5,270.1 L686.5,266.1 L689.5,265.6 L692.5,260.1M200.3,252.9 L203.3,261.6 L206.3,262.3 L209.3,266.4 L212.3,266.2 L215.3,269.8 L218.3,269.1 L221.3,272.4 L224.3,271.5 L227.3,274.6 L230.3,273.6 L233.3,276.5 L236.3,275.4 L239.3,278.2 L242.3,277.1 L245.3,279.8 L248.3,278.6 L251.3,281.2 L254.3,279.9 L257.3,282.6 L260.3,281.2 L263.3,283.8 L266.3,282.3 L269.3,284.9 L272.3,283.4 L275.3,285.9 L278.3,284.5 L281.3,286.9 L284.3,285.4 L287.3,287.8 L290.3,286.3 L293.3,288.7 L296.3,287.1 L299.3,289.5 L302.3,287.9 L305.3,290.3 L308.3,288.6 L311.3,291.0 L314.3,289.3 L317.3,291.6 L320.3,289.9 L323.3,292.3 L326.3,290.5 L329.3,292.8 L332.3,291.1 L335.3,293.4 L338.3,291.6 L341.3,293.9 L344.3,292.1 L347.3,294.3 L350.3,292.6 L353.3,294.8 L356.3,293.0 L359.3,295.2 L362.3,293.4 L365.3,295.6 L368.3,293.7 L371.3,295.9 L374.3,294.1 L377.3,296.2 L380.3,294.4 L383.3,296.5 L386.3,294.6 L389.3,296.8 L392.3,294.9 L395.3,297.0 L398.3,295.1 L401.3,297.2 L404.3,295.3 L407.3,297.4 L410.3,295.4 L413.3,297.5 L416.3,295.6 L419.3,297.6 L422.3,295.7 L425.3,297.7 L428.3,295.7 L431.3,297.8 L434.3,295.8 L437.3,297.8 L440.3,295.8 L443.3,297.8 L446.3,295.8 L449.3,297.8 L452.3,295.8 L455.3,297.8 L458.3,295.8 L461.3,297.7 L464.3,295.7 L467.3,297.7 L470.3,295.6 L473.3,297.5 L476.3,295.5 L479.3,297.4 L482.3,295.3 L485.3,297.2 L488.3,295.1 L491.3,297.0 L494.3,294.9 L497.3,296.8 L500.3,294.7 L503.3,296.6 L506.3,294.4 L509.3,296.3 L512.3,294.1 L515.3,296.0 L518.3,293.8 L521.3,295.6 L524.3,293.5 L527.3,295.3 L530.3,293.1 L533.3,294.9 L536.3,292.7 L539.3,294.5 L542.3,292.2 L545.3,294.0 L548.3,291.8 L551.3,293.5 L554.3,291.3 L557.3,293.0 L560.3,290.7 L563.3,292.4 L566.3,290.1 L569.3,291.8 L572.3,289.5 L575.3,291.2 L578.3,288.9 L581.3,290.5 L584.3,288.1 L587.3,289.8 L590.3,287.4 L593.3,289.0 L596.3,286.6 L599.3,288.2 L602.3,285.8 L605.3,287.3 L608.3,284.9 L611.3,286.4 L614.3,283.9 L617.3,285.4 L620.3,282.9 L623.3,284.4 L626.3,281.8 L629.3,283.2 L632.3,280.6 L635.3,282.0 L638.3,279.4 L641.3,280.7 L644.3,278.0 L647.3,279.3 L650.3,276.5 L653.3,277.7 L656.3,274.9 L659.3,276.0 L662.3,273.1 L665.3,274.1 L668.3,271.0 L671.3,272.0 L674.3,268.7 L677.3,269.4 L680.3,266.0 L683.3,266.3 L686.3,262.4 L689.3,262.0 L692.3,256.6M200.2,249.1 L203.2,257.7 L206.2,258.4 L209.2,262.5 L212.2,262.3 L215.2,265.8 L218.2,265.1 L221.2,268.4 L224.2,267.5 L227.2,270.6 L230.2,269.5 L233.2,272.5 L236.2,271.4 L239.2,274.2 L242.2,273.0 L245.2,275.7 L248.2,274.5 L251.2,277.1 L254.2,275.8 L257.2,278.4 L260.2,277.1 L263.2,279.6 L266.2,278.2 L269.2,280.8 L272.2,279.3 L275.2,281.8 L278.2,280.3 L281.2,282.8 L284.2,281.2 L287.2,283.7 L290.2,282.1 L293.2,284.5 L296.2,282.9 L299.2,285.3 L302.2,283.7 L305.2,286.0 L308.2,284.4 L311.2,286.8 L314.2,285.1 L317.2,287.4 L320.2,285.7 L323.2,288.0 L326.2,286.3 L329.2,288.6 L332.2,286.9 L335.2,289.1 L338.2,287.4 L341.2,289.6 L344.2,287.9 L347.2,290.1 L350.2,288.3 L353.2,290.5 L356.2,288.7 L359.2,290.9 L362.2,289.1 L365.2,291.3 L368.2,289.5 L371.2,291.6 L374.2,289.8 L377.2,291.9 L380.2,290.1 L383.2,292.2 L386.2,290.3 L389.2,292.5 L392.2,290.6 L395.2,292.7 L398.2,290.8 L401.2,292.9 L404.2,291.0 L407.2,293.1 L410.2,291.1 L413.2,293.2 L416.2,291.3 L419.2,293.3 L422.2,291.4 L425.2,293.4 L428.2,291.4 L431.2,293.5 L434.2,291.5 L437.2,293.5 L440.2,291.5 L443.2,293.5 L446.2,291.5 L449.2,293.5 L452.2,291.5 L455.2,293.5 L458.2,291.5 L461.2,293.4 L464.2,291.4 L467.2,293.4 L470.2,291.3 L473.2,293.2 L476.2,291.2 L479.2,293.1 L482.2,291.0 L485.2,292.9 L488.2,290.8 L491.2,292.7 L494.2,290.6 L497.2,292.5 L500.2,290.4 L503.2,292.3 L506.2,290.1 L509.2,292.0 L512.2,289.9 L515.2,291.7 L518.2,289.5 L521.2,291.4 L524.2,289.2 L527.2,291.0 L530.2,288.8 L533.2,290.6 L536.2,288.4 L539.2,290.2 L542.2,288.0 L545.2,289.8 L548.2,287.5 L551.2,289.3 L554.2,287.0 L557.2,288.8 L560.2,286.5 L563.2,288.2 L566.2,285.9 L569.2,287.6 L572.2,285.3 L575.2,287.0 L578.2,284.7 L581.2,286.3 L584.2,284.0 L587.2,285.6 L590.2,283.2 L593.2,284.8 L596.2,282.4 L599.2,284.0 L602.2,281.6 L605.2,283.2 L608.2,280.7 L611.2,282.3 L614.2,279.8 L617.2,281.3 L620.2,278.8 L623.2,280.3 L626.2,277.7 L629.2,279.1 L632.2,276.6 L635.2,277.9 L638.2,275.3 L641.2,276.6 L644.2,274.0 L647.2,275.2 L650.2,272.5 L653.2,273.7 L656.2,270.9 L659.2,272.0 L662.2,269.1 L665.2,270.2 L668.2,267.1 L671.2,268.1 L674.2,264.8 L677.2,265.6 L680.2,262.1 L683.2,262.5 L686.2,258.7 L689.2,258.4 L692.2,253.2M200.0,245.3 L203.0,253.8 L206.0,254.5 L209.0,258.6 L212.0,258.3 L215.0,261.8 L218.0,261.1 L221.0,264.4 L224.0,263.5 L227.0,266.6 L230.0,265.5 L233.0,268.4 L236.0,267.3 L239.0,270.1 L242.0,268.9 L245.0,271.6 L248.0,270.4 L251.0,273.0 L254.0,271.7 L257.0,274.3 L260.0,272.9 L263.0,275.5 L266.0,274.1 L269.0,276.6 L272.0,275.1 L275.0,277.6 L278.0,276.1 L281.0,278.6 L284.0,277.0 L287.0,279.5 L290.0,277.9 L293.0,280.3 L296.0,278.7 L299.0,281.1 L302.0,279.5 L305.0,281.8 L308.0,280.2 L311.0,282.5 L314.0,280.9 L317.0,283.2 L320.0,281.5 L323.0,283.8 L326.0,282.1 L329.0,284.3 L332.0,282.6 L335.0,284.9 L338.0,283.1 L341.0,285.4 L344.0,283.6 L347.0,285.8 L350.0,284.1 L353.0,286.3 L356.0,284.4 L359.0,286.6 L362.0,284.8 L365.0,287.0 L368.0,285.2 L371.0,287.3 L374.0,285.5 L377.0,287.7 L380.0,285.8 L383.0,287.9 L386.0,286.0 L389.0,288.2 L392.0,286.3 L395.0,288.4 L398.0,286.5 L401.0,288.6 L404.0,286.7 L407.0,288.8 L410.0,286.8 L413.0,288.9 L416.0,287.0 L419.0,289.0 L422.0,287.1 L425.0,289.1 L428.0,287.1 L431.0,289.2 L434.0,287.2 L437.0,289.2 L440.0,287.2 L443.0,289.2 L446.0,287.2 L449.0,289.2 L452.0,287.2 L455.0,289.2 L458.0,287.2 L461.0,289.1 L464.0,287.1 L467.0,289.1 L470.0,287.0 L473.0,288.9 L476.0,286.9 L479.0,288.8 L482.0,286.7 L485.0,288.6 L488.0,286.5 L491.0,288.4 L494.0,286.3 L497.0,288.2 L500.0,286.1 L503.0,288.0 L506.0,285.9 L509.0,287.7 L512.0,285.6 L515.0,287.4 L518.0,285.3 L521.0,287.1 L524.0,284.9 L527.0,286.8 L530.0,284.6 L533.0,286.4 L536.0,284.2 L539.0,286.0 L542.0,283.7 L545.0,285.5 L548.0,283.3 L551.0,285.0 L554.0,282.8 L557.0,284.5 L560.0,282.2 L563.0,284.0 L566.0,281.7 L569.0,283.4 L572.0,281.1 L575.0,282.8 L578.0,280.5 L581.0,282.1 L584.0,279.8 L587.0,281.4 L590.0,279.1 L593.0,280.7 L596.0,278.3 L599.0,279.9 L602.0,277.5 L605.0,279.0 L608.0,276.6 L611.0,278.1 L614.0,275.7 L617.0,277.2 L620.0,274.6 L623.0,276.1 L626.0,273.6 L629.0,275.0 L632.0,272.5 L635.0,273.9 L638.0,271.2 L641.0,272.6 L644.0,269.9 L647.0,271.2 L650.0,268.5 L653.0,269.7 L656.0,266.9 L659.0,268.1 L662.0,265.1 L665.0,266.2 L668.0,263.2 L671.0,264.1 L674.0,261.0 L677.0,261.7 L680.0,258.3 L683.0,258.7 L686.0,255.0 L689.0,254.8 L692.0,249.7M199.9,241.5 L202.9,249.9 L205.9,250.6 L208.9,254.7 L211.9,254.4 L214.9,257.8 L217.9,257.2 L220.9,260.4 L223.9,259.5 L226.9,262.5 L229.9,261.5 L232.9,264.4 L235.9,263.2 L238.9,266.0 L241.9,264.8 L244.9,267.5 L247.9,266.3 L250.9,268.9 L253.9,267.6 L256.9,270.2 L259.9,268.8 L262.9,271.4 L265.9,269.9 L268.9,272.5 L271.9,271.0 L274.9,273.5 L277.9,272.0 L280.9,274.4 L283.9,272.8 L286.9,275.3 L289.9,273.7 L292.9,276.1 L295.9,274.5 L298.9,276.9 L301.9,275.3 L304.9,277.6 L307.9,276.0 L310.9,278.3 L313.9,276.6 L316.9,278.9 L319.9,277.2 L322.9,279.5 L325.9,277.8 L328.9,280.1 L331.9,278.3 L334.9,280.6 L337.9,278.9 L340.9,281.1 L343.9,279.3 L346.9,281.6 L349.9,279.8 L352.9,282.0 L355.9,280.2 L358.9,282.4 L361.9,280.6 L364.9,282.7 L367.9,280.9 L370.9,283.0 L373.9,281.2 L376.9,283.4 L379.9,281.5 L382.9,283.6 L385.9,281.8 L388.9,283.9 L391.9,282.0 L394.9,284.1 L397.9,282.2 L400.9,284.3 L403.9,282.4 L406.9,284.5 L409.9,282.5 L412.9,284.6 L415.9,282.7 L418.9,284.7 L421.9,282.8 L424.9,284.8 L427.9,282.8 L430.9,284.9 L433.9,282.9 L436.9,284.9 L439.9,282.9 L442.9,284.9 L445.9,282.9 L448.9,284.9 L451.9,282.9 L454.9,284.9 L457.9,282.8 L460.9,284.8 L463.9,282.8 L466.9,284.7 L469.9,282.7 L472.9,284.6 L475.9,282.6 L478.9,284.5 L481.9,282.4 L484.9,284.3 L487.9,282.2 L490.9,284.1 L493.9,282.0 L496.9,283.9 L499.9,281.8 L502.9,283.7 L505.9,281.6 L508.9,283.4 L511.9,281.3 L514.9,283.1 L517.9,281.0 L520.9,282.8 L523.9,280.7 L526.9,282.5 L529.9,280.3 L532.9,282.1 L535.9,279.9 L538.9,281.7 L541.9,279.5 L544.9,281.2 L547.9,279.0 L550.9,280.8 L553.9,278.5 L556.9,280.3 L559.9,278.0 L562.9,279.7 L565.9,277.5 L568.9,279.2 L571.9,276.9 L574.9,278.6 L577.9,276.2 L580.9,277.9 L583.9,275.6 L586.9,277.2 L589.9,274.9 L592.9,276.5 L595.9,274.1 L598.9,275.7 L601.9,273.3 L604.9,274.9 L607.9,272.4 L610.9,274.0 L613.9,271.5 L616.9,273.0 L619.9,270.5 L622.9,272.0 L625.9,269.5 L628.9,270.9 L631.9,268.4 L634.9,269.8 L637.9,267.1 L640.9,268.5 L643.9,265.8 L646.9,267.1 L649.9,264.4 L652.9,265.7 L655.9,262.9 L658.9,264.1 L661.9,261.2 L664.9,262.3 L667.9,259.3 L670.9,260.2 L673.9,257.1 L676.9,257.9 L679.9,254.5 L682.9,255.0 L685.9,251.2 L688.9,251.1 L691.9,246.2M199.7,237.7 L202.7,246.1 L205.7,246.7 L208.7,250.7 L211.7,250.4 L214.7,253.9 L217.7,253.2 L220.7,256.4 L223.7,255.4 L226.7,258.5 L229.7,257.4 L232.7,260.3 L235.7,259.2 L238.7,262.0 L241.7,260.7 L244.7,263.4 L247.7,262.1 L250.7,264.8 L253.7,263.4 L256.7,266.1 L259.7,264.6 L262.7,267.2 L265.7,265.8 L268.7,268.3 L271.7,266.8 L274.7,269.3 L277.7,267.8 L280.7,270.2 L283.7,268.7 L286.7,271.1 L289.7,269.5 L292.7,271.9 L295.7,270.3 L298.7,272.7 L301.7,271.0 L304.7,273.4 L307.7,271.7 L310.7,274.1 L313.7,272.4 L316.7,274.7 L319.7,273.0 L322.7,275.3 L325.7,273.6 L328.7,275.8 L331.7,274.1 L334.7,276.3 L337.7,274.6 L340.7,276.8 L343.7,275.0 L346.7,277.3 L349.7,275.5 L352.7,277.7 L355.7,275.9 L358.7,278.1 L361.7,276.3 L364.7,278.4 L367.7,276.6 L370.7,278.8 L373.7,276.9 L376.7,279.1 L379.7,277.2 L382.7,279.3 L385.7,277.4 L388.7,279.6 L391.7,277.7 L394.7,279.8 L397.7,277.9 L400.7,280.0 L403.7,278.1 L406.7,280.2 L409.7,278.2 L412.7,280.3 L415.7,278.3 L418.7,280.4 L421.7,278.5 L424.7,280.5 L427.7,278.5 L430.7,280.5 L433.7,278.6 L436.7,280.6 L439.7,278.6 L442.7,280.6 L445.7,278.6 L448.7,280.6 L451.7,278.6 L454.7,280.6 L457.7,278.5 L460.7,280.5 L463.7,278.5 L466.7,280.4 L469.7,278.4 L472.7,280.3 L475.7,278.2 L478.7,280.2 L481.7,278.1 L484.7,280.0 L487.7,277.9 L490.7,279.8 L493.7,277.7 L496.7,279.6 L499.7,277.5 L502.7,279.4 L505.7,277.3 L508.7,279.1 L511.7,277.0 L514.7,278.8 L517.7,276.7 L520.7,278.5 L523.7,276.4 L526.7,278.2 L529.7,276.0 L532.7,277.8 L535.7,275.6 L538.7,277.4 L541.7,275.2 L544.7,277.0 L547.7,274.8 L550.7,276.5 L553.7,274.3 L556.7,276.0 L559.7,273.8 L562.7,275.5 L565.7,273.2 L568.7,274.9 L571.7,272.6 L574.7,274.3 L577.7,272.0 L580.7,273.7 L583.7,271.3 L586.7,273.0 L589.7,270.7 L592.7,272.3 L595.7,269.9 L598.7,271.5 L601.7,269.1 L604.7,270.7 L607.7,268.2 L610.7,269.8 L613.7,267.4 L616.7,268.9 L619.7,266.4 L622.7,267.9 L625.7,265.4 L628.7,266.8 L631.7,264.3 L634.7,265.7 L637.7,263.1 L640.7,264.4 L643.7,261.8 L646.7,263.1 L649.7,260.4 L652.7,261.6 L655.7,258.9 L658.7,260.1 L661.7,257.2 L664.7,258.3 L667.7,255.3 L670.7,256.3 L673.7,253.2 L676.7,254.0 L679.7,250.6 L682.7,251.1 L685.7,247.5 L688.7,247.4 L691.7,242.7M199.6,233.9 L202.6,242.2 L205.6,242.8 L208.6,246.8 L211.6,246.5 L214.6,249.9 L217.6,249.2 L220.6,252.4 L223.6,251.4 L226.6,254.5 L229.6,253.4 L232.6,256.3 L235.6,255.1 L238.6,257.9 L241.6,256.6 L244.6,259.3 L247.6,258.0 L250.6,260.7 L253.6,259.3 L256.6,261.9 L259.6,260.5 L262.6,263.1 L265.6,261.6 L268.6,264.1 L271.6,262.6 L274.6,265.1 L277.6,263.6 L280.6,266.0 L283.6,264.5 L286.6,266.9 L289.6,265.3 L292.6,267.7 L295.6,266.1 L298.6,268.5 L301.6,266.8 L304.6,269.1 L307.6,267.5 L310.6,269.8 L313.6,268.1 L316.6,270.4 L319.6,268.7 L322.6,271.0 L325.6,269.3 L328.6,271.6 L331.6,269.8 L334.6,272.1 L337.6,270.3 L340.6,272.5 L343.6,270.8 L346.6,273.0 L349.6,271.2 L352.6,273.4 L355.6,271.6 L358.6,273.8 L361.6,272.0 L364.6,274.1 L367.6,272.3 L370.6,274.5 L373.6,272.6 L376.6,274.8 L379.6,272.9 L382.6,275.0 L385.6,273.1 L388.6,275.3 L391.6,273.4 L394.6,275.5 L397.6,273.6 L400.6,275.7 L403.6,273.7 L406.6,275.8 L409.6,273.9 L412.6,276.0 L415.6,274.0 L418.6,276.1 L421.6,274.1 L424.6,276.2 L427.6,274.2 L430.6,276.2 L433.6,274.2 L436.6,276.3 L439.6,274.3 L442.6,276.3 L445.6,274.3 L448.6,276.3 L451.6,274.3 L454.6,276.2 L457.6,274.2 L460.6,276.2 L463.6,274.1 L466.6,276.1 L469.6,274.0 L472.6,276.0 L475.6,273.9 L478.6,275.9 L481.6,273.8 L484.6,275.7 L487.6,273.6 L490.6,275.5 L493.6,273.4 L496.6,275.3 L499.6,273.2 L502.6,275.1 L505.6,273.0 L508.6,274.8 L511.6,272.7 L514.6,274.5 L517.6,272.4 L520.6,274.2 L523.6,272.1 L526.6,273.9 L529.6,271.7 L532.6,273.5 L535.6,271.3 L538.6,273.2 L541.6,270.9 L544.6,272.7 L547.6,270.5 L550.6,272.3 L553.6,270.0 L556.6,271.8 L559.6,269.5 L562.6,271.2 L565.6,269.0 L568.6,270.7 L571.6,268.4 L574.6,270.1 L577.6,267.8 L580.6,269.5 L583.6,267.1 L586.6,268.8 L589.6,266.4 L592.6,268.1 L595.6,265.7 L598.6,267.3 L601.6,264.9 L604.6,266.5 L607.6,264.1 L610.6,265.6 L613.6,263.2 L616.6,264.7 L619.6,262.2 L622.6,263.8 L625.6,261.2 L628.6,262.7 L631.6,260.1 L634.6,261.6 L637.6,259.0 L640.6,260.4 L643.6,257.7 L646.6,259.0 L649.6,256.3 L652.6,257.6 L655.6,254.8 L658.6,256.1 L661.6,253.2 L664.6,254.3 L667.6,251.3 L670.6,252.3 L673.6,249.2 L676.6,250.1 L679.6,246.8 L682.6,247.3 L685.6,243.7 L688.6,243.7 L691.6,239.2 L694.6,235.7M199.4,230.1 L202.4,238.3 L205.4,238.9 L208.4,242.8 L211.4,242.5 L214.4,245.9 L217.4,245.2 L220.4,248.4 L223.4,247.4 L226.4,250.4 L229.4,249.3 L232.4,252.2 L235.4,251.0 L238.4,253.8 L241.4,252.5 L244.4,255.2 L247.4,253.9 L250.4,256.6 L253.4,255.2 L256.4,257.8 L259.4,256.3 L262.4,258.9 L265.4,257.4 L268.4,259.9 L271.4,258.4 L274.4,260.9 L277.4,259.4 L280.4,261.8 L283.4,260.2 L286.4,262.7 L289.4,261.1 L292.4,263.5 L295.4,261.8 L298.4,264.2 L301.4,262.6 L304.4,264.9 L307.4,263.2 L310.4,265.6 L313.4,263.9 L316.4,266.2 L319.4,264.5 L322.4,266.8 L325.4,265.0 L328.4,267.3 L331.4,265.5 L334.4,267.8 L337.4,266.0 L340.4,268.3 L343.4,266.5 L346.4,268.7 L349.4,266.9 L352.4,269.1 L355.4,267.3 L358.4,269.5 L361.4,267.7 L364.4,269.8 L367.4,268.0 L370.4,270.1 L373.4,268.3 L376.4,270.4 L379.4,268.6 L382.4,270.7 L385.4,268.8 L388.4,270.9 L391.4,269.1 L394.4,271.2 L397.4,269.2 L400.4,271.3 L403.4,269.4 L406.4,271.5 L409.4,269.6 L412.4,271.6 L415.4,269.7 L418.4,271.7 L421.4,269.8 L424.4,271.8 L427.4,269.9 L430.4,271.9 L433.4,269.9 L436.4,271.9 L439.4,269.9 L442.4,271.9 L445.4,269.9 L448.4,271.9 L451.4,269.9 L454.4,271.9 L457.4,269.9 L460.4,271.8 L463.4,269.8 L466.4,271.8 L469.4,269.7 L472.4,271.7 L475.4,269.6 L478.4,271.5 L481.4,269.5 L484.4,271.4 L487.4,269.3 L490.4,271.2 L493.4,269.1 L496.4,271.0 L499.4,268.9 L502.4,270.8 L505.4,268.7 L508.4,270.5 L511.4,268.4 L514.4,270.2 L517.4,268.1 L520.4,269.9 L523.4,267.8 L526.4,269.6 L529.4,267.4 L532.4,269.2 L535.4,267.1 L538.4,268.9 L541.4,266.7 L544.4,268.4 L547.4,266.2 L550.4,268.0 L553.4,265.8 L556.4,267.5 L559.4,265.2 L562.4,267.0 L565.4,264.7 L568.4,266.4 L571.4,264.1 L574.4,265.9 L577.4,263.6 L580.4,265.2 L583.4,262.9 L586.4,264.6 L589.4,262.2 L592.4,263.9 L595.4,261.5 L598.4,263.1 L601.4,260.7 L604.4,262.3 L607.4,259.9 L610.4,261.5 L613.4,259.0 L616.4,260.6 L619.4,258.1 L622.4,259.6 L625.4,257.1 L628.4,258.6 L631.4,256.0 L634.4,257.5 L637.4,254.9 L640.4,256.3 L643.4,253.6 L646.4,255.0 L649.4,252.3 L652.4,253.6 L655.4,250.8 L658.4,252.0 L661.4,249.2 L664.4,250.3 L667.4,247.4 L670.4,248.4 L673.4,245.3 L676.4,246.2 L679.4,242.9 L682.4,243.5 L685.4,239.9 L688.4,240.0 L691.4,235.5 L694.4,233.2M199.3,226.3 L202.3,234.4 L205.3,234.9 L208.3,238.9 L211.3,238.5 L214.3,241.9 L217.3,241.2 L220.3,244.3 L223.3,243.3 L226.3,246.4 L229.3,245.2 L232.3,248.1 L235.3,246.9 L238.3,249.7 L241.3,248.4 L244.3,251.1 L247.3,249.8 L250.3,252.4 L253.3,251.0 L256.3,253.6 L259.3,252.2 L262.3,254.7 L265.3,253.3 L268.3,255.8 L271.3,254.2 L274.3,256.7 L277.3,255.2 L280.3,257.6 L283.3,256.0 L286.3,258.5 L289.3,256.9 L292.3,259.2 L295.3,257.6 L298.3,260.0 L301.3,258.3 L304.3,260.7 L307.3,259.0 L310.3,261.3 L313.3,259.6 L316.3,261.9 L319.3,260.2 L322.3,262.5 L325.3,260.8 L328.3,263.0 L331.3,261.3 L334.3,263.5 L337.3,261.8 L340.3,264.0 L343.3,262.2 L346.3,264.4 L349.3,262.6 L352.3,264.8 L355.3,263.0 L358.3,265.2 L361.3,263.4 L364.3,265.5 L367.3,263.7 L370.3,265.8 L373.3,264.0 L376.3,266.1 L379.3,264.3 L382.3,266.4 L385.3,264.5 L388.3,266.6 L391.3,264.7 L394.3,266.8 L397.3,264.9 L400.3,267.0 L403.3,265.1 L406.3,267.2 L409.3,265.2 L412.3,267.3 L415.3,265.4 L418.3,267.4 L421.3,265.5 L424.3,267.5 L427.3,265.5 L430.3,267.6 L433.3,265.6 L436.3,267.6 L439.3,265.6 L442.3,267.6 L445.3,265.6 L448.3,267.6 L451.3,265.6 L454.3,267.6 L457.3,265.5 L460.3,267.5 L463.3,265.5 L466.3,267.4 L469.3,265.4 L472.3,267.3 L475.3,265.3 L478.3,267.2 L481.3,265.1 L484.3,267.1 L487.3,265.0 L490.3,266.9 L493.3,264.8 L496.3,266.7 L499.3,264.6 L502.3,266.5 L505.3,264.3 L508.3,266.2 L511.3,264.1 L514.3,265.9 L517.3,263.8 L520.3,265.6 L523.3,263.5 L526.3,265.3 L529.3,263.1 L532.3,264.9 L535.3,262.8 L538.3,264.6 L541.3,262.4 L544.3,264.1 L547.3,261.9 L550.3,263.7 L553.3,261.5 L556.3,263.2 L559.3,261.0 L562.3,262.7 L565.3,260.5 L568.3,262.2 L571.3,259.9 L574.3,261.6 L577.3,259.3 L580.3,261.0 L583.3,258.7 L586.3,260.3 L589.3,258.0 L592.3,259.7 L595.3,257.3 L598.3,258.9 L601.3,256.5 L604.3,258.1 L607.3,255.7 L610.3,257.3 L613.3,254.9 L616.3,256.4 L619.3,253.9 L622.3,255.5 L625.3,253.0 L628.3,254.4 L631.3,251.9 L634.3,253.4 L637.3,250.8 L640.3,252.2 L643.3,249.6 L646.3,250.9 L649.3,248.2 L652.3,249.5 L655.3,246.8 L658.3,248.0 L661.3,245.2 L664.3,246.3 L667.3,243.4 L670.3,244.4 L673.3,241.4 L676.3,242.3 L679.3,239.0 L682.3,239.7 L685.3,236.1 L688.3,236.2 L691.3,231.9 L694.3,230.0M199.1,222.4 L202.1,230.5 L205.1,231.0 L208.1,234.9 L211.1,234.5 L214.1,237.9 L217.1,237.1 L220.1,240.3 L223.1,239.3 L226.1,242.3 L229.1,241.2 L232.1,244.0 L235.1,242.8 L238.1,245.6 L241.1,244.3 L244.1,247.0 L247.1,245.7 L250.1,248.3 L253.1,246.9 L256.1,249.5 L259.1,248.0 L262.1,250.6 L265.1,249.1 L268.1,251.6 L271.1,250.1 L274.1,252.5 L277.1,251.0 L280.1,253.4 L283.1,251.8 L286.1,254.2 L289.1,252.6 L292.1,255.0 L295.1,253.4 L298.1,255.7 L301.1,254.1 L304.1,256.4 L307.1,254.7 L310.1,257.1 L313.1,255.4 L316.1,257.6 L319.1,255.9 L322.1,258.2 L325.1,256.5 L328.1,258.7 L331.1,257.0 L334.1,259.2 L337.1,257.5 L340.1,259.7 L343.1,257.9 L346.1,260.1 L349.1,258.3 L352.1,260.5 L355.1,258.7 L358.1,260.9 L361.1,259.0 L364.1,261.2 L367.1,259.4 L370.1,261.5 L373.1,259.7 L376.1,261.8 L379.1,259.9 L382.1,262.1 L385.1,260.2 L388.1,262.3 L391.1,260.4 L394.1,262.5 L397.1,260.6 L400.1,262.7 L403.1,260.8 L406.1,262.8 L409.1,260.9 L412.1,263.0 L415.1,261.0 L418.1,263.1 L421.1,261.1 L424.1,263.2 L427.1,261.2 L430.1,263.2 L433.1,261.2 L436.1,263.3 L439.1,261.3 L442.1,263.3 L445.1,261.3 L448.1,263.3 L451.1,261.3 L454.1,263.2 L457.1,261.2 L460.1,263.2 L463.1,261.1 L466.1,263.1 L469.1,261.1 L472.1,263.0 L475.1,260.9 L478.1,262.9 L481.1,260.8 L484.1,262.7 L487.1,260.6 L490.1,262.5 L493.1,260.5 L496.1,262.4 L499.1,260.3 L502.1,262.1 L505.1,260.0 L508.1,261.9 L511.1,259.8 L514.1,261.6 L517.1,259.5 L520.1,261.3 L523.1,259.2 L526.1,261.0 L529.1,258.8 L532.1,260.6 L535.1,258.5 L538.1,260.3 L541.1,258.1 L544.1,259.9 L547.1,257.6 L550.1,259.4 L553.1,257.2 L556.1,259.0 L559.1,256.7 L562.1,258.5 L565.1,256.2 L568.1,257.9 L571.1,255.6 L574.1,257.4 L577.1,255.1 L580.1,256.8 L583.1,254.4 L586.1,256.1 L589.1,253.8 L592.1,255.4 L595.1,253.1 L598.1,254.7 L601.1,252.3 L604.1,253.9 L607.1,251.5 L610.1,253.1 L613.1,250.7 L616.1,252.2 L619.1,249.8 L622.1,251.3 L625.1,248.8 L628.1,250.3 L631.1,247.8 L634.1,249.2 L637.1,246.6 L640.1,248.1 L643.1,245.5 L646.1,246.8 L649.1,244.2 L652.1,245.5 L655.1,242.7 L658.1,244.0 L661.1,241.2 L664.1,242.3 L667.1,239.4 L670.1,240.5 L673.1,237.5 L676.1,238.3 L679.1,235.1 L682.1,235.8 L685.1,232.3 L688.1,232.5 L691.1,228.2 L694.1,226.7M199.0,218.6 L202.0,226.6 L205.0,227.1 L208.0,231.0 L211.0,230.6 L214.0,233.9 L217.0,233.1 L220.0,236.3 L223.0,235.3 L226.0,238.2 L229.0,237.1 L232.0,239.9 L235.0,238.7 L238.0,241.5 L241.0,240.2 L244.0,242.9 L247.0,241.5 L250.0,244.1 L253.0,242.7 L256.0,245.3 L259.0,243.9 L262.0,246.4 L265.0,244.9 L268.0,247.4 L271.0,245.9 L274.0,248.3 L277.0,246.8 L280.0,249.2 L283.0,247.6 L286.0,250.0 L289.0,248.4 L292.0,250.8 L295.0,249.1 L298.0,251.5 L301.0,249.8 L304.0,252.2 L307.0,250.5 L310.0,252.8 L313.0,251.1 L316.0,253.4 L319.0,251.7 L322.0,253.9 L325.0,252.2 L328.0,254.4 L331.0,252.7 L334.0,254.9 L337.0,253.2 L340.0,255.4 L343.0,253.6 L346.0,255.8 L349.0,254.0 L352.0,256.2 L355.0,254.4 L358.0,256.5 L361.0,254.7 L364.0,256.9 L367.0,255.0 L370.0,257.2 L373.0,255.3 L376.0,257.5 L379.0,255.6 L382.0,257.7 L385.0,255.8 L388.0,257.9 L391.0,256.1 L394.0,258.2 L397.0,256.2 L400.0,258.3 L403.0,256.4 L406.0,258.5 L409.0,256.6 L412.0,258.6 L415.0,256.7 L418.0,258.7 L421.0,256.8 L424.0,258.8 L427.0,256.8 L430.0,258.9 L433.0,256.9 L436.0,258.9 L439.0,256.9 L442.0,258.9 L445.0,256.9 L448.0,258.9 L451.0,256.9 L454.0,258.9 L457.0,256.9 L460.0,258.8 L463.0,256.8 L466.0,258.8 L469.0,256.7 L472.0,258.6 L475.0,256.6 L478.0,258.5 L481.0,256.5 L484.0,258.4 L487.0,256.3 L490.0,258.2 L493.0,256.1 L496.0,258.0 L499.0,255.9 L502.0,257.8 L505.0,255.7 L508.0,257.6 L511.0,255.4 L514.0,257.3 L517.0,255.1 L520.0,257.0 L523.0,254.8 L526.0,256.7 L529.0,254.5 L532.0,256.3 L535.0,254.2 L538.0,256.0 L541.0,253.8 L544.0,255.6 L547.0,253.3 L550.0,255.1 L553.0,252.9 L556.0,254.7 L559.0,252.4 L562.0,254.2 L565.0,251.9 L568.0,253.7 L571.0,251.4 L574.0,253.1 L577.0,250.8 L580.0,252.5 L583.0,250.2 L586.0,251.9 L589.0,249.5 L592.0,251.2 L595.0,248.8 L598.0,250.5 L601.0,248.1 L604.0,249.7 L607.0,247.3 L610.0,248.9 L613.0,246.5 L616.0,248.1 L619.0,245.6 L622.0,247.1 L625.0,244.7 L628.0,246.1 L631.0,243.6 L634.0,245.1 L637.0,242.5 L640.0,244.0 L643.0,241.4 L646.0,242.7 L649.0,240.1 L652.0,241.4 L655.0,238.7 L658.0,239.9 L661.0,237.1 L664.0,238.3 L667.0,235.4 L670.0,236.5 L673.0,233.5 L676.0,234.4 L679.0,231.2 L682.0,231.9 L685.0,228.4 L688.0,228.7 L691.0,224.5 L694.0,223.4M198.8,214.8 L201.8,222.7 L204.8,223.1 L207.8,227.0 L210.8,226.6 L213.8,229.9 L216.8,229.1 L219.8,232.2 L222.8,231.2 L225.8,234.2 L228.8,233.0 L231.8,235.9 L234.8,234.6 L237.8,237.4 L240.8,236.1 L243.8,238.7 L246.8,237.4 L249.8,240.0 L252.8,238.6 L255.8,241.1 L258.8,239.7 L261.8,242.2 L264.8,240.7 L267.8,243.2 L270.8,241.7 L273.8,244.1 L276.8,242.6 L279.8,245.0 L282.8,243.4 L285.8,245.8 L288.8,244.2 L291.8,246.5 L294.8,244.9 L297.8,247.2 L300.8,245.6 L303.8,247.9 L306.8,246.2 L309.8,248.5 L312.8,246.8 L315.8,249.1 L318.8,247.4 L321.8,249.7 L324.8,247.9 L327.8,250.2 L330.8,248.4 L333.8,250.6 L336.8,248.9 L339.8,251.1 L342.8,249.3 L345.8,251.5 L348.8,249.7 L351.8,251.9 L354.8,250.1 L357.8,252.2 L360.8,250.4 L363.8,252.6 L366.8,250.7 L369.8,252.9 L372.8,251.0 L375.8,253.1 L378.8,251.3 L381.8,253.4 L384.8,251.5 L387.8,253.6 L390.8,251.7 L393.8,253.8 L396.8,251.9 L399.8,254.0 L402.8,252.1 L405.8,254.1 L408.8,252.2 L411.8,254.3 L414.8,252.3 L417.8,254.4 L420.8,252.4 L423.8,254.5 L426.8,252.5 L429.8,254.5 L432.8,252.5 L435.8,254.6 L438.8,252.6 L441.8,254.6 L444.8,252.6 L447.8,254.6 L450.8,252.6 L453.8,254.5 L456.8,252.5 L459.8,254.5 L462.8,252.4 L465.8,254.4 L468.8,252.4 L471.8,254.3 L474.8,252.2 L477.8,254.2 L480.8,252.1 L483.8,254.0 L486.8,252.0 L489.8,253.9 L492.8,251.8 L495.8,253.7 L498.8,251.6 L501.8,253.5 L504.8,251.3 L507.8,253.2 L510.8,251.1 L513.8,253.0 L516.8,250.8 L519.8,252.7 L522.8,250.5 L525.8,252.4 L528.8,250.2 L531.8,252.0 L534.8,249.8 L537.8,251.7 L540.8,249.5 L543.8,251.3 L546.8,249.0 L549.8,250.8 L552.8,248.6 L555.8,250.4 L558.8,248.1 L561.8,249.9 L564.8,247.7 L567.8,249.4 L570.8,247.1 L573.8,248.8 L576.8,246.5 L579.8,248.3 L582.8,245.9 L585.8,247.6 L588.8,245.3 L591.8,247.0 L594.8,244.6 L597.8,246.3 L600.8,243.9 L603.8,245.5 L606.8,243.1 L609.8,244.7 L612.8,242.3 L615.8,243.9 L618.8,241.4 L621.8,243.0 L624.8,240.5 L627.8,242.0 L630.8,239.5 L633.8,241.0 L636.8,238.4 L639.8,239.8 L642.8,237.3 L645.8,238.6 L648.8,236.0 L651.8,237.3 L654.8,234.6 L657.8,235.9 L660.8,233.1 L663.8,234.3 L666.8,231.4 L669.8,232.5 L672.8,229.6 L675.8,230.5 L678.8,227.3 L681.8,228.0 L684.8,224.6 L687.8,224.9 L690.8,220.8 L693.8,219.9M198.7,210.9 L201.7,218.8 L204.7,219.2 L207.7,223.0 L210.7,222.6 L213.7,225.9 L216.7,225.1 L219.7,228.2 L222.7,227.1 L225.7,230.1 L228.7,228.9 L231.7,231.8 L234.7,230.5 L237.7,233.2 L240.7,231.9 L243.7,234.6 L246.7,233.2 L249.7,235.8 L252.7,234.4 L255.7,237.0 L258.7,235.5 L261.7,238.0 L264.7,236.5 L267.7,239.0 L270.7,237.5 L273.7,239.9 L276.7,238.4 L279.7,240.8 L282.7,239.2 L285.7,241.5 L288.7,239.9 L291.7,242.3 L294.7,240.6 L297.7,243.0 L300.7,241.3 L303.7,243.6 L306.7,241.9 L309.7,244.3 L312.7,242.5 L315.7,244.8 L318.7,243.1 L321.7,245.4 L324.7,243.6 L327.7,245.9 L330.7,244.1 L333.7,246.3 L336.7,244.6 L339.7,246.8 L342.7,245.0 L345.7,247.2 L348.7,245.4 L351.7,247.6 L354.7,245.7 L357.7,247.9 L360.7,246.1 L363.7,248.2 L366.7,246.4 L369.7,248.5 L372.7,246.7 L375.7,248.8 L378.7,246.9 L381.7,249.0 L384.7,247.1 L387.7,249.3 L390.7,247.4 L393.7,249.5 L396.7,247.5 L399.7,249.6 L402.7,247.7 L405.7,249.8 L408.7,247.9 L411.7,249.9 L414.7,248.0 L417.7,250.0 L420.7,248.1 L423.7,250.1 L426.7,248.1 L429.7,250.1 L432.7,248.2 L435.7,250.2 L438.7,248.2 L441.7,250.2 L444.7,248.2 L447.7,250.2 L450.7,248.2 L453.7,250.2 L456.7,248.1 L459.7,250.1 L462.7,248.1 L465.7,250.0 L468.7,248.0 L471.7,249.9 L474.7,247.9 L477.7,249.8 L480.7,247.8 L483.7,249.7 L486.7,247.6 L489.7,249.5 L492.7,247.4 L495.7,249.3 L498.7,247.2 L501.7,249.1 L504.7,247.0 L507.7,248.9 L510.7,246.8 L513.7,248.6 L516.7,246.5 L519.7,248.3 L522.7,246.2 L525.7,248.0 L528.7,245.9 L531.7,247.7 L534.7,245.5 L537.7,247.3 L540.7,245.2 L543.7,246.9 L546.7,244.7 L549.7,246.5 L552.7,244.3 L555.7,246.1 L558.7,243.8 L561.7,245.6 L564.7,243.4 L567.7,245.1 L570.7,242.8 L573.7,244.6 L576.7,242.3 L579.7,244.0 L582.7,241.7 L585.7,243.4 L588.7,241.1 L591.7,242.7 L594.7,240.4 L597.7,242.0 L600.7,239.7 L603.7,241.3 L606.7,238.9 L609.7,240.5 L612.7,238.1 L615.7,239.7 L618.7,237.2 L621.7,238.8 L624.7,236.3 L627.7,237.8 L630.7,235.3 L633.7,236.8 L636.7,234.3 L639.7,235.7 L642.7,233.1 L645.7,234.5 L648.7,231.9 L651.7,233.3 L654.7,230.5 L657.7,231.8 L660.7,229.1 L663.7,230.3 L666.7,227.4 L669.7,228.5 L672.7,225.6 L675.7,226.5 L678.7,223.4 L681.7,224.1 L684.7,220.7 L687.7,221.1 L690.7,217.1 L693.7,216.3M198.6,207.1 L201.6,214.9 L204.6,215.2 L207.6,219.0 L210.6,218.6 L213.6,221.9 L216.6,221.0 L219.6,224.1 L222.6,223.1 L225.6,226.0 L228.6,224.8 L231.6,227.7 L234.6,226.4 L237.6,229.1 L240.6,227.8 L243.6,230.4 L246.6,229.1 L249.6,231.7 L252.6,230.2 L255.6,232.8 L258.6,231.3 L261.6,233.8 L264.6,232.3 L267.6,234.8 L270.6,233.2 L273.6,235.7 L276.6,234.1 L279.6,236.5 L282.6,234.9 L285.6,237.3 L288.6,235.7 L291.6,238.0 L294.6,236.4 L297.6,238.7 L300.6,237.1 L303.6,239.4 L306.6,237.7 L309.6,240.0 L312.6,238.3 L315.6,240.5 L318.6,238.8 L321.6,241.1 L324.6,239.3 L327.6,241.6 L330.6,239.8 L333.6,242.0 L336.6,240.2 L339.6,242.4 L342.6,240.6 L345.6,242.8 L348.6,241.0 L351.6,243.2 L354.6,241.4 L357.6,243.6 L360.6,241.7 L363.6,243.9 L366.6,242.0 L369.6,244.2 L372.6,242.3 L375.6,244.5 L378.6,242.6 L381.6,244.7 L384.6,242.8 L387.6,244.9 L390.6,243.0 L393.6,245.1 L396.6,243.2 L399.6,245.3 L402.6,243.3 L405.6,245.4 L408.6,243.5 L411.6,245.5 L414.6,243.6 L417.6,245.6 L420.6,243.7 L423.6,245.7 L426.6,243.8 L429.6,245.8 L432.6,243.8 L435.6,245.8 L438.6,243.8 L441.6,245.8 L444.6,243.8 L447.6,245.8 L450.6,243.8 L453.6,245.8 L456.6,243.8 L459.6,245.7 L462.6,243.7 L465.6,245.7 L468.6,243.6 L471.6,245.6 L474.6,243.5 L477.6,245.5 L480.6,243.4 L483.6,245.3 L486.6,243.2 L489.6,245.2 L492.6,243.1 L495.6,245.0 L498.6,242.9 L501.6,244.8 L504.6,242.7 L507.6,244.5 L510.6,242.4 L513.6,244.3 L516.6,242.1 L519.6,244.0 L522.6,241.9 L525.6,243.7 L528.6,241.5 L531.6,243.4 L534.6,241.2 L537.6,243.0 L540.6,240.8 L543.6,242.6 L546.6,240.4 L549.6,242.2 L552.6,240.0 L555.6,241.8 L558.6,239.5 L561.6,241.3 L564.6,239.1 L567.6,240.8 L570.6,238.5 L573.6,240.3 L576.6,238.0 L579.6,239.7 L582.6,237.4 L585.6,239.1 L588.6,236.8 L591.6,238.5 L594.6,236.1 L597.6,237.8 L600.6,235.4 L603.6,237.1 L606.6,234.7 L609.6,236.3 L612.6,233.9 L615.6,235.5 L618.6,233.0 L621.6,234.6 L624.6,232.2 L627.6,233.7 L630.6,231.2 L633.6,232.7 L636.6,230.1 L639.6,231.6 L642.6,229.0 L645.6,230.4 L648.6,227.8 L651.6,229.2 L654.6,226.5 L657.6,227.8 L660.6,225.0 L663.6,226.2 L666.6,223.4 L669.6,224.5 L672.6,221.6 L675.6,222.6 L678.6,219.5 L681.6,220.2 L684.6,216.9 L687.6,217.3 L690.6,213.4 L693.6,212.7M198.4,203.3 L201.4,210.9 L204.4,211.3 L207.4,215.1 L210.4,214.6 L213.4,217.8 L216.4,217.0 L219.4,220.1 L222.4,219.0 L225.4,221.9 L228.4,220.7 L231.4,223.5 L234.4,222.3 L237.4,225.0 L240.4,223.7 L243.4,226.3 L246.4,224.9 L249.4,227.5 L252.4,226.1 L255.4,228.6 L258.4,227.1 L261.4,229.6 L264.4,228.1 L267.4,230.6 L270.4,229.0 L273.4,231.5 L276.4,229.9 L279.4,232.3 L282.4,230.7 L285.4,233.1 L288.4,231.4 L291.4,233.8 L294.4,232.1 L297.4,234.5 L300.4,232.8 L303.4,235.1 L306.4,233.4 L309.4,235.7 L312.4,234.0 L315.4,236.2 L318.4,234.5 L321.4,236.8 L324.4,235.0 L327.4,237.2 L330.4,235.5 L333.4,237.7 L336.4,235.9 L339.4,238.1 L342.4,236.3 L345.4,238.5 L348.4,236.7 L351.4,238.9 L354.4,237.1 L357.4,239.2 L360.4,237.4 L363.4,239.6 L366.4,237.7 L369.4,239.8 L372.4,238.0 L375.4,240.1 L378.4,238.2 L381.4,240.3 L384.4,238.4 L387.4,240.5 L390.4,238.7 L393.4,240.7 L396.4,238.8 L399.4,240.9 L402.4,239.0 L405.4,241.1 L408.4,239.1 L411.4,241.2 L414.4,239.2 L417.4,241.3 L420.4,239.3 L423.4,241.4 L426.4,239.4 L429.4,241.4 L432.4,239.4 L435.4,241.5 L438.4,239.5 L441.4,241.5 L444.4,239.5 L447.4,241.5 L450.4,239.5 L453.4,241.4 L456.4,239.4 L459.4,241.4 L462.4,239.3 L465.4,241.3 L468.4,239.3 L471.4,241.2 L474.4,239.2 L477.4,241.1 L480.4,239.0 L483.4,241.0 L486.4,238.9 L489.4,240.8 L492.4,238.7 L495.4,240.6 L498.4,238.5 L501.4,240.4 L504.4,238.3 L507.4,240.2 L510.4,238.1 L513.4,239.9 L516.4,237.8 L519.4,239.7 L522.4,237.5 L525.4,239.4 L528.4,237.2 L531.4,239.0 L534.4,236.9 L537.4,238.7 L540.4,236.5 L543.4,238.3 L546.4,236.1 L549.4,237.9 L552.4,235.7 L555.4,237.5 L558.4,235.2 L561.4,237.0 L564.4,234.8 L567.4,236.5 L570.4,234.3 L573.4,236.0 L576.4,233.7 L579.4,235.5 L582.4,233.1 L585.4,234.8 L588.4,232.5 L591.4,234.2 L594.4,231.9 L597.4,233.5 L600.4,231.2 L603.4,232.8 L606.4,230.5 L609.4,232.1 L612.4,229.7 L615.4,231.3 L618.4,228.8 L621.4,230.4 L624.4,228.0 L627.4,229.5 L630.4,227.0 L633.4,228.5 L636.4,226.0 L639.4,227.4 L642.4,224.9 L645.4,226.3 L648.4,223.7 L651.4,225.1 L654.4,222.4 L657.4,223.7 L660.4,221.0 L663.4,222.2 L666.4,219.4 L669.4,220.5 L672.4,217.6 L675.4,218.6 L678.4,215.5 L681.4,216.3 L684.4,213.0 L687.4,213.5 L690.4,209.7 L693.4,209.2M198.3,199.4 L201.3,207.0 L204.3,207.3 L207.3,211.1 L210.3,210.6 L213.3,213.8 L216.3,212.9 L219.3,216.0 L222.3,214.9 L225.3,217.8 L228.3,216.6 L231.3,219.4 L234.3,218.2 L237.3,220.9 L240.3,219.5 L243.3,222.1 L246.3,220.8 L249.3,223.3 L252.3,221.9 L255.3,224.4 L258.3,222.9 L261.3,225.4 L264.3,223.9 L267.3,226.4 L270.3,224.8 L273.3,227.2 L276.3,225.7 L279.3,228.0 L282.3,226.4 L285.3,228.8 L288.3,227.2 L291.3,229.5 L294.3,227.8 L297.3,230.2 L300.3,228.5 L303.3,230.8 L306.3,229.1 L309.3,231.4 L312.3,229.7 L315.3,231.9 L318.3,230.2 L321.3,232.5 L324.3,230.7 L327.3,232.9 L330.3,231.2 L333.3,233.4 L336.3,231.6 L339.3,233.8 L342.3,232.0 L345.3,234.2 L348.3,232.4 L351.3,234.6 L354.3,232.7 L357.3,234.9 L360.3,233.0 L363.3,235.2 L366.3,233.3 L369.3,235.5 L372.3,233.6 L375.3,235.7 L378.3,233.9 L381.3,236.0 L384.3,234.1 L387.3,236.2 L390.3,234.3 L393.3,236.4 L396.3,234.5 L399.3,236.5 L402.3,234.6 L405.3,236.7 L408.3,234.8 L411.3,236.8 L414.3,234.8 L417.3,236.9 L420.3,234.9 L423.3,237.0 L426.3,235.0 L429.3,237.0 L432.3,235.1 L435.3,237.1 L438.3,235.1 L441.3,237.1 L444.3,235.1 L447.3,237.1 L450.3,235.1 L453.3,237.1 L456.3,235.0 L459.3,237.0 L462.3,235.0 L465.3,236.9 L468.3,234.9 L471.3,236.8 L474.3,234.8 L477.3,236.7 L480.3,234.7 L483.3,236.6 L486.3,234.5 L489.3,236.4 L492.3,234.3 L495.3,236.3 L498.3,234.2 L501.3,236.1 L504.3,233.9 L507.3,235.8 L510.3,233.7 L513.3,235.6 L516.3,233.4 L519.3,235.3 L522.3,233.2 L525.3,235.0 L528.3,232.9 L531.3,234.7 L534.3,232.5 L537.3,234.4 L540.3,232.2 L543.3,234.0 L546.3,231.8 L549.3,233.6 L552.3,231.4 L555.3,233.2 L558.3,230.9 L561.3,232.7 L564.3,230.5 L567.3,232.2 L570.3,230.0 L573.3,231.7 L576.3,229.4 L579.3,231.2 L582.3,228.9 L585.3,230.6 L588.3,228.3 L591.3,230.0 L594.3,227.6 L597.3,229.3 L600.3,226.9 L603.3,228.6 L606.3,226.2 L609.3,227.8 L612.3,225.5 L615.3,227.1 L618.3,224.6 L621.3,226.2 L624.3,223.8 L627.3,225.3 L630.3,222.8 L633.3,224.3 L636.3,221.8 L639.3,223.3 L642.3,220.7 L645.3,222.2 L648.3,219.6 L651.3,221.0 L654.3,218.3 L657.3,219.6 L660.3,216.9 L663.3,218.1 L666.3,215.4 L669.3,216.5 L672.3,213.6 L675.3,214.6 L678.3,211.6 L681.3,212.4 L684.3,209.1 L687.3,209.7 L690.3,205.9 L693.3,205.6M198.1,195.6 L201.1,203.1 L204.1,203.3 L207.1,207.1 L210.1,206.5 L213.1,209.8 L216.1,208.9 L219.1,211.9 L222.1,210.8 L225.1,213.7 L228.1,212.5 L231.1,215.3 L234.1,214.0 L237.1,216.7 L240.1,215.4 L243.1,218.0 L246.1,216.6 L249.1,219.2 L252.1,217.7 L255.1,220.2 L258.1,218.7 L261.1,221.2 L264.1,219.7 L267.1,222.1 L270.1,220.6 L273.1,223.0 L276.1,221.4 L279.1,223.8 L282.1,222.2 L285.1,224.5 L288.1,222.9 L291.1,225.2 L294.1,223.6 L297.1,225.9 L300.1,224.2 L303.1,226.5 L306.1,224.8 L309.1,227.1 L312.1,225.4 L315.1,227.6 L318.1,225.9 L321.1,228.1 L324.1,226.4 L327.1,228.6 L330.1,226.8 L333.1,229.0 L336.1,227.3 L339.1,229.5 L342.1,227.7 L345.1,229.8 L348.1,228.0 L351.1,230.2 L354.1,228.4 L357.1,230.5 L360.1,228.7 L363.1,230.8 L366.1,229.0 L369.1,231.1 L372.1,229.2 L375.1,231.4 L378.1,229.5 L381.1,231.6 L384.1,229.7 L387.1,231.8 L390.1,229.9 L393.1,232.0 L396.1,230.1 L399.1,232.2 L402.1,230.2 L405.1,232.3 L408.1,230.4 L411.1,232.4 L414.1,230.5 L417.1,232.5 L420.1,230.6 L423.1,232.6 L426.1,230.6 L429.1,232.6 L432.1,230.7 L435.1,232.7 L438.1,230.7 L441.1,232.7 L444.1,230.7 L447.1,232.7 L450.1,230.7 L453.1,232.7 L456.1,230.6 L459.1,232.6 L462.1,230.6 L465.1,232.6 L468.1,230.5 L471.1,232.5 L474.1,230.4 L477.1,232.3 L480.1,230.3 L483.1,232.2 L486.1,230.1 L489.1,232.1 L492.1,230.0 L495.1,231.9 L498.1,229.8 L501.1,231.7 L504.1,229.6 L507.1,231.5 L510.1,229.4 L513.1,231.2 L516.1,229.1 L519.1,230.9 L522.1,228.8 L525.1,230.7 L528.1,228.5 L531.1,230.3 L534.1,228.2 L537.1,230.0 L540.1,227.8 L543.1,229.6 L546.1,227.4 L549.1,229.3 L552.1,227.1 L555.1,228.8 L558.1,226.6 L561.1,228.4 L564.1,226.2 L567.1,227.9 L570.1,225.7 L573.1,227.4 L576.1,225.1 L579.1,226.9 L582.1,224.6 L585.1,226.3 L588.1,224.0 L591.1,225.7 L594.1,223.4 L597.1,225.0 L600.1,222.7 L603.1,224.4 L606.1,222.0 L609.1,223.6 L612.1,221.2 L615.1,222.8 L618.1,220.4 L621.1,222.0 L624.1,219.6 L627.1,221.1 L630.1,218.6 L633.1,220.2 L636.1,217.7 L639.1,219.1 L642.1,216.6 L645.1,218.0 L648.1,215.4 L651.1,216.8 L654.1,214.2 L657.1,215.5 L660.1,212.8 L663.1,214.1 L666.1,211.3 L669.1,212.5 L672.1,209.6 L675.1,210.6 L678.1,207.6 L681.1,208.5 L684.1,205.2 L687.1,205.8 L690.1,202.1 L693.1,201.9 L696.1,195.6" fill="none" stroke="#3c0000" stroke-width="0.7" stroke-opacity="0.55"/><path d="M200.7,263.0 L200.8,264.6 L201.7,267.0 L203.2,269.4 L205.4,271.8 L208.4,274.1 L212.1,276.5 L216.5,278.8 L221.7,281.1 L227.7,283.3 L234.3,285.5 L241.7,287.7 L249.8,289.8 L258.6,291.7 L268.0,293.7 L278.2,295.5 L288.9,297.2 L300.3,298.8 L312.2,300.3 L324.6,301.6 L337.5,302.8 L350.8,303.9 L364.5,304.9 L378.6,305.7 L392.9,306.3 L407.4,306.8 L422.1,307.1 L437.0,307.3 L451.8,307.2 L466.6,307.1 L481.4,306.8 L496.0,306.3 L510.5,305.6 L524.6,304.8 L538.5,303.9 L552.0,302.8 L565.1,301.5 L577.7,300.2 L589.8,298.7 L601.4,297.1 L612.4,295.3 L622.8,293.5 L632.5,291.6 L641.6,289.6 L649.9,287.5 L657.6,285.3 L664.5,283.1 L670.7,280.8 L676.1,278.5 L680.8,276.1 L684.8,273.8 L688.0,271.4 L690.5,269.0 L692.2,266.6 L693.3,264.2 L693.6,261.8M200.2,251.2 L200.4,252.7 L201.2,255.0 L202.7,257.3 L205.0,259.6 L207.9,261.9 L211.6,264.1 L216.1,266.4 L221.3,268.6 L227.2,270.7 L233.9,272.9 L241.3,274.9 L249.4,276.9 L258.2,278.8 L267.7,280.7 L277.8,282.4 L288.6,284.1 L300.0,285.6 L311.9,287.0 L324.3,288.3 L337.3,289.5 L350.6,290.6 L364.4,291.5 L378.4,292.2 L392.8,292.8 L407.4,293.3 L422.1,293.6 L437.0,293.8 L451.8,293.8 L466.7,293.6 L481.5,293.3 L496.2,292.8 L510.6,292.2 L524.8,291.4 L538.7,290.5 L552.2,289.4 L565.4,288.2 L578.0,286.9 L590.2,285.4 L601.8,283.9 L612.8,282.2 L623.2,280.4 L632.9,278.6 L642.0,276.6 L650.4,274.6 L658.0,272.5 L665.0,270.4 L671.2,268.2 L676.6,266.0 L681.3,263.7 L685.3,261.4 L688.5,259.1 L691.0,256.8 L692.7,254.5 L693.8,252.2 L694.1,249.9M199.1,221.2 L199.2,222.6 L200.0,224.7 L201.5,226.8 L203.8,228.9 L206.8,230.9 L210.5,233.0 L215.0,235.0 L220.2,237.0 L226.1,239.0 L232.8,240.9 L240.3,242.8 L248.4,244.6 L257.2,246.3 L266.8,248.0 L277.0,249.6 L287.8,251.1 L299.2,252.5 L311.2,253.8 L323.7,254.9 L336.7,256.0 L350.1,256.9 L364.0,257.7 L378.1,258.4 L392.5,259.0 L407.2,259.4 L422.0,259.7 L436.9,259.8 L451.9,259.8 L466.9,259.6 L481.7,259.3 L496.5,258.9 L511.0,258.3 L525.3,257.6 L539.3,256.7 L552.9,255.8 L566.1,254.7 L578.8,253.5 L591.0,252.2 L602.7,250.7 L613.7,249.2 L624.2,247.6 L634.0,245.9 L643.1,244.1 L651.5,242.3 L659.2,240.4 L666.2,238.4 L672.4,236.4 L677.9,234.4 L682.6,232.4 L686.6,230.3 L689.8,228.2 L692.3,226.1 L694.0,224.0 L695.0,221.9 L695.3,219.8M198.6,210.3 L198.8,211.6 L199.6,213.6 L201.1,215.6 L203.4,217.6 L206.3,219.6 L210.1,221.6 L214.5,223.6 L219.8,225.5 L225.7,227.4 L232.4,229.2 L239.9,231.0 L248.0,232.8 L256.9,234.4 L266.4,236.0 L276.7,237.5 L287.5,239.0 L298.9,240.3 L310.9,241.6 L323.5,242.7 L336.5,243.7 L350.0,244.6 L363.8,245.4 L378.0,246.0 L392.4,246.6 L407.1,247.0 L422.0,247.2 L436.9,247.3 L451.9,247.3 L466.9,247.2 L481.8,246.9 L496.6,246.4 L511.2,245.9 L525.5,245.2 L539.5,244.4 L553.1,243.4 L566.3,242.4 L579.1,241.2 L591.3,240.0 L603.0,238.6 L614.1,237.1 L624.5,235.6 L634.3,233.9 L643.5,232.2 L651.9,230.4 L659.6,228.6 L666.6,226.7 L672.8,224.8 L678.3,222.9 L683.0,220.9 L687.0,218.9 L690.2,216.9 L692.7,214.8 L694.5,212.8 L695.5,210.8 L695.8,208.8M198.2,199.3 L198.4,200.6 L199.2,202.5 L200.7,204.4 L202.9,206.4 L205.9,208.3 L209.6,210.2 L214.1,212.0 L219.4,213.9 L225.3,215.7 L232.0,217.5 L239.5,219.2 L247.7,220.9 L256.5,222.5 L266.1,224.0 L276.3,225.5 L287.2,226.8 L298.7,228.1 L310.7,229.3 L323.3,230.4 L336.3,231.4 L349.8,232.2 L363.7,233.0 L377.9,233.6 L392.4,234.1 L407.1,234.5 L422.0,234.7 L436.9,234.8 L452.0,234.8 L467.0,234.7 L481.9,234.4 L496.7,234.0 L511.3,233.4 L525.7,232.8 L539.7,232.0 L553.3,231.1 L566.6,230.1 L579.3,228.9 L591.6,227.7 L603.3,226.4 L614.4,225.0 L624.9,223.5 L634.7,221.9 L643.9,220.3 L652.3,218.6 L660.0,216.8 L667.0,215.0 L673.3,213.1 L678.8,211.3 L683.5,209.4 L687.5,207.4 L690.7,205.5 L693.2,203.6 L694.9,201.6 L696.0,199.7 L696.3,197.7" fill="none" stroke="#22e000" stroke-width="1.1" stroke-dasharray="1.5 5"/><path d="M200.2,251.2 L200.4,252.7 L201.2,255.0 L202.7,257.3 L205.0,259.6 L207.9,261.9 L211.6,264.1 L216.1,266.4 L221.3,268.6 L227.2,270.7 L233.9,272.9 L241.3,274.9 L249.4,276.9 L258.2,278.8 L267.7,280.7 L277.8,282.4 L288.6,284.1 L300.0,285.6 L311.9,287.0 L324.3,288.3 L337.3,289.5 L350.6,290.6 L364.4,291.5 L378.4,292.2 L392.8,292.8 L407.4,293.3 L422.1,293.6 L437.0,293.8 L451.8,293.8 L466.7,293.6 L481.5,293.3 L496.2,292.8 L510.6,292.2 L524.8,291.4 L538.7,290.5 L552.2,289.4 L565.4,288.2 L578.0,286.9 L590.2,285.4 L601.8,283.9 L612.8,282.2 L623.2,280.4 L632.9,278.6 L642.0,276.6 L650.4,274.6 L658.0,272.5 L665.0,270.4 L671.2,268.2 L676.6,266.0 L681.3,263.7 L685.3,261.4 L688.5,259.1 L691.0,256.8 L692.7,254.5 L693.8,252.2 L694.1,249.9M199.4,229.4 L199.5,230.9 L200.3,233.0 L201.9,235.1 L204.1,237.3 L207.1,239.4 L210.8,241.5 L215.3,243.6 L220.5,245.7 L226.4,247.7 L233.1,249.7 L240.5,251.6 L248.7,253.4 L257.5,255.2 L267.0,256.9 L277.2,258.6 L288.0,260.1 L299.4,261.5 L311.4,262.9 L323.9,264.1 L336.9,265.2 L350.3,266.1 L364.1,267.0 L378.2,267.7 L392.6,268.3 L407.2,268.7 L422.0,269.0 L436.9,269.1 L451.9,269.1 L466.8,268.9 L481.7,268.6 L496.4,268.2 L510.9,267.6 L525.2,266.8 L539.1,266.0 L552.7,265.0 L565.9,263.9 L578.6,262.6 L590.8,261.3 L602.4,259.8 L613.5,258.2 L623.9,256.6 L633.7,254.8 L642.8,253.0 L651.2,251.1 L658.9,249.2 L665.8,247.2 L672.1,245.1 L677.5,243.1 L682.2,240.9 L686.2,238.8 L689.4,236.6 L691.9,234.5 L693.7,232.3 L694.7,230.2 L695.0,228.0" fill="none" stroke="#300000" stroke-width="1.2" stroke-opacity="0.8"/><path d="M210,245v13h10v-9h-5v5M234,254v13h10v-9h-5v5M258,260v13h10v-9h-5v5M282,264v13h10v-9h-5v5M306,267v13h10v-9h-5v5M330,270v13h10v-9h-5v5M354,272v13h10v-9h-5v5M378,273v13h10v-9h-5v5M402,274v13h10v-9h-5v5M426,274v13h10v-9h-5v5M450,274v13h10v-9h-5v5M474,274v13h10v-9h-5v5M498,273v13h10v-9h-5v5M522,272v13h10v-9h-5v5M546,271v13h10v-9h-5v5M570,269v13h10v-9h-5v5M594,266v13h10v-9h-5v5M618,263v13h10v-9h-5v5M642,258v13h10v-9h-5v5M666,252v13h10v-9h-5v5" fill="none" stroke="#300000" stroke-width="1" stroke-opacity="0.45"/><path d="M219.2,715.4 L219.2,715.4 L219.6,720.6 L220.6,725.9 L222.2,731.3 L224.5,736.6 L227.5,741.8 L231.1,747.1 L235.4,752.3 L240.4,757.3 L246.1,762.3 L252.4,767.2 L259.4,772.0 L267.0,776.6 L275.2,781.0 L284.0,785.2 L293.5,789.2 L303.4,793.0 L313.9,796.6 L324.9,799.9 L336.4,802.9 L348.3,805.6 L360.5,808.0 L373.1,810.1 L386.0,811.9 L399.1,813.3 L412.4,814.4 L425.8,815.2 L439.3,815.6 L452.9,815.6 L466.4,815.3 L479.8,814.6 L493.1,813.6 L506.3,812.3 L519.2,810.6 L531.8,808.5 L544.1,806.2 L556.0,803.5 L567.5,800.5 L578.5,797.3 L589.0,793.8 L599.1,790.1 L608.5,786.1 L617.4,781.9 L625.7,777.5 L633.3,772.9 L640.3,768.2 L646.7,763.3 L652.3,758.3 L657.4,753.2 L661.7,748.0 L665.3,742.8 L668.3,737.5 L670.6,732.2 L672.2,726.9 L673.2,721.5 L673.5,716.2 L668.8,695.0 L668.8,780.0 L670.8,782.7 L670.4,788.4 L669.4,794.1 L667.8,799.8 L665.5,805.5 L662.6,811.2 L659.0,816.8 L654.7,822.3 L649.7,827.8 L644.1,833.1 L637.8,838.4 L630.9,843.4 L623.3,848.3 L615.1,853.0 L606.3,857.5 L597.0,861.8 L587.1,865.8 L576.7,869.5 L565.8,873.0 L554.4,876.2 L542.7,879.0 L530.5,881.5 L518.1,883.7 L505.4,885.5 L492.4,886.9 L479.3,888.0 L466.0,888.7 L452.7,889.1 L439.3,889.0 L426.0,888.6 L412.7,887.8 L399.6,886.6 L386.6,885.1 L373.9,883.2 L361.5,880.9 L349.4,878.3 L337.7,875.4 L326.4,872.2 L315.5,868.6 L305.2,864.8 L295.3,860.8 L286.0,856.5 L277.3,851.9 L269.1,847.2 L261.6,842.3 L254.7,837.2 L248.4,831.9 L242.8,826.6 L237.9,821.1 L233.6,815.6 L230.0,809.9 L227.1,804.3 L224.8,798.6 L223.1,792.9 L222.1,787.2 L221.8,781.5 L221.8,781.5 L224.0,790.0 L222.4,695.0Z" fill="#ff0000"/><path d="M220.6,778.0 L220.7,779.9 L221.6,787.4 L223.6,795.1 L226.8,802.6 L231.2,810.2 L236.8,817.6 L243.6,824.9 L251.5,831.9 L260.6,838.8 L270.8,845.3 L282.1,851.5 L294.5,857.3 L307.8,862.7 L322.0,867.6 L337.1,872.0 L352.9,875.8 L369.3,879.0 L386.3,881.7 L403.7,883.6 L421.4,885.0 L439.3,885.6 L457.2,885.6 L475.0,884.9 L492.7,883.5 L510.0,881.5 L526.9,878.9 L543.2,875.6 L558.9,871.7 L573.8,867.3 L587.9,862.3 L601.0,856.9 L613.2,851.1 L624.3,844.8 L634.3,838.3 L643.1,831.4 L650.8,824.3 L657.3,817.0 L662.6,809.5 L666.7,802.0 L669.6,794.4 L671.3,786.7 L671.9,779.1M220.5,773.9 L220.5,775.8 L221.4,783.3 L223.5,790.9 L226.7,798.5 L231.1,806.0 L236.6,813.4 L243.4,820.6 L251.3,827.7 L260.4,834.5 L270.7,841.0 L282.0,847.1 L294.4,852.9 L307.7,858.3 L321.9,863.2 L337.0,867.5 L352.8,871.3 L369.3,874.6 L386.3,877.2 L403.7,879.1 L421.4,880.5 L439.3,881.1 L457.2,881.1 L475.1,880.4 L492.7,879.0 L510.1,877.0 L527.0,874.4 L543.3,871.1 L559.0,867.3 L573.9,862.8 L588.0,857.9 L601.2,852.5 L613.3,846.7 L624.4,840.5 L634.4,833.9 L643.3,827.1 L651.0,820.0 L657.5,812.7 L662.8,805.3 L666.9,797.8 L669.8,790.2 L671.5,782.6 L672.1,775.0M220.3,769.8 L220.4,771.7 L221.3,779.2 L223.3,786.8 L226.5,794.3 L230.9,801.8 L236.5,809.1 L243.3,816.3 L251.2,823.4 L260.3,830.1 L270.5,836.6 L281.9,842.8 L294.2,848.5 L307.6,853.9 L321.8,858.7 L336.9,863.1 L352.8,866.9 L369.2,870.1 L386.2,872.7 L403.6,874.6 L421.4,876.0 L439.3,876.6 L457.2,876.6 L475.1,875.9 L492.8,874.5 L510.1,872.5 L527.0,869.9 L543.4,866.6 L559.1,862.8 L574.0,858.4 L588.1,853.5 L601.3,848.1 L613.5,842.3 L624.6,836.1 L634.6,829.6 L643.4,822.8 L651.1,815.7 L657.6,808.5 L662.9,801.1 L667.0,793.6 L669.9,786.1 L671.7,778.5 L672.3,771.0M220.2,765.8 L220.2,767.6 L221.1,775.1 L223.1,782.6 L226.4,790.1 L230.7,797.6 L236.3,804.9 L243.1,812.1 L251.1,819.1 L260.2,825.8 L270.4,832.3 L281.7,838.4 L294.1,844.1 L307.5,849.4 L321.8,854.3 L336.9,858.6 L352.7,862.4 L369.2,865.6 L386.2,868.2 L403.6,870.1 L421.4,871.4 L439.3,872.1 L457.2,872.1 L475.1,871.4 L492.8,870.0 L510.2,868.0 L527.1,865.4 L543.5,862.1 L559.2,858.3 L574.2,853.9 L588.3,849.1 L601.4,843.7 L613.6,837.9 L624.7,831.8 L634.7,825.3 L643.6,818.5 L651.3,811.5 L657.8,804.2 L663.1,796.9 L667.2,789.4 L670.1,781.9 L671.9,774.4 L672.4,766.9M220.0,761.7 L220.1,763.5 L220.9,771.0 L223.0,778.5 L226.2,785.9 L230.6,793.3 L236.2,800.6 L243.0,807.8 L250.9,814.7 L260.0,821.5 L270.3,827.9 L281.6,834.0 L294.0,839.7 L307.4,845.0 L321.7,849.8 L336.8,854.1 L352.6,857.9 L369.1,861.1 L386.1,863.6 L403.6,865.6 L421.3,866.9 L439.3,867.5 L457.2,867.5 L475.2,866.8 L492.9,865.5 L510.2,863.5 L527.2,860.9 L543.6,857.6 L559.3,853.8 L574.3,849.5 L588.4,844.6 L601.6,839.3 L613.7,833.5 L624.9,827.4 L634.9,820.9 L643.8,814.2 L651.5,807.2 L658.0,800.0 L663.3,792.7 L667.4,785.2 L670.3,777.7 L672.0,770.2 L672.6,762.8M219.9,757.6 L219.9,759.4 L220.8,766.9 L222.8,774.3 L226.0,781.7 L230.4,789.1 L236.0,796.4 L242.8,803.5 L250.8,810.4 L259.9,817.1 L270.2,823.5 L281.5,829.6 L293.9,835.3 L307.3,840.5 L321.6,845.3 L336.7,849.6 L352.6,853.4 L369.1,856.6 L386.1,859.1 L403.6,861.1 L421.3,862.4 L439.3,863.0 L457.3,863.0 L475.2,862.3 L492.9,861.0 L510.3,859.0 L527.3,856.4 L543.7,853.1 L559.4,849.3 L574.4,845.0 L588.5,840.2 L601.7,834.9 L613.9,829.1 L625.0,823.0 L635.0,816.6 L643.9,809.8 L651.6,802.9 L658.1,795.7 L663.4,788.4 L667.6,781.0 L670.5,773.6 L672.2,766.1 L672.8,758.6M219.7,753.5 L219.7,755.3 L220.6,762.7 L222.7,770.1 L225.9,777.5 L230.3,784.9 L235.9,792.1 L242.7,799.2 L250.6,806.1 L259.8,812.8 L270.0,819.1 L281.4,825.2 L293.8,830.8 L307.2,836.1 L321.5,840.9 L336.6,845.1 L352.5,848.9 L369.0,852.0 L386.1,854.6 L403.5,856.5 L421.3,857.8 L439.3,858.5 L457.3,858.4 L475.2,857.7 L492.9,856.4 L510.4,854.4 L527.3,851.8 L543.7,848.6 L559.5,844.8 L574.5,840.5 L588.6,835.7 L601.8,830.4 L614.0,824.7 L625.2,818.6 L635.2,812.2 L644.1,805.5 L651.8,798.6 L658.3,791.4 L663.6,784.2 L667.7,776.8 L670.6,769.4 L672.4,761.9 L673.0,754.5M219.5,749.4 L219.6,751.2 L220.5,758.6 L222.5,766.0 L225.7,773.3 L230.1,780.6 L235.7,787.8 L242.5,794.9 L250.5,801.8 L259.6,808.4 L269.9,814.8 L281.3,820.8 L293.7,826.4 L307.1,831.6 L321.4,836.4 L336.5,840.6 L352.4,844.4 L369.0,847.5 L386.0,850.1 L403.5,852.0 L421.3,853.3 L439.3,853.9 L457.3,853.9 L475.2,853.2 L493.0,851.9 L510.4,849.9 L527.4,847.3 L543.8,844.1 L559.6,840.3 L574.6,836.0 L588.7,831.2 L602.0,826.0 L614.2,820.3 L625.3,814.2 L635.4,807.8 L644.2,801.2 L652.0,794.3 L658.5,787.2 L663.8,779.9 L667.9,772.6 L670.8,765.2 L672.5,757.8 L673.1,750.4M219.4,745.3 L219.4,747.1 L220.3,754.4 L222.3,761.8 L225.6,769.1 L230.0,776.4 L235.6,783.6 L242.4,790.6 L250.3,797.4 L259.5,804.0 L269.8,810.4 L281.1,816.4 L293.6,822.0 L307.0,827.2 L321.3,831.9 L336.4,836.1 L352.3,839.8 L368.9,843.0 L386.0,845.5 L403.5,847.4 L421.3,848.7 L439.3,849.3 L457.3,849.3 L475.3,848.6 L493.0,847.3 L510.5,845.3 L527.5,842.8 L543.9,839.6 L559.7,835.8 L574.7,831.6 L588.9,826.8 L602.1,821.5 L614.3,815.9 L625.5,809.8 L635.5,803.5 L644.4,796.8 L652.1,790.0 L658.6,782.9 L664.0,775.7 L668.1,768.4 L671.0,761.0 L672.7,753.6 L673.3,746.3M219.2,741.2 L219.3,743.0 L220.1,750.3 L222.2,757.6 L225.4,764.9 L229.8,772.1 L235.4,779.3 L242.2,786.3 L250.2,793.1 L259.3,799.7 L269.6,806.0 L281.0,811.9 L293.4,817.5 L306.9,822.7 L321.2,827.4 L336.4,831.6 L352.3,835.3 L368.8,838.4 L385.9,841.0 L403.5,842.9 L421.3,844.1 L439.3,844.8 L457.3,844.7 L475.3,844.1 L493.1,842.7 L510.5,840.8 L527.6,838.2 L544.0,835.1 L559.8,831.3 L574.8,827.1 L589.0,822.3 L602.2,817.1 L614.4,811.4 L625.6,805.4 L635.7,799.1 L644.6,792.5 L652.3,785.6 L658.8,778.6 L664.1,771.4 L668.2,764.1 L671.2,756.8 L672.9,749.5 L673.5,742.2M219.1,737.0 L219.1,738.8 L220.0,746.1 L222.0,753.4 L225.2,760.7 L229.6,767.9 L235.3,775.0 L242.1,782.0 L250.0,788.7 L259.2,795.3 L269.5,801.6 L280.9,807.5 L293.3,813.1 L306.8,818.2 L321.1,822.9 L336.3,827.1 L352.2,830.8 L368.8,833.9 L385.9,836.4 L403.4,838.3 L421.3,839.6 L439.3,840.2 L457.3,840.2 L475.3,839.5 L493.1,838.2 L510.6,836.2 L527.6,833.7 L544.1,830.5 L559.9,826.8 L574.9,822.5 L589.1,817.8 L602.4,812.6 L614.6,807.0 L625.8,801.0 L635.8,794.7 L644.7,788.1 L652.5,781.3 L659.0,774.3 L664.3,767.1 L668.4,759.9 L671.3,752.6 L673.1,745.3 L673.6,738.0M218.9,732.9 L218.9,734.7 L219.8,741.9 L221.9,749.2 L225.1,756.4 L229.5,763.6 L235.1,770.7 L241.9,777.6 L249.9,784.4 L259.1,790.9 L269.4,797.1 L280.8,803.1 L293.2,808.6 L306.6,813.7 L321.0,818.4 L336.2,822.6 L352.1,826.2 L368.7,829.3 L385.8,831.8 L403.4,833.7 L421.2,835.0 L439.3,835.6 L457.4,835.6 L475.4,834.9 L493.2,833.6 L510.7,831.7 L527.7,829.1 L544.2,826.0 L560.0,822.3 L575.0,818.0 L589.2,813.3 L602.5,808.1 L614.7,802.5 L625.9,796.6 L636.0,790.3 L644.9,783.8 L652.6,777.0 L659.2,770.0 L664.5,762.9 L668.6,755.7 L671.5,748.4 L673.2,741.1 L673.8,733.9M218.7,728.8 L218.8,730.6 L219.7,737.8 L221.7,745.0 L224.9,752.2 L229.3,759.3 L234.9,766.4 L241.7,773.3 L249.7,780.0 L258.9,786.5 L269.2,792.7 L280.6,798.6 L293.1,804.1 L306.5,809.2 L320.9,813.9 L336.1,818.0 L352.1,821.7 L368.7,824.8 L385.8,827.3 L403.4,829.1 L421.2,830.4 L439.3,831.0 L457.4,831.0 L475.4,830.3 L493.2,829.0 L510.7,827.1 L527.8,824.5 L544.3,821.4 L560.1,817.7 L575.1,813.5 L589.4,808.8 L602.6,803.7 L614.9,798.1 L626.1,792.2 L636.1,785.9 L645.1,779.4 L652.8,772.6 L659.3,765.7 L664.7,758.6 L668.8,751.4 L671.7,744.2 L673.4,736.9 L674.0,729.7M218.6,724.6 L218.6,726.4 L219.5,733.6 L221.5,740.8 L224.8,747.9 L229.2,755.1 L234.8,762.1 L241.6,769.0 L249.6,775.7 L258.8,782.1 L269.1,788.3 L280.5,794.2 L293.0,799.6 L306.4,804.7 L320.8,809.4 L336.0,813.5 L352.0,817.1 L368.6,820.2 L385.8,822.7 L403.3,824.5 L421.2,825.8 L439.3,826.4 L457.4,826.4 L475.4,825.7 L493.3,824.4 L510.8,822.5 L527.8,820.0 L544.4,816.8 L560.2,813.2 L575.3,809.0 L589.5,804.3 L602.7,799.2 L615.0,793.6 L626.2,787.7 L636.3,781.5 L645.2,775.0 L653.0,768.3 L659.5,761.4 L664.8,754.3 L668.9,747.2 L671.9,740.0 L673.6,732.7 L674.2,725.6M218.4,720.5 L218.5,722.3 L219.3,729.4 L221.4,736.6 L224.6,743.7 L229.0,750.8 L234.6,757.8 L241.4,764.6 L249.5,771.3 L258.6,777.7 L269.0,783.9 L280.4,789.7 L292.9,795.2 L306.3,800.2 L320.7,804.8 L335.9,809.0 L351.9,812.6 L368.6,815.6 L385.7,818.1 L403.3,819.9 L421.2,821.2 L439.3,821.8 L457.4,821.8 L475.5,821.1 L493.3,819.8 L510.8,817.9 L527.9,815.4 L544.4,812.3 L560.3,808.6 L575.4,804.4 L589.6,799.8 L602.9,794.7 L615.2,789.2 L626.4,783.3 L636.4,777.1 L645.4,770.6 L653.1,763.9 L659.7,757.0 L665.0,750.0 L669.1,742.9 L672.0,735.7 L673.8,728.5 L674.3,721.4M218.3,716.3 L218.3,718.1 L219.2,725.2 L221.2,732.3 L224.4,739.4 L228.9,746.5 L234.5,753.4 L241.3,760.3 L249.3,766.9 L258.5,773.3 L268.8,779.4 L280.3,785.2 L292.7,790.7 L306.2,795.7 L320.6,800.3 L335.9,804.4 L351.9,808.0 L368.5,811.0 L385.7,813.5 L403.3,815.3 L421.2,816.6 L439.3,817.2 L457.4,817.2 L475.5,816.5 L493.4,815.2 L510.9,813.3 L528.0,810.8 L544.5,807.7 L560.4,804.1 L575.5,799.9 L589.7,795.3 L603.0,790.2 L615.3,784.7 L626.5,778.8 L636.6,772.7 L645.5,766.2 L653.3,759.5 L659.8,752.7 L665.2,745.7 L669.3,738.6 L672.2,731.5 L673.9,724.3 L674.5,717.2" fill="none" stroke="#5a0000" stroke-width="0.6" stroke-opacity="0.5"/><path d="M220.6,776.2 L220.6,776.2 L220.9,781.8 L221.9,787.5 L223.5,793.2 L225.8,798.9 L228.8,804.6 L232.4,810.2 L236.7,815.7 L241.7,821.2 L247.3,826.5 L253.6,831.8 L260.5,836.9 L268.1,841.8 L276.3,846.5 L285.1,851.1 L294.4,855.4 L304.3,859.4 L314.8,863.2 L325.7,866.8 L337.1,870.0 L348.9,872.9 L361.0,875.5 L373.5,877.8 L386.3,879.7 L399.3,881.2 L412.5,882.4 L425.8,883.2 L439.3,883.6 L452.7,883.7 L466.1,883.3 L479.5,882.6 L492.7,881.5 L505.7,880.1 L518.5,878.3 L531.1,876.1 L543.3,873.6 L555.1,870.7 L566.5,867.6 L577.5,864.1 L587.9,860.4 L597.9,856.4 L607.3,852.1 L616.1,847.6 L624.4,842.9 L632.0,838.0 L638.9,833.0 L645.2,827.7 L650.9,822.4 L655.9,816.9 L660.2,811.4 L663.8,805.8 L666.8,800.1 L669.1,794.4 L670.7,788.7 L671.7,783.0 L672.0,777.3M220.3,768.9 L220.3,768.9 L220.6,774.6 L221.6,780.2 L223.3,785.9 L225.6,791.5 L228.5,797.1 L232.1,802.7 L236.4,808.2 L241.4,813.6 L247.0,818.9 L253.3,824.1 L260.3,829.2 L267.9,834.1 L276.0,838.8 L284.8,843.3 L294.2,847.5 L304.1,851.6 L314.6,855.4 L325.5,858.9 L336.9,862.1 L348.7,865.0 L360.9,867.5 L373.4,869.8 L386.2,871.7 L399.3,873.2 L412.5,874.4 L425.8,875.2 L439.3,875.6 L452.7,875.6 L466.2,875.3 L479.5,874.6 L492.8,873.5 L505.8,872.1 L518.7,870.3 L531.2,868.1 L543.4,865.6 L555.3,862.8 L566.7,859.7 L577.7,856.2 L588.2,852.5 L598.1,848.5 L607.5,844.3 L616.4,839.8 L624.6,835.2 L632.2,830.3 L639.2,825.3 L645.5,820.1 L651.2,814.8 L656.2,809.4 L660.5,803.9 L664.1,798.3 L667.1,792.7 L669.4,787.0 L671.0,781.4 L672.0,775.7 L672.3,770.0M219.0,736.1 L219.0,736.1 L219.4,741.5 L220.3,747.0 L222.0,752.5 L224.3,757.9 L227.3,763.3 L230.9,768.7 L235.2,774.0 L240.2,779.3 L245.9,784.4 L252.2,789.4 L259.2,794.3 L266.8,799.0 L275.0,803.6 L283.9,807.9 L293.3,812.1 L303.3,816.0 L313.8,819.6 L324.8,823.0 L336.3,826.1 L348.1,828.9 L360.4,831.4 L373.0,833.6 L385.9,835.4 L399.0,836.9 L412.3,838.0 L425.8,838.8 L439.3,839.2 L452.8,839.2 L466.4,838.9 L479.8,838.2 L493.1,837.2 L506.3,835.8 L519.2,834.0 L531.8,831.9 L544.1,829.5 L556.0,826.8 L567.5,823.7 L578.6,820.4 L589.1,816.8 L599.2,813.0 L608.6,808.9 L617.5,804.5 L625.8,800.0 L633.4,795.3 L640.5,790.5 L646.8,785.5 L652.5,780.3 L657.5,775.1 L661.8,769.8 L665.5,764.4 L668.5,759.0 L670.8,753.5 L672.4,748.0 L673.4,742.5 L673.7,737.1M218.7,726.9 L218.7,726.9 L219.0,732.3 L220.0,737.7 L221.6,743.1 L223.9,748.5 L226.9,753.9 L230.5,759.2 L234.9,764.5 L239.9,769.7 L245.5,774.8 L251.9,779.7 L258.9,784.6 L266.5,789.2 L274.7,793.7 L283.6,798.0 L293.0,802.1 L303.0,806.0 L313.6,809.6 L324.6,813.0 L336.1,816.0 L348.0,818.8 L360.3,821.3 L372.9,823.4 L385.8,825.2 L398.9,826.7 L412.3,827.8 L425.7,828.6 L439.3,829.0 L452.9,829.0 L466.4,828.7 L479.9,828.0 L493.2,827.0 L506.4,825.6 L519.3,823.8 L532.0,821.8 L544.3,819.4 L556.2,816.7 L567.8,813.7 L578.8,810.4 L589.4,806.8 L599.4,803.0 L608.9,798.9 L617.8,794.7 L626.1,790.2 L633.8,785.5 L640.8,780.7 L647.2,775.8 L652.9,770.7 L657.9,765.5 L662.2,760.2 L665.9,754.9 L668.8,749.5 L671.1,744.1 L672.8,738.7 L673.7,733.3 L674.1,727.9" fill="none" stroke="#20e000" stroke-width="1" stroke-dasharray="12 5"/><path d="M226,765v22M246,765v22M232,771v12M240,771v12M252,795v22M272,795v22M258,801v12M266,801v12M278,811v22M298,811v22M284,817v12M292,817v12M304,823v22M324,823v22M310,829v12M318,829v12M330,831v22M350,831v22M336,837v12M344,837v12M356,838v22M376,838v22M362,844v12M370,844v12M382,842v22M402,842v22M388,848v12M396,848v12M408,845v22M428,845v22M414,851v12M422,851v12M434,846v22M454,846v22M440,852v12M448,852v12M460,846v22M480,846v22M466,852v12M474,852v12M486,845v22M506,845v22M492,851v12M500,851v12M512,842v22M532,842v22M518,848v12M526,848v12M538,838v22M558,838v22M544,844v12M552,844v12M564,832v22M584,832v22M570,838v12M578,838v12M590,823v22M610,823v22M596,829v12M604,829v12M616,812v22M636,812v22M622,818v12M630,818v12M642,795v22M662,795v22M648,801v12M656,801v12" fill="none" stroke="#1a0000" stroke-width="1"/><path d="M226,765.5h20M232,771.5h8M232,783.5h14M252,794.5h20M258,800.5h8M258,812.5h14M278,811.5h20M284,817.5h8M284,829.5h14M304,822.5h20M310,828.5h8M310,840.5h14M330,831.5h20M336,837.5h8M336,849.5h14M356,837.5h20M362,843.5h8M362,855.5h14M382,842.5h20M388,848.5h8M388,860.5h14M408,844.5h20M414,850.5h8M414,862.5h14M434,846.5h20M440,852.5h8M440,864.5h14M460,846.5h20M466,852.5h8M466,864.5h14M486,845.5h20M492,851.5h8M492,863.5h14M512,842.5h20M518,848.5h8M518,860.5h14M538,837.5h20M544,843.5h8M544,855.5h14M564,831.5h20M570,837.5h8M570,849.5h14M590,823.5h20M596,829.5h8M596,841.5h14M616,811.5h20M622,817.5h8M622,829.5h14M642,795.5h20M648,801.5h8M648,813.5h14" fill="none" stroke="#20e000" stroke-width="1" stroke-dasharray="6 2"/><defs><linearGradient id="shade" gradientUnits="userSpaceOnUse" x1="200" y1="0" x2="696" y2="0"><stop offset="0" stop-color="#000" stop-opacity="0.22"/><stop offset="0.12" stop-color="#000" stop-opacity="0.07"/><stop offset="0.3" stop-color="#000" stop-opacity="0"/><stop offset="0.8" stop-color="#000" stop-opacity="0"/><stop offset="0.95" stop-color="#000" stop-opacity="0.15"/><stop offset="1" stop-color="#000" stop-opacity="0.3"/></linearGradient></defs><rect x="195" y="150" width="510" height="770" fill="url(#shade)"/></g>
<path d="M685.7,182.6 L687.9,183.7 L689.8,184.9 L691.5,186.1 L692.8,187.3 L693.9,188.5 L694.7,189.7 L695.2,190.9 L695.4,192.2 L695.2,193.4 L694.8,194.7 L694.0,196.0 L693.0,197.2 L691.5,198.5 L689.8,199.8 L687.8,201.0 L685.4,202.3 L682.6,203.5 L679.6,204.8 L676.2,206.0 L672.4,207.2 L668.4,208.4 L664.0,209.6 L659.2,210.8 L654.2,211.9 L648.8,213.0 L643.1,214.1 L637.1,215.2 L630.8,216.3 L624.2,217.3 L617.3,218.3 L610.1,219.2 L602.7,220.1 L595.0,221.0 L587.0,221.8 L578.8,222.6 L570.4,223.3 L561.8,224.0 L552.9,224.7 L543.9,225.3 L534.7,225.8 L525.3,226.3 L515.9,226.8 L506.2,227.2 L496.5,227.5 L486.7,227.8 L476.8,228.0 L466.9,228.2 L457.0,228.3 L447.0,228.4 L437.0,228.4 L427.0,228.3 L417.1,228.2 L407.2,228.0 L397.5,227.8 L387.7,227.5 L378.2,227.2 L368.7,226.8 L359.4,226.3 L350.2,225.8 L341.2,225.3 L332.4,224.7 L323.8,224.0 L315.4,223.4 L307.2,222.6 L299.3,221.8 L291.6,221.0 L284.2,220.2 L277.0,219.3 L270.1,218.3 L263.6,217.3 L257.3,216.3 L251.3,215.3 L245.7,214.2 L240.3,213.2 L235.3,212.0 L230.6,210.9 L226.2,209.8 L222.1,208.6 L218.4,207.4 L215.0,206.2 L211.9,205.0 L209.2,203.7 L206.8,202.5 L204.7,201.3 L203.0,200.0 L201.6,198.8 L200.5,197.5 L199.7,196.3 L199.3,195.0 L199.1,193.8 L199.3,192.5 L199.7,191.3 L200.5,190.1 L201.5,188.9 L202.9,187.7 L204.5,186.5 L206.4,185.3 L208.5,184.1 L210.9,183.0 L213.6,181.9 L216.5,180.7 L219.7,179.7 L223.1,178.6 L226.7,177.5 L230.6,176.5 L234.7,175.5 L238.9,174.5 L243.4,173.5 L248.1,172.6 L253.0,171.7 L258.0,170.8 L263.2,169.9 L268.6,169.1 L274.1,168.3 L279.8,167.5 L285.7,166.7 L291.7,166.0 L297.8,165.3 L304.1,164.6 L310.4,164.0 L316.9,163.4 L323.5,162.8 L330.2,162.3 L337.0,161.8 L343.9,161.3 L350.8,160.8 L357.9,160.4 L365.0,160.0 L372.2,159.6 L379.4,159.3 L386.7,159.0 L394.1,158.7 L401.4,158.5 L408.9,158.3 L416.3,158.1 L423.8,158.0 L431.3,157.9 L438.8,157.8 L446.3,157.7 L453.8,157.7 L461.3,157.8 L468.8,157.8 L476.3,157.9 L483.8,158.0 L491.2,158.2 L498.6,158.4 L506.0,158.6 L513.3,158.8 L520.5,159.1 L527.8,159.4 L534.9,159.8 L542.0,160.1 L549.0,160.5 L555.9,161.0 L562.7,161.5 L569.5,162.0 L576.1,162.5 L582.6,163.1 L589.1,163.7 L595.3,164.3 L601.5,164.9 L607.6,165.6 L613.5,166.3 L619.2,167.1 L624.8,167.9 L630.2,168.7 L635.5,169.5 L640.6,170.4 L645.5,171.2 L650.3,172.1 L654.8,173.1 L659.1,174.0 L663.3,175.0 L667.2,176.0 L670.8,177.1 L674.3,178.1 L677.5,179.2 L680.5,180.3 L683.2,181.4Z" fill="#ff0000"/>
<path d="M671.7,182.9 L673.7,184.0 L675.4,185.1 L676.9,186.2 L678.1,187.3 L679.1,188.5 L679.8,189.6 L680.2,190.8 L680.3,191.9 L680.1,193.1 L679.6,194.3 L678.8,195.5 L677.7,196.7 L676.3,197.8 L674.6,199.0 L672.6,200.2 L670.3,201.4 L667.7,202.5 L664.7,203.7 L661.5,204.8 L657.9,206.0 L654.1,207.1 L649.9,208.2 L645.4,209.3 L640.7,210.4 L635.6,211.4 L630.2,212.4 L624.6,213.4 L618.6,214.4 L612.4,215.3 L606.0,216.2 L599.2,217.1 L592.2,218.0 L585.0,218.8 L577.6,219.5 L569.9,220.3 L562.0,221.0 L554.0,221.6 L545.7,222.2 L537.3,222.8 L528.7,223.3 L520.0,223.7 L511.1,224.1 L502.2,224.5 L493.1,224.8 L484.0,225.1 L474.8,225.3 L465.5,225.4 L456.2,225.5 L446.9,225.6 L437.7,225.6 L428.4,225.5 L419.1,225.4 L409.9,225.3 L400.8,225.1 L391.8,224.8 L382.8,224.5 L374.0,224.1 L365.3,223.7 L356.7,223.3 L348.3,222.8 L340.1,222.2 L332.0,221.6 L324.2,221.0 L316.5,220.3 L309.1,219.6 L301.9,218.8 L295.0,218.0 L288.3,217.2 L281.8,216.3 L275.6,215.4 L269.7,214.5 L264.1,213.5 L258.7,212.5 L253.7,211.5 L248.9,210.5 L244.5,209.4 L240.3,208.4 L236.5,207.3 L232.9,206.2 L229.7,205.0 L226.7,203.9 L224.1,202.8 L221.8,201.6 L219.8,200.4 L218.1,199.3 L216.7,198.1 L215.6,196.9 L214.8,195.8 L214.3,194.6 L214.1,193.4 L214.1,192.3 L214.5,191.1 L215.2,190.0 L216.1,188.8 L217.3,187.7 L218.7,186.6 L220.4,185.5 L222.4,184.4 L224.6,183.3 L227.1,182.2 L229.8,181.2 L232.7,180.1 L235.9,179.1 L239.2,178.1 L242.8,177.1 L246.6,176.2 L250.6,175.3 L254.8,174.3 L259.1,173.5 L263.7,172.6 L268.4,171.7 L273.3,170.9 L278.4,170.1 L283.6,169.4 L288.9,168.6 L294.4,167.9 L300.1,167.2 L305.8,166.5 L311.7,165.9 L317.7,165.3 L323.9,164.7 L330.1,164.2 L336.4,163.6 L342.8,163.2 L349.3,162.7 L355.9,162.3 L362.6,161.9 L369.3,161.5 L376.1,161.1 L383.0,160.8 L389.9,160.5 L396.8,160.3 L403.8,160.0 L410.8,159.9 L417.9,159.7 L425.0,159.6 L432.1,159.5 L439.2,159.4 L446.3,159.3 L453.4,159.3 L460.5,159.4 L467.6,159.4 L474.7,159.5 L481.8,159.6 L488.8,159.7 L495.9,159.9 L502.8,160.1 L509.8,160.4 L516.6,160.6 L523.5,160.9 L530.2,161.3 L536.9,161.6 L543.5,162.0 L550.1,162.4 L556.5,162.9 L562.9,163.4 L569.1,163.9 L575.3,164.4 L581.4,165.0 L587.3,165.6 L593.1,166.2 L598.8,166.8 L604.3,167.5 L609.7,168.2 L615.0,169.0 L620.1,169.7 L625.0,170.5 L629.8,171.3 L634.4,172.2 L638.8,173.0 L643.1,173.9 L647.1,174.8 L651.0,175.8 L654.6,176.7 L658.0,177.7 L661.2,178.7 L664.2,179.7 L666.9,180.8 L669.4,181.8Z" fill="#ff0000"/>
<defs><clipPath id="topclip"><path d="M671.7,182.9 L673.7,184.0 L675.4,185.1 L676.9,186.2 L678.1,187.3 L679.1,188.5 L679.8,189.6 L680.2,190.8 L680.3,191.9 L680.1,193.1 L679.6,194.3 L678.8,195.5 L677.7,196.7 L676.3,197.8 L674.6,199.0 L672.6,200.2 L670.3,201.4 L667.7,202.5 L664.7,203.7 L661.5,204.8 L657.9,206.0 L654.1,207.1 L649.9,208.2 L645.4,209.3 L640.7,210.4 L635.6,211.4 L630.2,212.4 L624.6,213.4 L618.6,214.4 L612.4,215.3 L606.0,216.2 L599.2,217.1 L592.2,218.0 L585.0,218.8 L577.6,219.5 L569.9,220.3 L562.0,221.0 L554.0,221.6 L545.7,222.2 L537.3,222.8 L528.7,223.3 L520.0,223.7 L511.1,224.1 L502.2,224.5 L493.1,224.8 L484.0,225.1 L474.8,225.3 L465.5,225.4 L456.2,225.5 L446.9,225.6 L437.7,225.6 L428.4,225.5 L419.1,225.4 L409.9,225.3 L400.8,225.1 L391.8,224.8 L382.8,224.5 L374.0,224.1 L365.3,223.7 L356.7,223.3 L348.3,222.8 L340.1,222.2 L332.0,221.6 L324.2,221.0 L316.5,220.3 L309.1,219.6 L301.9,218.8 L295.0,218.0 L288.3,217.2 L281.8,216.3 L275.6,215.4 L269.7,214.5 L264.1,213.5 L258.7,212.5 L253.7,211.5 L248.9,210.5 L244.5,209.4 L240.3,208.4 L236.5,207.3 L232.9,206.2 L229.7,205.0 L226.7,203.9 L224.1,202.8 L221.8,201.6 L219.8,200.4 L218.1,199.3 L216.7,198.1 L215.6,196.9 L214.8,195.8 L214.3,194.6 L214.1,193.4 L214.1,192.3 L214.5,191.1 L215.2,190.0 L216.1,188.8 L217.3,187.7 L218.7,186.6 L220.4,185.5 L222.4,184.4 L224.6,183.3 L227.1,182.2 L229.8,181.2 L232.7,180.1 L235.9,179.1 L239.2,178.1 L242.8,177.1 L246.6,176.2 L250.6,175.3 L254.8,174.3 L259.1,173.5 L263.7,172.6 L268.4,171.7 L273.3,170.9 L278.4,170.1 L283.6,169.4 L288.9,168.6 L294.4,167.9 L300.1,167.2 L305.8,166.5 L311.7,165.9 L317.7,165.3 L323.9,164.7 L330.1,164.2 L336.4,163.6 L342.8,163.2 L349.3,162.7 L355.9,162.3 L362.6,161.9 L369.3,161.5 L376.1,161.1 L383.0,160.8 L389.9,160.5 L396.8,160.3 L403.8,160.0 L410.8,159.9 L417.9,159.7 L425.0,159.6 L432.1,159.5 L439.2,159.4 L446.3,159.3 L453.4,159.3 L460.5,159.4 L467.6,159.4 L474.7,159.5 L481.8,159.6 L488.8,159.7 L495.9,159.9 L502.8,160.1 L509.8,160.4 L516.6,160.6 L523.5,160.9 L530.2,161.3 L536.9,161.6 L543.5,162.0 L550.1,162.4 L556.5,162.9 L562.9,163.4 L569.1,163.9 L575.3,164.4 L581.4,165.0 L587.3,165.6 L593.1,166.2 L598.8,166.8 L604.3,167.5 L609.7,168.2 L615.0,169.0 L620.1,169.7 L625.0,170.5 L629.8,171.3 L634.4,172.2 L638.8,173.0 L643.1,173.9 L647.1,174.8 L651.0,175.8 L654.6,176.7 L658.0,177.7 L661.2,178.7 L664.2,179.7 L666.9,180.8 L669.4,181.8Z"/></clipPath></defs>
<g clip-path="url(#topclip)"><path d="M420.0,150 L389.0,232M408.2,150 L378.5,232M396.6,150 L368.2,232M385.4,150 L358.3,232M374.6,150 L348.8,232M364.0,150 L339.5,232M353.8,150 L330.6,232M343.8,150 L321.9,232M334.2,150 L313.6,232M325.0,150 L305.7,232M316.0,150 L298.0,232M307.4,150 L290.7,232M299.0,150 L283.6,232M291.0,150 L276.9,232M283.4,150 L270.6,232M276.0,150 L264.5,232M269.0,150 L258.8,232M262.2,150 L253.3,232M255.8,150 L248.2,232M249.8,150 L243.5,232M244.0,150 L239.0,232M238.6,150 L234.9,232M233.4,150 L231.0,232M228.6,150 L227.1,232M224.2,150 L222.7,232M220.0,150 L218.5,232M216.2,150 L214.7,232M212.6,150 L211.1,232M209.4,150 L207.9,232M206.6,150 L205.1,232M204.0,150 L202.5,232M201.8,150 L200.3,232M199.8,150 L198.3,232M198.2,150 L196.7,232M468.0,150 L499.0,232M479.8,150 L509.5,232M491.4,150 L519.8,232M502.6,150 L529.7,232M513.4,150 L539.2,232M524.0,150 L548.5,232M534.2,150 L557.4,232M544.2,150 L566.1,232M553.8,150 L574.4,232M563.0,150 L582.3,232M572.0,150 L590.0,232M580.6,150 L597.3,232M589.0,150 L604.4,232M597.0,150 L611.1,232M604.6,150 L617.4,232M612.0,150 L623.5,232M619.0,150 L629.2,232M625.8,150 L634.7,232M632.2,150 L639.8,232M638.2,150 L644.5,232M644.0,150 L649.0,232M649.4,150 L653.1,232M654.6,150 L657.0,232M659.4,150 L660.9,232M663.8,150 L665.3,232M668.0,150 L669.5,232M671.8,150 L673.3,232M675.4,150 L676.9,232M678.6,150 L680.1,232M681.4,150 L682.9,232M684.0,150 L685.5,232M686.2,150 L687.7,232M688.2,150 L689.7,232M689.8,150 L691.3,232" stroke="#2a0000" stroke-width="2.0" fill="none"/><path d="M420.0,150 L389.0,232M408.2,150 L378.5,232M396.6,150 L368.2,232M385.4,150 L358.3,232M374.6,150 L348.8,232M364.0,150 L339.5,232M353.8,150 L330.6,232M343.8,150 L321.9,232M334.2,150 L313.6,232M325.0,150 L305.7,232M316.0,150 L298.0,232M307.4,150 L290.7,232M299.0,150 L283.6,232M291.0,150 L276.9,232M283.4,150 L270.6,232M276.0,150 L264.5,232M269.0,150 L258.8,232M262.2,150 L253.3,232M255.8,150 L248.2,232M249.8,150 L243.5,232M244.0,150 L239.0,232M238.6,150 L234.9,232M233.4,150 L231.0,232M228.6,150 L227.1,232M224.2,150 L222.7,232M220.0,150 L218.5,232M216.2,150 L214.7,232M212.6,150 L211.1,232M209.4,150 L207.9,232M206.6,150 L205.1,232M204.0,150 L202.5,232M201.8,150 L200.3,232M199.8,150 L198.3,232M198.2,150 L196.7,232M468.0,150 L499.0,232M479.8,150 L509.5,232M491.4,150 L519.8,232M502.6,150 L529.7,232M513.4,150 L539.2,232M524.0,150 L548.5,232M534.2,150 L557.4,232M544.2,150 L566.1,232M553.8,150 L574.4,232M563.0,150 L582.3,232M572.0,150 L590.0,232M580.6,150 L597.3,232M589.0,150 L604.4,232M597.0,150 L611.1,232M604.6,150 L617.4,232M612.0,150 L623.5,232M619.0,150 L629.2,232M625.8,150 L634.7,232M632.2,150 L639.8,232M638.2,150 L644.5,232M644.0,150 L649.0,232M649.4,150 L653.1,232M654.6,150 L657.0,232M659.4,150 L660.9,232M663.8,150 L665.3,232M668.0,150 L669.5,232M671.8,150 L673.3,232M675.4,150 L676.9,232M678.6,150 L680.1,232M681.4,150 L682.9,232M684.0,150 L685.5,232M686.2,150 L687.7,232M688.2,150 L689.7,232M689.8,150 L691.3,232" stroke="#22e000" stroke-width="1.2" fill="none" stroke-dasharray="1.2 9" stroke-dashoffset="4"/><path d="M408,230 Q445,192 482,230Z" fill="#ff0000" stroke="#2a0000" stroke-width="2.6"/><path d="M398,156 Q444,184 492,156" fill="none" stroke="#2a0000" stroke-width="2"/></g>
<path d="M214.1,193.1 L214.1,193.1 L214.4,194.9 L215.4,196.6 L217.0,198.4 L219.3,200.2 L222.3,201.9 L226.0,203.6 L230.4,205.3 L235.5,207.0 L241.3,208.6 L247.8,210.2 L254.9,211.8 L262.7,213.3 L271.2,214.7 L280.2,216.1 L289.9,217.4 L300.2,218.6 L311.0,219.8 L322.3,220.8 L334.0,221.8 L346.2,222.6 L358.9,223.4 L371.8,224.0 L385.0,224.6 L398.5,225.0 L412.2,225.3 L426.1,225.5 L440.0,225.6 L453.9,225.6 L467.8,225.4 L481.7,225.1 L495.4,224.7 L508.9,224.2 L522.2,223.6 L535.1,222.9 L547.8,222.0 L560.0,221.1 L571.8,220.1 L583.2,219.0 L594.0,217.8 L604.3,216.5 L614.0,215.1 L623.1,213.7 L631.6,212.2 L639.4,210.6 L646.6,209.0 L653.1,207.4 L658.9,205.7 L664.0,204.0 L668.4,202.2 L672.1,200.5 L675.1,198.7 L677.4,197.0 L679.0,195.2 L680.0,193.4 L680.3,191.6" fill="none" stroke="#20e000" stroke-width="1.6"/>
<path d="M199.1,193.8 L199.5,191.9 L200.5,190.1 L202.2,188.3 L204.5,186.5 L207.4,184.7 L210.9,183.0 L215.1,181.3 L219.7,179.7 L224.9,178.0 L230.6,176.5 L236.8,175.0 L243.4,173.5 L250.5,172.1 L258.0,170.8 L265.9,169.5 L274.1,168.3 L282.8,167.1 L291.7,166.0 L300.9,165.0 L310.4,164.0 L320.2,163.1 L330.2,162.3 L340.4,161.5 L350.8,160.8 L361.4,160.2 L372.2,159.6 L383.1,159.1 L394.1,158.7 L405.1,158.4 L416.3,158.1 L427.5,157.9 L438.8,157.8 L450.0,157.7 L461.3,157.8 L472.6,157.9 L483.8,158.0 L494.9,158.3 L506.0,158.6 L516.9,159.0 L527.8,159.4 L538.4,159.9 L549.0,160.5 L559.3,161.2 L569.5,162.0 L579.4,162.8 L589.1,163.7 L598.5,164.6 L607.6,165.6 L616.4,166.7 L624.8,167.9 L632.9,169.1 L640.6,170.4 L647.9,171.7 L654.8,173.1 L661.2,174.5 L667.2,176.0 L672.6,177.6 L677.5,179.2 L681.9,180.9 L685.7,182.6 L688.9,184.3 L691.5,186.1 L693.4,187.9 L694.7,189.7 L695.3,191.6 L695.4,192.2" fill="none" stroke="#30d000" stroke-width="1" stroke-opacity="0.7"/>
<path d="M664.0,690.6 L666.7,695.6 L668.8,700.6 L670.3,705.7 L671.2,710.9 L671.5,716.1 L671.1,721.4 L670.2,726.7 L668.5,731.9 L666.3,737.2 L663.3,742.4 L659.7,747.6 L655.4,752.7 L650.4,757.8 L644.8,762.7 L638.5,767.6 L631.5,772.2 L623.9,776.8 L615.7,781.1 L606.9,785.3 L597.6,789.2 L587.6,792.9 L577.2,796.4 L566.2,799.6 L554.9,802.5 L543.1,805.1 L530.9,807.5 L518.4,809.5 L505.7,811.2 L492.7,812.5 L479.5,813.5 L466.2,814.2 L452.8,814.5 L439.4,814.4 L426.0,814.1 L412.7,813.3 L399.5,812.2 L386.6,810.8 L373.8,809.1 L361.4,807.0 L349.2,804.6 L337.5,801.9 L326.1,798.9 L315.2,795.7 L304.8,792.1 L295.0,788.4 L285.6,784.4 L276.9,780.2 L268.7,775.9 L261.1,771.3 L254.2,766.6 L248.0,761.8 L242.3,756.8 L237.4,751.8 L233.1,746.7 L229.5,741.5 L226.5,736.3 L224.2,731.0 L222.6,725.7 L221.6,720.5 L221.3,715.2 L221.5,710.0 L222.4,704.9 L223.9,699.8 L226.0,694.8 L228.6,689.9 L228.6,689.9" fill="none" stroke="#18e000" stroke-width="2.2"/>
<path d="M661.4,690.8 L664.0,695.6 L666.0,700.6 L667.5,705.7 L668.4,710.8 L668.7,716.0 L668.3,721.1 L667.3,726.3 L665.7,731.6 L663.4,736.8 L660.5,741.9 L656.9,747.0 L652.6,752.1 L647.7,757.1 L642.1,761.9 L635.9,766.7 L629.0,771.3 L621.5,775.8 L613.4,780.0 L604.7,784.1 L595.5,788.0 L585.7,791.7 L575.4,795.1 L564.6,798.2 L553.4,801.1 L541.7,803.7 L529.7,806.0 L517.4,808.0 L504.8,809.6 L492.0,811.0 L479.0,812.0 L465.9,812.6 L452.7,812.9 L439.5,812.9 L426.3,812.5 L413.2,811.8 L400.2,810.7 L387.4,809.3 L374.8,807.6 L362.5,805.5 L350.6,803.2 L339.0,800.5 L327.8,797.6 L317.0,794.4 L306.8,790.9 L297.0,787.2 L287.8,783.3 L279.1,779.2 L271.1,774.9 L263.6,770.4 L256.8,765.8 L250.6,761.0 L245.0,756.1 L240.1,751.2 L235.9,746.1 L232.3,741.0 L229.3,735.8 L227.0,730.6 L225.4,725.4 L224.4,720.3 L224.0,715.1 L224.3,710.0 L225.1,704.9 L226.6,699.8 L228.6,694.9 L231.2,690.0 L231.7,689.2" fill="none" stroke="#6a0000" stroke-width="1.0"/>
<path d="M659.2,690.9 L661.8,695.7 L663.8,700.7 L665.3,705.7 L666.1,710.7 L666.4,715.8 L666.0,721.0 L665.0,726.1 L663.4,731.3 L661.1,736.4 L658.2,741.5 L654.6,746.6 L650.4,751.6 L645.5,756.5 L640.0,761.3 L633.8,766.0 L627.0,770.5 L619.6,775.0 L611.6,779.2 L603.0,783.2 L593.8,787.1 L584.1,790.7 L573.9,794.0 L563.2,797.2 L552.1,800.0 L540.6,802.6 L528.8,804.8 L516.6,806.8 L504.1,808.4 L491.5,809.7 L478.6,810.7 L465.7,811.3 L452.6,811.6 L439.5,811.6 L426.5,811.2 L413.5,810.5 L400.7,809.5 L388.1,808.1 L375.6,806.4 L363.5,804.4 L351.7,802.0 L340.2,799.4 L329.1,796.5 L318.5,793.4 L308.3,789.9 L298.7,786.3 L289.5,782.4 L281.0,778.3 L273.0,774.1 L265.6,769.7 L258.8,765.1 L252.7,760.4 L247.2,755.5 L242.3,750.6 L238.1,745.6 L234.5,740.6 L231.6,735.5 L229.3,730.4 L227.7,725.2 L226.7,720.1 L226.3,715.0 L226.6,709.9 L227.4,704.8 L228.8,699.9 L230.8,695.0 L233.3,690.2 L233.8,689.4" fill="none" stroke="#f4f000" stroke-width="2.0"/>
<path d="M656.3,690.2 L659.0,695.0 L661.0,699.9 L662.6,704.8 L663.5,709.8 L663.8,714.8 L663.6,719.9 L662.7,725.0 L661.1,730.1 L659.0,735.2 L656.2,740.2 L652.8,745.2 L648.7,750.2 L643.9,755.0 L638.6,759.8 L632.6,764.4 L625.9,769.0 L618.7,773.3 L610.9,777.5 L602.4,781.6 L593.5,785.4 L584.0,789.0 L574.0,792.3 L563.5,795.5 L552.6,798.3 L541.3,800.9 L529.7,803.2 L517.7,805.1 L505.4,806.8 L493.0,808.1 L480.3,809.2 L467.5,809.8 L454.7,810.2 L441.8,810.2 L428.9,809.9 L416.1,809.3 L403.4,808.3 L390.9,807.0 L378.6,805.3 L366.5,803.4 L354.8,801.2 L343.4,798.6 L332.4,795.8 L321.8,792.7 L311.7,789.4 L302.1,785.8 L293.0,782.1 L284.4,778.1 L276.4,773.9 L269.0,769.6 L262.2,765.1 L256.0,760.4 L250.5,755.7 L245.5,750.9 L241.2,745.9 L237.6,741.0 L234.6,735.9 L232.2,730.9 L230.5,725.8 L229.4,720.7 L228.9,715.7 L229.0,710.6 L229.7,705.6 L231.0,700.7 L232.8,695.9 L235.2,691.1 L236.2,689.5" fill="none" stroke="#18e000" stroke-width="2.2"/>
<path d="M654.0,690.4 L656.5,695.1 L658.6,699.9 L660.1,704.8 L661.0,709.7 L661.3,714.7 L661.0,719.7 L660.1,724.7 L658.6,729.7 L656.4,734.8 L653.7,739.8 L650.2,744.7 L646.2,749.6 L641.5,754.4 L636.2,759.1 L630.2,763.7 L623.7,768.1 L616.5,772.5 L608.8,776.6 L600.5,780.6 L591.6,784.3 L582.2,787.9 L572.3,791.2 L562.0,794.3 L551.2,797.1 L540.1,799.6 L528.6,801.8 L516.8,803.8 L504.7,805.4 L492.4,806.8 L479.9,807.8 L467.3,808.4 L454.6,808.8 L441.8,808.8 L429.1,808.5 L416.5,807.9 L404.0,806.9 L391.6,805.6 L379.5,804.0 L367.6,802.1 L356.0,799.9 L344.7,797.4 L333.9,794.6 L323.4,791.6 L313.4,788.3 L303.9,784.8 L294.9,781.1 L286.4,777.1 L278.5,773.0 L271.2,768.7 L264.5,764.3 L258.4,759.7 L252.8,755.1 L248.0,750.3 L243.7,745.4 L240.1,740.5 L237.1,735.5 L234.8,730.5 L233.0,725.5 L231.9,720.5 L231.4,715.5 L231.5,710.5 L232.2,705.6 L233.4,700.7 L235.3,695.9 L237.6,691.2 L238.5,689.7" fill="none" stroke="#6a0000" stroke-width="1.0"/>
</svg>
</div>
<!-- left toolbar -->
<div class="tb" style="top:50px;height:40px">
  <svg width="40" height="40" style="position:absolute;left:0;top:0"><path d="M8,11 h5 l2,2 h9 v2 h-14 l-2,3z" fill="none" stroke="#fff" stroke-width="1.3"/><path d="M8,28 L12,17 H31 L27,28 Z" fill="#fff"/><path d="M8,11 V28" stroke="#fff" stroke-width="1.3"/></svg>
</div>
<div class="tb" style="top:100px;height:200px">
  <svg width="40" height="200" style="position:absolute;left:-1px;top:0" fill="none" stroke="#4d5b7d" stroke-width="1.2"><path d="M14.2,9.8 H28.6 L25.8,16.8 L30.9,29.2 H11.9 L17.0,16.8 Z"/><path d="M11,20.5 H21 M18,17.5 L21.5,20.5 L18,23.5" /><path d="M16.7,51.0 H30.3 L27.6,57.1 L32.5,68.0 H14.5 L19.4,57.1 Z"/><path d="M12.3,58.0 H20.7 L19.0,61.6 L22.0,68.0 H11.0 L14.0,61.6 Z" fill="#4d5b7d" stroke="none"/><path d="M14.2,89.7 H28.6 L25.8,96.6 L30.9,109.0 H11.9 L17.0,96.6 Z"/><path d="M15,96 C8,97 9,101 15,101.5 M27.5,96 C33,97 33,101 27.5,101.5" /><path d="M17,99.5 H22 M19.5,97 L22.5,99.5 L19.5,102" /><path d="M14.6,130.8 H28.2 L25.5,137.0 L30.4,148.0 H12.4 L17.3,137.0 Z"/><path d="M21.4,128 V151"/><path d="M21.4,130.8 H28.2 L25.5,137 L30.4,148 H21.4Z" fill="#4d5b7d" stroke="none"/><path d="M21.1,172.4 H30.9 L29.0,178.5 L32.5,189.4 H19.5 L23.0,178.5 Z" fill="#4d5b7d" stroke="none"/><path d="M14.8,177.0 H26.2 L23.9,182.8 L28.0,193.0 H13.0 L17.1,182.8 Z" stroke-width="1"/><path d="M11.4,180.4 H23.6 L21.2,186.5 L25.5,197.4 H9.5 L13.8,186.5 Z" fill="#4d5b7d" stroke="none"/></svg>
</div>
<div class="tb" style="top:310px;height:39px">
  <svg width="40" height="39" style="position:absolute;left:0;top:0"><path d="M7,19 Q17,9 27,19 Q17,29 7,19Z" fill="#fff"/><circle cx="17" cy="19" r="3.5" fill="#1b2a4e"/><path d="M30,29 L32.5,31.5 L35,29" fill="none" stroke="#fff" stroke-width="1.2"/></svg>
</div>
<!-- view mode panel -->
<div id="panel" class="abs">
  <div class="lbl" style="left:9px;top:8px;font-size:13px;font-weight:bold">视图模式：层</div>
  <div class="lbl" style="left:9px;top:32px;font-size:12px">配色方案</div>
  <div class="abs" style="left:9px;top:52px;width:110px;height:19px;border:1px solid #6e6e6e;background:#fff"><div class="lbl" style="left:7px;top:2px;font-size:11px">线类型</div><div class="chev" style="left:94px;top:4px;width:6px;height:6px"></div></div>
  <div class="cb" style="left:9px;top:82px"></div><div class="lbl" style="left:32px;top:86px">显示空走轨迹</div><div class="sw" style="top:87px;background:#0000ff"></div>
  <div class="cb" style="left:9px;top:103px"><div class="chev" style="left:7px;top:3px;width:5px;height:9px;border-width:0 1.5px 1.5px 0"></div></div><div class="lbl" style="left:32px;top:107px">显示帮助</div><div class="sw" style="top:108px;background:#00ffff"></div>
  <div class="cb" style="left:9px;top:124px"><div class="chev" style="left:7px;top:3px;width:5px;height:9px;border-width:0 1.5px 1.5px 0"></div></div><div class="lbl" style="left:32px;top:128px">显示壁</div><div class="sw" style="top:129px;background:#ff0000"></div>
  <div class="cb" style="left:9px;top:145px"><div class="chev" style="left:7px;top:3px;width:5px;height:9px;border-width:0 1.5px 1.5px 0"></div></div><div class="lbl" style="left:32px;top:149px">显示填充</div><div class="sw" style="top:150px;background:#ffb400"></div>
  <div class="lbl" style="left:9px;top:166px;font-size:12px">顶部/底部</div><div class="sw" style="top:170px;background:#ffff00"></div>
  <div class="lbl" style="left:9px;top:187px;font-size:12px">内壁</div><div class="sw" style="top:191px;background:#00ff00"></div>
  <div class="abs" style="left:144px;top:17px;width:4px;height:196px;background:#7f7f7f"></div>
  <div class="abs" style="left:138.5px;top:9.5px;width:15px;height:15px;border-radius:50%;background:#27a3dc"></div>
  <div class="abs" style="left:138.5px;top:204.5px;width:15px;height:15px;border-radius:50%;background:#27a3dc"></div>
</div>
<div class="abs" style="left:168px;top:365px;width:52px;height:25px">
  <svg width="52" height="25"><path d="M10,0.5 H50.5 V24.5 H10 L0.8,12.5 Z" fill="#fff" stroke="#9a9a9a"/></svg>
  <div class="lbl" style="left:23px;top:6px;font-size:11.5px">590</div>
</div>
<!-- logo -->
<svg class="abs" style="left:20px;top:885px" width="80" height="30"><path d="M5.9,24.4 L17.6,5.4 L21.5,10 L12.4,24.4Z" fill="#1e9fe6"/><path d="M17,16.5 L27.4,24.4 L18.9,24.4Z" fill="#1577c8"/><text x="28.4" y="17.8" font-family="Liberation Sans,sans-serif" font-size="10.5" font-weight="bold" fill="#1d9ee6">极光尔沃</text><text x="28.8" y="23.8" font-family="Liberation Sans,sans-serif" font-size="4.6" font-weight="bold" fill="#e48a6a" letter-spacing="2.3">JGAURORA</text><circle cx="75" cy="7.4" r="1.6" fill="none" stroke="#7cc4ee" stroke-width=".6"/></svg>
<div class="abs" style="left:862px;top:572px;width:9px;height:4px;background:#ff0000"></div>
<!-- object info -->
<div class="lbl" style="left:789px;top:851px;font-size:12.5px;font-weight:bold">龙腾笔筒</div>
<svg class="abs" style="left:846px;top:852px" width="16" height="16"><path d="M2,14 L3,10 L11,2 L14,5 L6,13 Z" fill="#1b2a4e"/><path d="M10,3 L13,6" stroke="#f5f5f5" stroke-width="1"/></svg>
<div class="lbl" style="left:745px;top:873px;font-size:11px;font-weight:bold;color:#566079">90.8 x 90.8 x 118.0 毫米</div>
<svg class="abs" style="left:676px;top:893px" width="14" height="14"><circle cx="7" cy="7" r="5.8" fill="none" stroke="#566079" stroke-width="1.4"/><path d="M7,3.5 V7.5 H4.5" fill="none" stroke="#566079" stroke-width="1.3"/></svg>
<div class="lbl" style="left:695px;top:893px;font-size:11px;font-weight:bold;color:#566079">13时 33分</div>
<svg class="abs" style="left:753px;top:892px" width="12" height="15"><path d="M1,1V14M4,2V13M6,1V14M8,2V13M11,1V14" stroke="#8a93a6" stroke-width="1.2"/></svg>
<div class="lbl" style="left:771px;top:893px;font-size:11px;font-weight:bold;color:#566079">42.57 米 / ~ 126 克</div>
<!-- sidebar -->
<div id="side" class="abs">
  <div class="abs" style="left:0;top:0;width:350px;height:40px;background:#1b2a4e"></div>
  <div class="lbl" style="left:10px;top:13px;font-size:12px;font-weight:bold;color:#fff">Z-603S</div>
  <div class="chev" style="left:223px;top:14px;border-color:#fff;width:6px;height:6px;border-width:0 1.4px 1.4px 0"></div>
  <div class="abs" style="left:250px;top:0;width:39px;height:38px;background:#4a5674"></div>
  <div class="abs" style="left:250px;top:38px;width:39px;height:2px;background:#27a3dc"></div>
  <svg class="abs" style="left:250px;top:0" width="39" height="40"><path d="M9,9 H20 L15,20 L20,31 H9 L14,20 Z" fill="#fff"/><path d="M20,10h8M21,13h7M20,16h6M19,19h7M19,22h8M20,25h7M21,28h7M22,31h7" stroke="#c9cdd6" stroke-width="1.3"/></svg>
  <svg class="abs" style="left:307px;top:9px" width="24" height="24"><rect x="1.5" y="1.5" width="21" height="19" fill="none" stroke="#fff" stroke-width="1"/><rect x="4" y="4" width="16" height="15" fill="none" stroke="#fff" stroke-width="1"/><rect x="5" y="16.5" width="14" height="2" fill="#fff"/><circle cx="12" cy="6" r="1.5" fill="#fff"/></svg>
  <div class="lbl" style="left:10px;top:56px;font-size:11px">材料:</div>
  <div class="abs" style="left:148px;top:52px;width:192px;height:20px;border:1px solid #6e6e6e"><div class="lbl" style="left:5px;top:3px;font-size:11px">PLA</div><div class="chev" style="left:177px;top:4px;width:6px;height:6px;border-width:0 1.4px 1.4px 0"></div></div>
  <div class="lbl" style="left:10px;top:85px;font-size:11px">配置文件:</div>
  <div class="abs" style="left:148px;top:82px;width:192px;height:20px;border:1px solid #6e6e6e;overflow:hidden"><div class="lbl" style="left:5px;top:3px;font-size:11px">PLA 普通质量(PLA Normal Qua</div><div class="abs" style="left:153px;top:1px;font-size:14px;color:#8f8f8f;background:#fff;width:20px">★</div><div class="chev" style="left:177px;top:4px;width:6px;height:6px;border-width:0 1.4px 1.4px 0"></div></div>
  <div class="abs" style="left:0;top:111px;width:350px;height:6px;background:#f0f0f0"></div>
  <div class="lbl" style="left:10px;top:128px;font-size:12.5px;font-weight:bold">打印设置</div>
  <div class="lbl" style="left:202px;top:130px;font-size:11px">推荐</div>
  <div class="abs" style="left:233px;top:131px;width:20px;height:11px;border:1.3px solid #888;border-radius:6px"></div><div class="abs" style="left:243px;top:132px;width:10px;height:10px;border-radius:50%;background:#1b2a4e"></div>
  <div class="lbl" style="left:264px;top:130px;font-size:11px;color:#1ea0e0">自定义配置文件</div>
  <div class="abs" style="left:10px;top:157px;width:330px;height:20px;border:1px solid #6e6e6e"><div class="lbl" style="left:4px;top:5px;font-size:11px;color:#9a9a9a">搜索</div></div>
  <div class="hdr" style="top:188.0px"><svg class="abs" style="left:5px;top:3px" width="14" height="14"><path d="M1,2h12v3h-12z M1,7h9v1.5h-9z M1,10h7v1.5h-7z" fill="#1b2a4e"/></svg><div class="lbl" style="left:23px;top:3px;font-size:11.5px;font-weight:bold">质量</div><div class="lbl it" style="left:299px;top:2px;font-size:13px;color:#6d6d6d;font-family:'Liberation Serif',serif">i</div><div class="chev" style="left:313px;top:5px;width:6px;height:6px;border-width:0 1.4px 1.4px 0"></div></div>
<div class="lbl it" style="left:33px;top:212.5px">层高</div>
<div class="inp" style="top:208.5px">0.1<span class="unit">mm</span></div>
<div class="rst" style="top:210.5px;left:223px">↺</div>
<div class="lbl it" style="left:33px;top:233.5px">初始层高度</div>
<div class="inp" style="top:229.5px">0.3<span class="unit">mm</span></div>
<div class="rst" style="top:231.5px;left:223px">↺</div>
<div class="lbl" style="left:47px;top:254.5px">墙线宽度</div>
<div class="inp" style="top:250.5px">0.4<span class="unit">mm</span></div>
<div class="lbl" style="left:61px;top:275.5px">外墙线宽度</div>
<div class="inp" style="top:271.5px">0.4<span class="unit">mm</span></div>
<div class="lbl" style="left:61px;top:296.5px">内墙（S）线宽度</div>
<div class="inp" style="top:292.5px">0.4<span class="unit">mm</span></div>
<div class="hdr" style="top:313.6px"><svg class="abs" style="left:5px;top:2px" width="14" height="15"><path d="M2,1.5 H12 L11,7 L13,13.5 H1 L3,7 Z M4,2v11 M10,2v11" fill="none" stroke="#1b2a4e" stroke-width="1"/></svg><div class="lbl" style="left:23px;top:3px;font-size:11.5px;font-weight:bold">壳</div><div class="chev" style="left:313px;top:5px;width:6px;height:6px;border-width:0 1.4px 1.4px 0"></div></div>
<div class="lbl" style="left:33px;top:338.5px">壁厚</div>
<div class="inp" style="top:334.5px">1.2<span class="unit">mm</span></div>
<div class="lbl" style="left:33px;top:359.5px">底部/顶部厚度</div>
<div class="inp" style="top:355.5px">1.2<span class="unit">mm</span></div>
<div class="lbl" style="left:33px;top:380.5px">水平扩展</div>
<div class="inp" style="top:376.5px">0<span class="unit">mm</span></div>
<div class="hdr" style="top:397.3px"><svg class="abs" style="left:5px;top:2px" width="15" height="15"><rect x="1" y="1" width="13" height="13" fill="none" stroke="#1b2a4e"/><path d="M1,7.5 L7.5,1 L14,7.5 L7.5,14Z" fill="none" stroke="#1b2a4e" stroke-width=".8"/></svg><div class="lbl" style="left:23px;top:3px;font-size:11.5px;font-weight:bold">填充</div><div class="chev" style="left:313px;top:5px;width:6px;height:6px;border-width:0 1.4px 1.4px 0"></div></div>
<div class="lbl it" style="left:33px;top:422.5px">填充密度</div>
<div class="inp" style="top:418.5px">7<span class="unit">%</span></div>
<div class="rst" style="top:420.5px;left:223px">↺</div>
<div class="lbl it" style="left:33px;top:443.5px">填充样式</div>
<div class="inp" style="top:439.5px">三角形<div class="chev" style="left:86px;top:4px;width:6px;height:6px;border-width:0 1.4px 1.4px 0"></div></div>
<div class="rst" style="top:441.5px;left:207px">↺</div><div class="lbl it" style="left:228px;top:441.5px;font-size:13px;color:#6d6d6d;font-family:'Liberation Serif',serif">i</div>
<div class="hdr" style="top:460.5px"><svg class="abs" style="left:5px;top:2px" width="15" height="15"><path d="M1,1v13M4,2v12M6,1v13M8,2v12M10,1v13M13,1v13" stroke="#1b2a4e" stroke-width="1"/></svg><div class="lbl" style="left:23px;top:3px;font-size:11.5px;font-weight:bold">材料</div><div class="chev" style="left:313px;top:5px;width:6px;height:6px;border-width:0 1.4px 1.4px 0"></div></div>
<div class="lbl it" style="left:33px;top:485.5px">打印温度</div>
<div class="inp" style="top:481.5px">200<span class="unit">°C</span></div>
<div class="rst" style="top:483.5px;left:207px">↺</div><div class="lbl it" style="left:228px;top:483.5px;font-size:13px;color:#6d6d6d;font-family:'Liberation Serif',serif">i</div>
<div class="lbl it" style="left:33px;top:506.5px">平台温度</div>
<div class="inp" style="top:502.5px">50<span class="unit">°C</span></div>
<div class="rst" style="top:504.5px;left:223px">↺</div>
<div class="lbl" style="left:33px;top:527.5px">直径</div>
<div class="inp" style="top:523.5px">1.75<span class="unit">mm</span></div>
<div class="lbl" style="left:33px;top:548.5px">流量</div>
<div class="inp" style="top:544.5px">100<span class="unit">%</span></div>
<div class="lbl" style="left:33px;top:569.7px">启动回抽</div>
<div class="cb" style="left:240px;top:565.7px;width:19.5px;height:19px"><div class="chev" style="left:6px;top:2px;width:5px;height:9px;border-width:0 1.5px 1.5px 0"></div></div>
<div class="hdr" style="top:586.6px"><svg class="abs" style="left:5px;top:2px" width="15" height="15"><circle cx="7.5" cy="7.5" r="6" fill="none" stroke="#1b2a4e" stroke-width="1.1"/><path d="M7.5,7.5 L5,4" stroke="#1b2a4e" stroke-width="1.2"/></svg><div class="lbl" style="left:23px;top:3px;font-size:11.5px;font-weight:bold">速度</div><div class="lbl it" style="left:299px;top:2px;font-size:13px;color:#6d6d6d;font-family:'Liberation Serif',serif">i</div><div class="chev" style="left:313px;top:5px;width:6px;height:6px;border-width:0 1.4px 1.4px 0"></div></div>
<div class="lbl it" style="left:33px;top:611.7px">打印速度</div>
<div class="inp" style="top:607.7px">60<span class="unit">mm/s</span></div>
<div class="rst" style="top:609.7px;left:223px">↺</div>
<div class="lbl" style="left:33px;top:632.4px">空走速度</div>
<div class="inp" style="top:628.4px">90.0<span class="unit">mm/s</span></div>
<div class="lbl it" style="left:228px;top:630.4px;font-size:13px;color:#6d6d6d;font-family:'Liberation Serif',serif">i</div>
<div class="hdr" style="top:649.5px"><svg class="abs" style="left:5px;top:2px" width="15" height="15"><path d="M7.5,7.5 L7,1 M7.5,7.5 L13.5,6 M7.5,7.5 L11,13 M7.5,7.5 L2,12 M7.5,7.5 L1.5,4 M7.5,7.5 L11,2 M7.5,7.5 L14,10 M7.5,7.5 L6,14" stroke="#1b2a4e" stroke-width="1.2"/></svg><div class="lbl" style="left:23px;top:3px;font-size:11.5px;font-weight:bold">冷却</div><div class="chev" style="left:315px;top:6px;width:6px;height:6px;border-style:solid;border-color:#1b2a4e;border-width:0 0 1.4px 1.4px"></div></div>
<div class="hdr" style="top:670.2px"><svg class="abs" style="left:5px;top:2px" width="15" height="15"><path d="M3,1.5 H13 L12,7 L14,14 H7" fill="none" stroke="#1b2a4e"/><rect x="1" y="8" width="6" height="6" fill="#1b2a4e"/><rect x="3" y="4" width="3" height="4" fill="#1b2a4e"/></svg><div class="lbl" style="left:23px;top:3px;font-size:11.5px;font-weight:bold">支撑</div><div class="chev" style="left:313px;top:5px;width:6px;height:6px;border-width:0 1.4px 1.4px 0"></div></div>
<div class="lbl" style="left:33px;top:695.3px">生成支撑</div>
<div class="cb" style="left:240px;top:691.3px;width:19.5px;height:19px"></div>
<div class="hdr" style="top:712.0px"><svg class="abs" style="left:5px;top:2px" width="15" height="15"><path d="M2,7.5h11" stroke="#1b2a4e"/><rect x="6.5" y="2" width="2" height="2" fill="#1b2a4e"/><rect x="6.5" y="11" width="2" height="2" fill="#1b2a4e"/></svg><div class="lbl" style="left:23px;top:3px;font-size:11.5px;font-weight:bold">平台附着</div><div class="chev" style="left:313px;top:5px;width:6px;height:6px;border-width:0 1.4px 1.4px 0"></div></div>
<div class="lbl it" style="left:33px;top:737.4px">打印平台附着类型</div>
<div class="inp" style="top:733.4px">物边<div class="chev" style="left:86px;top:4px;width:6px;height:6px;border-width:0 1.4px 1.4px 0"></div></div>
<div class="rst" style="top:735.4px;left:223px">↺</div>
<div class="lbl it" style="left:33px;top:758.7px">物边宽度</div>
<div class="inp" style="top:754.7px">8<span class="unit">mm</span></div>
<div class="rst" style="top:756.7px;left:223px">↺</div>
  <div class="abs" style="left:0;top:781px;width:350px;height:5px;background:#f0f0f0"></div>
  <div class="lbl" style="left:10px;top:797px;font-size:12px;font-weight:bold">准备到 保存到可移动的存储设备</div>
  <div class="abs" style="left:10px;top:816px;width:329px;height:7px;border-radius:4px;background:#f2f2f2"></div>
  <div class="abs" style="left:164px;top:833px;width:176px;height:27px;border:1px solid #7a7a7a"></div>
  <div class="abs" style="left:313px;top:833px;width:1px;height:27px;background:#7a7a7a"></div>
  <div class="lbl" style="left:175px;top:840px;font-size:11.5px;font-weight:bold">保存到可移动的存储设备</div>
  <div class="chev" style="left:323px;top:841px;width:6px;height:6px;border-width:0 1.4px 1.4px 0"></div>
</div>
<div id="frameR" class="abs"></div><div id="frameR2" class="abs"></div><div id="frameB" class="abs"></div>
</body></html>
